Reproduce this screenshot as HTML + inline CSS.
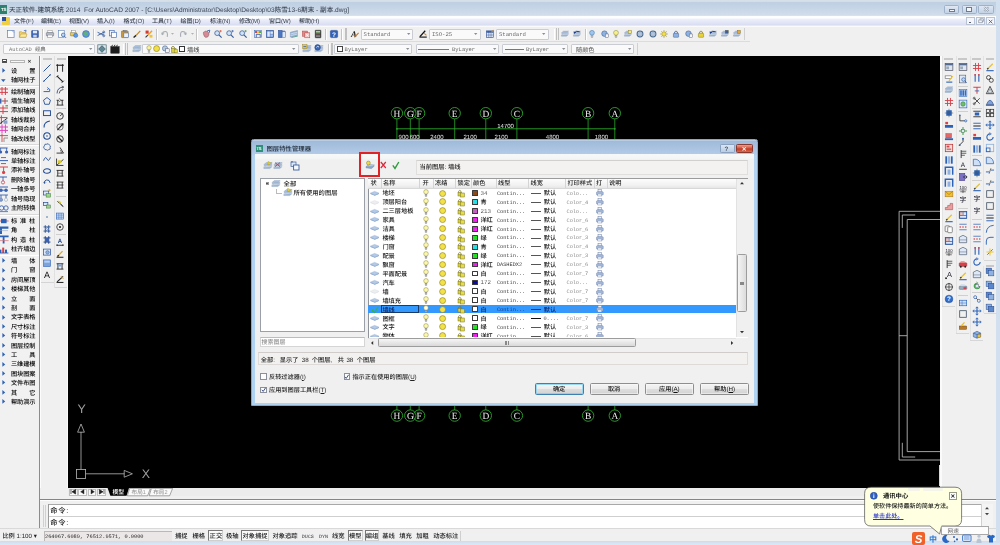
<!DOCTYPE html>
<html lang="zh"><head><meta charset="utf-8"><title>AutoCAD</title>
<style>
html,body{margin:0;padding:0}
body{width:1000px;height:545px;overflow:hidden;position:relative;background:#f0f0f0;font-family:"Liberation Sans","Noto Sans CJK SC",sans-serif;font-size:6.4px;color:#111;text-rendering:geometricPrecision;font-weight:500}
body div{position:absolute;box-sizing:border-box}
.t{white-space:nowrap}
.m{white-space:nowrap;font-family:"Liberation Mono","Noto Sans CJK SC",monospace}
svg{position:absolute;overflow:visible}
svg.i{filter:blur(0.28px)}
</style></head>
<body>
<div id="app" style="left:0;top:0;width:1000px;height:545px;will-change:transform;filter:blur(0.35px)">
<div style="left:0px;top:0px;width:1000px;height:16px;background:linear-gradient(#d8e0e9 0,#d4dde8 1.8px,#bfd0e3 2.4px,#c6d5e6 8px,#d3ddec 15.4px,#eef2f8 16px)"></div>
<div style="left:0px;top:4.6px;width:7px;height:9px;background:#2f7f6f"></div>
<div class="t" style="left:1px;top:7px;font-size:4.5px;line-height:5.85px;color:#fff;font-weight:bold;letter-spacing:-0.3px">TS</div>
<div class="t" style="left:9px;top:7px;font-size:6.6px;line-height:8.58px;color:#3c4654;">天正软件-建筑系统 2014&nbsp; For AutoCAD 2007 - [C:\Users\Administrator\Desktop\Desktop\03陈雪13-6期末 - 副本.dwg]</div>
<div style="left:944.2px;top:5.4px;width:15.0px;height:8.6px;border:0.6px solid #9fb2c9;border-radius:1.6px;background:linear-gradient(#dfe8f3,#c3d3e6)"></div>
<div style="left:961.6px;top:5.4px;width:15.0px;height:8.6px;border:0.6px solid #9fb2c9;border-radius:1.6px;background:linear-gradient(#dfe8f3,#c3d3e6)"></div>
<div style="left:978.4px;top:5.4px;width:15.600000000000023px;height:8.6px;border:0.6px solid #9fb2c9;border-radius:1.6px;background:linear-gradient(#dfe8f3,#c3d3e6)"></div>
<div style="left:949px;top:9.4px;width:6px;height:2.4px;border:0.6px solid #6f7a8a;background:#f4f7fb"></div>
<div style="left:965.8px;top:7.4px;width:6.6px;height:4.8px;border:0.6px solid #6f7a8a;border-top-width:1.2px;background:#f4f7fb"></div>
<svg class="i" style="left:982.8px;top:6.4px" width="7" height="7" viewBox="0 0 7 7"><path d="M1.2 1.2 L5.6 5.4 M5.6 1.2 L1.2 5.4" fill="none" stroke="#8a95a5" stroke-width="1.7" /><path d="M1.2 1.2 L5.6 5.4 M5.6 1.2 L1.2 5.4" fill="none" stroke="#ffffff" stroke-width="0.8" /></svg>
<div style="left:996px;top:0px;width:4px;height:545px;background:#d2dfee"></div>
<div style="left:0px;top:15.6px;width:996px;height:11px;background:linear-gradient(#fdfeff 0,#fdfeff 2px,#eef1fa 3px,#d8dcf2 9.2px,#f4f5fb 9.8px,#fbfbfd 11px)"></div>
<div style="left:2px;top:16.5px;width:8px;height:8.5px;background:#f0d040;border-radius:1px"></div>
<div style="left:2px;top:16.5px;width:4px;height:4px;background:#3050a0"></div>
<div class="t" style="left:14px;top:19px;font-size:6.0px;line-height:7.8px;color:#333b48;">文件(F)</div>
<div class="t" style="left:41px;top:19px;font-size:6.0px;line-height:7.8px;color:#333b48;">编辑(E)</div>
<div class="t" style="left:69px;top:19px;font-size:6.0px;line-height:7.8px;color:#333b48;">视图(V)</div>
<div class="t" style="left:97px;top:19px;font-size:6.0px;line-height:7.8px;color:#333b48;">插入(I)</div>
<div class="t" style="left:123.5px;top:19px;font-size:6.0px;line-height:7.8px;color:#333b48;">格式(O)</div>
<div class="t" style="left:152px;top:19px;font-size:6.0px;line-height:7.8px;color:#333b48;">工具(T)</div>
<div class="t" style="left:180.5px;top:19px;font-size:6.0px;line-height:7.8px;color:#333b48;">绘图(D)</div>
<div class="t" style="left:210px;top:19px;font-size:6.0px;line-height:7.8px;color:#333b48;">标注(N)</div>
<div class="t" style="left:239px;top:19px;font-size:6.0px;line-height:7.8px;color:#333b48;">修改(M)</div>
<div class="t" style="left:269px;top:19px;font-size:6.0px;line-height:7.8px;color:#333b48;">窗口(W)</div>
<div class="t" style="left:299px;top:19px;font-size:6.0px;line-height:7.8px;color:#333b48;">帮助(H)</div>
<div style="left:966px;top:17.3px;width:8.6px;height:7.4px;border:0.5px solid #b9c3d6;background:#f4f6fb"></div>
<div style="left:976.3px;top:17.3px;width:8.6px;height:7.4px;border:0.5px solid #b9c3d6;background:#f4f6fb"></div>
<div style="left:986.2px;top:17.3px;width:8.6px;height:7.4px;border:0.5px solid #b9c3d6;background:#f4f6fb"></div>
<div style="left:968.6px;top:22.2px;width:2.6px;height:0.8px;background:#5a6474"></div>
<svg class="i" style="left:977.6px;top:18.4px" width="6" height="6" viewBox="0 0 6 6"><rect x="2" y="0.8" width="3.4" height="2.8" fill="none" rx="0" stroke="#7a8494" stroke-width="0.6"/><rect x="0.8" y="2" width="3.4" height="2.8" fill="#f4f6fb" rx="0" stroke="#7a8494" stroke-width="0.6"/></svg>
<svg class="i" style="left:987.8px;top:18.6px" width="6" height="6" viewBox="0 0 6 6"><path d="M0.8 0.8 L4.4 4.4 M4.4 0.8 L0.8 4.4" fill="none" stroke="#5a6474" stroke-width="0.9" /></svg>
<div style="left:0px;top:26px;width:996px;height:30px;background:#f0f0f0"></div>
<div style="left:0px;top:26px;width:996px;height:0.6px;background:#fafafa"></div>
<div style="left:0px;top:40.8px;width:750px;height:0.6px;background:#dcdcdc"></div>
<svg class="i" style="left:5.6px;top:29.3px" width="10" height="10" viewBox="0 0 10 10"><g transform="translate(0.7,0.7) scale(0.86)"><rect x="1" y="0.8" width="7.6" height="8.4" fill="#fdfdff" rx="0" stroke="#5d7fb5" stroke-width="0.8"/><path d="M6 0.8 L8.6 3.4" fill="none" stroke="#5d7fb5" stroke-width="0.7" /></g></svg>
<svg class="i" style="left:17.8px;top:29.3px" width="10" height="10" viewBox="0 0 10 10"><g transform="translate(0.7,0.7) scale(0.86)"><path d="M0.8 8.8 L0.8 2.4 L3.4 2.4 L4.4 3.4 L8.4 3.4 L8.4 8.8 Z" fill="#f4d266" stroke="#b08a28" stroke-width="0.6" /><path d="M0.8 8.8 L2.6 5 L9.6 5 L8.4 8.8Z" fill="#fbe89a" stroke="#b08a28" stroke-width="0.5" /><path d="M6 1.2 L8.6 0.6 L8 3" fill="none" stroke="#3a69c0" stroke-width="0.9" /></g></svg>
<svg class="i" style="left:29.8px;top:29.3px" width="10" height="10" viewBox="0 0 10 10"><g transform="translate(0.7,0.7) scale(0.86)"><rect x="1" y="1" width="8" height="8" fill="#3f67b8" rx="0.6" stroke="#27478a" stroke-width="0.6"/><rect x="2.6" y="1.2" width="4.8" height="3" fill="#dfe8f8" rx="0"/><rect x="3" y="6" width="4" height="3" fill="#c9d2e4" rx="0"/></g></svg>
<div style="left:42.4px;top:29.4px;width:0.6px;height:10.4px;background:#c4c4c4"></div>
<div style="left:43.0px;top:29.4px;width:0.6px;height:10.4px;background:#fff"></div>
<svg class="i" style="left:45.4px;top:29.3px" width="10" height="10" viewBox="0 0 10 10"><g transform="translate(0.7,0.7) scale(0.86)"><rect x="2.5" y="0.8" width="5" height="3" fill="#fff" rx="0" stroke="#777" stroke-width="0.5"/><rect x="0.8" y="3.4" width="8.4" height="3.8" fill="#b9bec8" rx="0.6" stroke="#5e6470" stroke-width="0.6"/><rect x="2.4" y="6.2" width="5.2" height="2.8" fill="#fff" rx="0" stroke="#777" stroke-width="0.5"/></g></svg>
<svg class="i" style="left:57px;top:29.3px" width="10" height="10" viewBox="0 0 10 10"><g transform="translate(0.7,0.7) scale(0.86)"><rect x="1" y="0.8" width="6.6" height="8" fill="#fff" rx="0" stroke="#5d7fb5" stroke-width="0.7"/><circle cx="6.4" cy="6" r="2.1" fill="#bcd6f4" stroke="#3b5f9c" stroke-width="0.8"/><path d="M7.9 7.6 L9.6 9.4" fill="none" stroke="#3b5f9c" stroke-width="1.1" /></g></svg>
<svg class="i" style="left:69px;top:29.3px" width="10" height="10" viewBox="0 0 10 10"><g transform="translate(0.7,0.7) scale(0.86)"><rect x="0.8" y="3.2" width="7" height="4" fill="#e9c84e" rx="0.5" stroke="#8d7424" stroke-width="0.6"/><rect x="2" y="0.8" width="4.6" height="2.6" fill="#fff" rx="0" stroke="#777" stroke-width="0.5"/><circle cx="7" cy="6.6" r="2.4" fill="#5d9be0" stroke="#2d5aa0" stroke-width="0.5"/></g></svg>
<svg class="i" style="left:81px;top:29.3px" width="10" height="10" viewBox="0 0 10 10"><g transform="translate(0.7,0.7) scale(0.86)"><circle cx="5" cy="5" r="4" fill="#5b9adf" stroke="#2d5aa0" stroke-width="0.6"/><path d="M2.4 3.4 Q4.5 2 6 3.6 Q7 5.4 5 6.4 Q3 6.8 2.4 3.4Z" fill="#63b84f" stroke="none" stroke-width="0" /></g></svg>
<div style="left:93.2px;top:29.4px;width:0.6px;height:10.4px;background:#c4c4c4"></div>
<div style="left:93.8px;top:29.4px;width:0.6px;height:10.4px;background:#fff"></div>
<svg class="i" style="left:95.8px;top:29.3px" width="10" height="10" viewBox="0 0 10 10"><g transform="translate(0.7,0.7) scale(0.86)"><path d="M1 3 L8.6 6.6 M1 6.8 L8.6 3" fill="none" stroke="#2d5aa0" stroke-width="1.0" /><circle cx="8.2" cy="2.8" r="1.2" fill="none" stroke="#2d5aa0" stroke-width="0.8"/><circle cx="8.2" cy="7" r="1.2" fill="none" stroke="#2d5aa0" stroke-width="0.8"/></g></svg>
<svg class="i" style="left:108px;top:29.3px" width="10" height="10" viewBox="0 0 10 10"><g transform="translate(0.7,0.7) scale(0.86)"><rect x="0.8" y="0.8" width="5.6" height="6.4" fill="#eef3fc" rx="0" stroke="#4a6fb3" stroke-width="0.8"/><rect x="3.4" y="3" width="5.8" height="6.2" fill="#fdfdff" rx="0" stroke="#4a6fb3" stroke-width="0.8"/></g></svg>
<svg class="i" style="left:120px;top:29.3px" width="10" height="10" viewBox="0 0 10 10"><g transform="translate(0.7,0.7) scale(0.86)"><rect x="1" y="1.4" width="7.6" height="7.8" fill="#c99a45" rx="0.6" stroke="#7d5a1e" stroke-width="0.6"/><rect x="3" y="0.6" width="3.6" height="1.8" fill="#9aa3b3" rx="0" stroke="#555" stroke-width="0.4"/><rect x="3.6" y="3.8" width="5.6" height="5.4" fill="#eaf1fc" rx="0" stroke="#4a6fb3" stroke-width="0.7"/></g></svg>
<svg class="i" style="left:132px;top:29.3px" width="10" height="10" viewBox="0 0 10 10"><g transform="translate(0.7,0.7) scale(0.86)"><path d="M1 9 L4 6.6" fill="none" stroke="#222" stroke-width="1.6" /><path d="M4 6.6 L8.8 1.4" fill="none" stroke="#c08a2e" stroke-width="1.5" /></g></svg>
<svg class="i" style="left:144px;top:29.3px" width="10" height="10" viewBox="0 0 10 10"><g transform="translate(0.7,0.7) scale(0.86)"><path d="M1 9 L3.6 6.4" fill="none" stroke="#333" stroke-width="1.3" /><path d="M3.6 6.4 L8.6 1.2" fill="none" stroke="#e3a32c" stroke-width="1.6" /><rect x="1" y="1" width="3.6" height="3.6" fill="#d83a2a" rx="0"/><rect x="5.6" y="6" width="3.4" height="3.2" fill="#f0c33c" rx="0"/></g></svg>
<div style="left:156.4px;top:29.4px;width:0.6px;height:10.4px;background:#c4c4c4"></div>
<div style="left:157.0px;top:29.4px;width:0.6px;height:10.4px;background:#fff"></div>
<svg class="i" style="left:159.6px;top:29.3px" width="10" height="10" viewBox="0 0 10 10"><g transform="translate(0.7,0.7) scale(0.86)"><path d="M2 2 L2 6 L6 6" fill="none" stroke="none" stroke-width="0" /><path d="M1.6 5.6 Q2.4 1.6 6 2.2 Q8.6 3.2 7.6 8.4" fill="none" stroke="#a9adb5" stroke-width="1.3" /><path d="M0.4 3.2 L1.6 6.4 L4.4 4.6Z" fill="#a9adb5" stroke="none" stroke-width="0" /></g></svg>
<svg class="i" style="left:177.6px;top:29.3px" width="10" height="10" viewBox="0 0 10 10"><g transform="translate(0.7,0.7) scale(0.86)"><g transform="translate(10,0) scale(-1,1)"><path d="M2 2 L2 6 L6 6" fill="none" stroke="none" stroke-width="0" /><path d="M1.6 5.6 Q2.4 1.6 6 2.2 Q8.6 3.2 7.6 8.4" fill="none" stroke="#a9adb5" stroke-width="1.3" /><path d="M0.4 3.2 L1.6 6.4 L4.4 4.6Z" fill="#a9adb5" stroke="none" stroke-width="0" /></g></g></svg>
<div style="left:196px;top:29.4px;width:0.6px;height:10.4px;background:#c4c4c4"></div>
<div style="left:196.6px;top:29.4px;width:0.6px;height:10.4px;background:#fff"></div>
<svg class="i" style="left:200.6px;top:29.3px" width="10" height="10" viewBox="0 0 10 10"><g transform="translate(0.7,0.7) scale(0.86)"><path d="M2 5 Q1.4 2 3.4 2.4 Q4 0.8 5.4 1.8 Q7 1 7.4 3 Q9 3.4 8.4 6 Q8 9 5 9 Q3 9 2 5Z" fill="#d58a94" stroke="#7a4b54" stroke-width="0.5" /><path d="M6.4 1.4 L9.4 0.6 L8.8 3.6" fill="none" stroke="#2d5aa0" stroke-width="1" /></g></svg>
<svg class="i" style="left:213px;top:29.3px" width="10" height="10" viewBox="0 0 10 10"><g transform="translate(0.7,0.7) scale(0.86)"><circle cx="4" cy="4" r="2.8" fill="#cfe2f8" stroke="#3b5f9c" stroke-width="0.9"/><path d="M6 6 L9.2 9.2" fill="none" stroke="#3b5f9c" stroke-width="1.4" /><path d="M6.6 1.6 L9.4 1.6 M8 0.4 L8 3" fill="none" stroke="#d94a3a" stroke-width="0.8" /></g></svg>
<svg class="i" style="left:225.4px;top:29.3px" width="10" height="10" viewBox="0 0 10 10"><g transform="translate(0.7,0.7) scale(0.86)"><circle cx="4" cy="4" r="2.8" fill="#cfe2f8" stroke="#3b5f9c" stroke-width="0.9"/><path d="M6 6 L9.2 9.2" fill="none" stroke="#3b5f9c" stroke-width="1.4" /><path d="M6.6 1.6 L9.4 1.6 M8 0.4 L8 3" fill="none" stroke="#3b5f9c" stroke-width="0.8" /></g></svg>
<svg class="i" style="left:237.8px;top:29.3px" width="10" height="10" viewBox="0 0 10 10"><g transform="translate(0.7,0.7) scale(0.86)"><circle cx="4" cy="4" r="2.8" fill="#cfe2f8" stroke="#3b5f9c" stroke-width="0.9"/><path d="M6 6 L9.2 9.2" fill="none" stroke="#3b5f9c" stroke-width="1.4" /><path d="M6.6 1.6 L9.4 1.6 M8 0.4 L8 3" fill="none" stroke="#3f9c4a" stroke-width="0.8" /></g></svg>
<div style="left:249.8px;top:29.4px;width:0.6px;height:10.4px;background:#c4c4c4"></div>
<div style="left:250.4px;top:29.4px;width:0.6px;height:10.4px;background:#fff"></div>
<svg class="i" style="left:252.6px;top:29.3px" width="10" height="10" viewBox="0 0 10 10"><g transform="translate(0.7,0.7) scale(0.86)"><rect x="1" y="1" width="8" height="8" fill="#e9eef8" rx="0" stroke="#4a6fb3" stroke-width="0.7"/><rect x="1.6" y="1.6" width="2.2" height="2.2" fill="#d83a2a" rx="0"/><rect x="4" y="1.6" width="2.2" height="2.2" fill="#e7c531" rx="0"/><rect x="6.4" y="1.6" width="2" height="2.2" fill="#3f9c4a" rx="0"/><path d="M3 5.4 L3 9 M3 5.4 L7.6 5.4 L7.6 8.6" fill="none" stroke="#27478a" stroke-width="0.9" /></g></svg>
<svg class="i" style="left:264.6px;top:29.3px" width="10" height="10" viewBox="0 0 10 10"><g transform="translate(0.7,0.7) scale(0.86)"><rect x="0.8" y="0.8" width="8.4" height="8.4" fill="#4a78c4" rx="0" stroke="#27478a" stroke-width="0.6"/><rect x="1.8" y="2" width="3" height="6.2" fill="#dfe8f8" rx="0"/><rect x="5.4" y="2" width="3" height="2.8" fill="#dfe8f8" rx="0"/><rect x="5.4" y="5.4" width="3" height="2.8" fill="#a7c0e8" rx="0"/></g></svg>
<svg class="i" style="left:276.6px;top:29.3px" width="10" height="10" viewBox="0 0 10 10"><g transform="translate(0.7,0.7) scale(0.86)"><rect x="0.8" y="0.8" width="4.4" height="8.4" fill="#4a78c4" rx="0" stroke="#27478a" stroke-width="0.6"/><rect x="5.2" y="2.4" width="3.8" height="6.8" fill="#dfe8f8" rx="0" stroke="#4a6fb3" stroke-width="0.6"/><path d="M5.4 2.4 Q7.6 0.4 9 2.4" fill="none" stroke="#27478a" stroke-width="0.8" /></g></svg>
<svg class="i" style="left:288.8px;top:29.3px" width="10" height="10" viewBox="0 0 10 10"><g transform="translate(0.7,0.7) scale(0.86)"><path d="M0.8 3 L9 1 L9 6.6 L0.8 8.6Z" fill="#9db7d8" stroke="#5f7fa8" stroke-width="0.5" /><path d="M0.8 5 L9 3 M0.8 7 L9 5" fill="none" stroke="#e8f0fa" stroke-width="0.6" /><path d="M2 9 L9.4 7.4" fill="none" stroke="#4a9a8a" stroke-width="1" /></g></svg>
<svg class="i" style="left:300.8px;top:29.3px" width="10" height="10" viewBox="0 0 10 10"><g transform="translate(0.7,0.7) scale(0.86)"><rect x="0.8" y="1.6" width="6" height="6" fill="#e58a8a" rx="0" stroke="#b34848" stroke-width="0.6"/><rect x="3.6" y="3.6" width="5.8" height="5.8" fill="#f4c1c1" rx="0" stroke="#b34848" stroke-width="0.6"/><path d="M5 5 L8 8 M8 5 L5 8" fill="none" stroke="#fff" stroke-width="0.7" /></g></svg>
<svg class="i" style="left:312.6px;top:29.3px" width="10" height="10" viewBox="0 0 10 10"><g transform="translate(0.7,0.7) scale(0.86)"><rect x="1.8" y="0.6" width="6.6" height="8.8" fill="#3a3a3a" rx="0.5" stroke="#111" stroke-width="0.5"/><rect x="2.6" y="1.4" width="5" height="2" fill="#9fd48a" rx="0"/><rect x="2.6" y="4.2" width="5" height="1" fill="#c85a4a" rx="0"/><rect x="2.6" y="6" width="5" height="0.9" fill="#999" rx="0"/><rect x="2.6" y="7.6" width="5" height="0.9" fill="#999" rx="0"/></g></svg>
<div style="left:325.4px;top:29.4px;width:0.6px;height:10.4px;background:#c4c4c4"></div>
<div style="left:326.0px;top:29.4px;width:0.6px;height:10.4px;background:#fff"></div>
<svg class="i" style="left:328.6px;top:29.3px" width="10" height="10" viewBox="0 0 10 10"><g transform="translate(0.7,0.7) scale(0.86)"><rect x="0.8" y="0.8" width="8.4" height="8.4" fill="#2f62b8" rx="1.2" stroke="#1d3f86" stroke-width="0.6"/><text x="5" y="8" font-size="7.6" font-weight="bold" text-anchor="middle" fill="#fff" font-family="Liberation Sans,sans-serif">?</text></g></svg>
<div style="left:341.4px;top:29.4px;width:0.6px;height:10.4px;background:#c4c4c4"></div>
<div style="left:342.0px;top:29.4px;width:0.6px;height:10.4px;background:#fff"></div>
<div style="left:344.6px;top:28.4px;width:0.7px;height:12px;background:#c0c0c0"></div>
<div style="left:346.20000000000005px;top:28.4px;width:0.7px;height:12px;background:#c0c0c0"></div>
<svg class="i" style="left:349.8px;top:29.3px" width="10" height="10" viewBox="0 0 10 10"><g transform="translate(0.7,0.7) scale(0.86)"><text x="0.4" y="8.6" font-size="10" font-weight="bold" font-style="italic" fill="#222" font-family="Liberation Serif,serif">A</text><path d="M4.4 9 L9.2 3.6" fill="none" stroke="#c47a2a" stroke-width="1.3" /></g></svg>
<svg class="i" style="left:417.6px;top:29.3px" width="10" height="10" viewBox="0 0 10 10"><g transform="translate(0.7,0.7) scale(0.86)"><path d="M0.8 8.6 L9.4 8.6" fill="none" stroke="#111" stroke-width="1.3" /><path d="M1.4 8 L7.6 1.2" fill="none" stroke="#111" stroke-width="1.5" /><path d="M6.4 4.2 L9 6.6" fill="none" stroke="#c08a2e" stroke-width="1.2" /></g></svg>
<svg class="i" style="left:484.8px;top:29.3px" width="10" height="10" viewBox="0 0 10 10"><g transform="translate(0.7,0.7) scale(0.86)"><rect x="0.8" y="1.4" width="8" height="7.6" fill="#dfe8f8" rx="0" stroke="#27478a" stroke-width="0.7"/><rect x="0.8" y="1.4" width="8" height="2.2" fill="#3f67b8" rx="0"/><path d="M3.6 1.4 L3.6 9 M6.2 1.4 L6.2 9 M0.8 6.2 L8.8 6.2" fill="none" stroke="#27478a" stroke-width="0.5" /><path d="M6 3.4 L9.4 0.4" fill="none" stroke="#c08a2e" stroke-width="1.2" /></g></svg>
<div style="left:553.6px;top:29.4px;width:0.6px;height:10.4px;background:#c4c4c4"></div>
<div style="left:554.2px;top:29.4px;width:0.6px;height:10.4px;background:#fff"></div>
<div style="left:556.4px;top:28.4px;width:0.7px;height:12px;background:#c0c0c0"></div>
<div style="left:558.0px;top:28.4px;width:0.7px;height:12px;background:#c0c0c0"></div>
<svg class="i" style="left:559.6px;top:29.3px" width="10" height="10" viewBox="0 0 10 10"><g transform="translate(0.7,0.7) scale(0.86)"><path d="M0.8 6.4 L3.4 4.4 L9.2 4.4 L6.8 6.4Z" fill="#d3deec" stroke="#7f98b8" stroke-width="0.35" /><path d="M0.8 5 L3.4 3 L9.2 3 L6.8 5Z" fill="#bccde2" stroke="#7f98b8" stroke-width="0.35" /><path d="M0.8 3.6 L3.4 1.6 L9.2 1.6 L6.8 3.6Z" fill="#a9bfdb" stroke="#7f98b8" stroke-width="0.35" /><path d="M0.8 6.4 L0.8 7.6 L6.8 7.6 L9.2 5.6" fill="#9db3cf" stroke="#7f98b8" stroke-width="0.35" /></g></svg>
<svg class="i" style="left:572px;top:29.3px" width="10" height="10" viewBox="0 0 10 10"><g transform="translate(0.7,0.7) scale(0.86)"><path d="M0.8 6.4 L3.4 4.4 L9.2 4.4 L6.8 6.4Z" fill="#d3deec" stroke="#7f98b8" stroke-width="0.35" /><path d="M0.8 5 L3.4 3 L9.2 3 L6.8 5Z" fill="#bccde2" stroke="#7f98b8" stroke-width="0.35" /><path d="M0.8 3.6 L3.4 1.6 L9.2 1.6 L6.8 3.6Z" fill="#a9bfdb" stroke="#7f98b8" stroke-width="0.35" /><path d="M0.8 6.4 L0.8 7.6 L6.8 7.6 L9.2 5.6" fill="#9db3cf" stroke="#7f98b8" stroke-width="0.35" /><path d="M2 4 Q4 0.6 8 2.4" fill="none" stroke="#1d3f86" stroke-width="1.1" /><path d="M0.8 2 L2 4.6 L4 2.8Z" fill="#1d3f86" stroke="none" stroke-width="0" /></g></svg>
<div style="left:585px;top:29.4px;width:0.6px;height:10.4px;background:#c4c4c4"></div>
<div style="left:585.6px;top:29.4px;width:0.6px;height:10.4px;background:#fff"></div>
<svg class="i" style="left:587px;top:29.3px" width="10" height="10" viewBox="0 0 10 10"><g transform="translate(0.7,0.7) scale(0.86)"><circle cx="5" cy="3.6" r="2.8" fill="#9cc6f0" stroke="#3b6ea8" stroke-width="0.6"/><rect x="3.9" y="6.4" width="2.2" height="2.6" fill="#c9c9c9" rx="0" stroke="#777" stroke-width="0.4"/></g></svg>
<svg class="i" style="left:600px;top:29.3px" width="10" height="10" viewBox="0 0 10 10"><g transform="translate(0.7,0.7) scale(0.86)"><circle cx="4.4" cy="4.6" r="3.2" fill="#8fb2e0" stroke="#3b5f9c" stroke-width="0.7"/><rect x="5.4" y="5" width="3.6" height="4" fill="#f4f6fb" rx="0" stroke="#556" stroke-width="0.5"/></g></svg>
<svg class="i" style="left:611px;top:29.3px" width="10" height="10" viewBox="0 0 10 10"><g transform="translate(0.7,0.7) scale(0.86)"><circle cx="5" cy="3.6" r="2.8" fill="#f7ef8a" stroke="#8a8438" stroke-width="0.6"/><rect x="3.9" y="6.4" width="2.2" height="2.6" fill="#c9c9c9" rx="0" stroke="#777" stroke-width="0.4"/></g></svg>
<svg class="i" style="left:623px;top:29.3px" width="10" height="10" viewBox="0 0 10 10"><g transform="translate(0.7,0.7) scale(0.86)"><path d="M0.8 6.4 L3.4 4.4 L9.2 4.4 L6.8 6.4Z" fill="#d3deec" stroke="#7f98b8" stroke-width="0.35" /><path d="M0.8 5 L3.4 3 L9.2 3 L6.8 5Z" fill="#bccde2" stroke="#7f98b8" stroke-width="0.35" /><path d="M0.8 3.6 L3.4 1.6 L9.2 1.6 L6.8 3.6Z" fill="#a9bfdb" stroke="#7f98b8" stroke-width="0.35" /><path d="M0.8 6.4 L0.8 7.6 L6.8 7.6 L9.2 5.6" fill="#9db3cf" stroke="#7f98b8" stroke-width="0.35" /><rect x="5.2" y="0.6" width="3.6" height="3.6" fill="#f3e98a" rx="0" stroke="#6d6420" stroke-width="0.4"/></g></svg>
<svg class="i" style="left:635px;top:29.3px" width="10" height="10" viewBox="0 0 10 10"><g transform="translate(0.7,0.7) scale(0.86)"><circle cx="5" cy="5" r="3.4" fill="#b8cbe2" stroke="#4a6a90" stroke-width="1.2"/><circle cx="5" cy="5" r="1.3" fill="#fff" stroke="#4a6a90" stroke-width="0.5"/></g></svg>
<svg class="i" style="left:647.6px;top:29.3px" width="10" height="10" viewBox="0 0 10 10"><g transform="translate(0.7,0.7) scale(0.86)"><circle cx="5" cy="5" r="3.4" fill="#b8cbe2" stroke="#4a6a90" stroke-width="1.2"/><circle cx="5" cy="5" r="1.3" fill="#fff" stroke="#4a6a90" stroke-width="0.5"/></g></svg>
<svg class="i" style="left:659px;top:29.3px" width="10" height="10" viewBox="0 0 10 10"><g transform="translate(0.7,0.7) scale(0.86)"><circle cx="5" cy="5" r="2.6" fill="#f3e04a" stroke="#8a7a20" stroke-width="0.6"/><path d="M5 0.6 L5 1.8 M5 8.2 L5 9.4 M0.6 5 L1.8 5 M8.2 5 L9.4 5 M1.9 1.9 L2.7 2.7 M7.3 7.3 L8.1 8.1 M1.9 8.1 L2.7 7.3 M7.3 2.7 L8.1 1.9" fill="none" stroke="#8a7a20" stroke-width="0.7" /></g></svg>
<svg class="i" style="left:671px;top:29.3px" width="10" height="10" viewBox="0 0 10 10"><g transform="translate(0.7,0.7) scale(0.86)"><rect x="2" y="4.2" width="6" height="4.6" fill="#8fb2e0" rx="0.6" stroke="#3b5f9c" stroke-width="0.6"/><path d="M3.4 4.2 L3.4 2.6 Q5 0.6 6.6 2.6 L6.6 4.2" fill="none" stroke="#3b5f9c" stroke-width="0.9" /></g></svg>
<svg class="i" style="left:684px;top:29.3px" width="10" height="10" viewBox="0 0 10 10"><g transform="translate(0.7,0.7) scale(0.86)"><circle cx="4.4" cy="4.6" r="3.2" fill="#8fb2e0" stroke="#3b5f9c" stroke-width="0.7"/><rect x="5.4" y="5" width="3.6" height="4" fill="#f4f6fb" rx="0" stroke="#556" stroke-width="0.5"/></g></svg>
<svg class="i" style="left:696px;top:29.3px" width="10" height="10" viewBox="0 0 10 10"><g transform="translate(0.7,0.7) scale(0.86)"><rect x="2" y="4.2" width="6" height="4.6" fill="#e6d33c" rx="0.6" stroke="#8a7a20" stroke-width="0.6"/><path d="M3.4 4.2 L3.4 2.6 Q5 0.6 6.6 2.6 L6.6 4.2" fill="none" stroke="#8a7a20" stroke-width="0.9" /></g></svg>
<svg class="i" style="left:708px;top:29.3px" width="10" height="10" viewBox="0 0 10 10"><g transform="translate(0.7,0.7) scale(0.86)"><path d="M0.8 6.4 L3.4 4.4 L9.2 4.4 L6.8 6.4Z" fill="#d3deec" stroke="#7f98b8" stroke-width="0.35" /><path d="M0.8 5 L3.4 3 L9.2 3 L6.8 5Z" fill="#bccde2" stroke="#7f98b8" stroke-width="0.35" /><path d="M0.8 3.6 L3.4 1.6 L9.2 1.6 L6.8 3.6Z" fill="#a9bfdb" stroke="#7f98b8" stroke-width="0.35" /><path d="M0.8 6.4 L0.8 7.6 L6.8 7.6 L9.2 5.6" fill="#9db3cf" stroke="#7f98b8" stroke-width="0.35" /><path d="M2 4 Q4 0.6 8 2.4" fill="none" stroke="#1d3f86" stroke-width="1.1" /><path d="M0.8 2 L2 4.6 L4 2.8Z" fill="#1d3f86" stroke="none" stroke-width="0" /></g></svg>
<svg class="i" style="left:719.6px;top:29.3px" width="10" height="10" viewBox="0 0 10 10"><g transform="translate(0.7,0.7) scale(0.86)"><path d="M0.8 6.4 L3.4 4.4 L9.2 4.4 L6.8 6.4Z" fill="#d3deec" stroke="#7f98b8" stroke-width="0.35" /><path d="M0.8 5 L3.4 3 L9.2 3 L6.8 5Z" fill="#bccde2" stroke="#7f98b8" stroke-width="0.35" /><path d="M0.8 3.6 L3.4 1.6 L9.2 1.6 L6.8 3.6Z" fill="#a9bfdb" stroke="#7f98b8" stroke-width="0.35" /><path d="M0.8 6.4 L0.8 7.6 L6.8 7.6 L9.2 5.6" fill="#9db3cf" stroke="#7f98b8" stroke-width="0.35" /><rect x="5.2" y="0.6" width="3.6" height="3.6" fill="#3b5f9c" rx="0" stroke="#6d6420" stroke-width="0.4"/></g></svg>
<svg class="i" style="left:731.6px;top:29.3px" width="10" height="10" viewBox="0 0 10 10"><g transform="translate(0.7,0.7) scale(0.86)"><path d="M0.8 6.4 L3.4 4.4 L9.2 4.4 L6.8 6.4Z" fill="#d3deec" stroke="#7f98b8" stroke-width="0.35" /><path d="M0.8 5 L3.4 3 L9.2 3 L6.8 5Z" fill="#bccde2" stroke="#7f98b8" stroke-width="0.35" /><path d="M0.8 3.6 L3.4 1.6 L9.2 1.6 L6.8 3.6Z" fill="#a9bfdb" stroke="#7f98b8" stroke-width="0.35" /><path d="M0.8 6.4 L0.8 7.6 L6.8 7.6 L9.2 5.6" fill="#9db3cf" stroke="#7f98b8" stroke-width="0.35" /><rect x="5.2" y="0.6" width="3.6" height="3.6" fill="#e9a83a" rx="0" stroke="#6d6420" stroke-width="0.4"/></g></svg>
<svg class="i" style="left:171.2px;top:33.0px" width="3" height="2" viewBox="0 0 3 2"><path d="M0 0 L3 0 L1.5 1.8Z" fill="#b0b0b0" stroke="none" stroke-width="0" /></svg>
<svg class="i" style="left:190.8px;top:33.0px" width="3" height="2" viewBox="0 0 3 2"><path d="M0 0 L3 0 L1.5 1.8Z" fill="#b0b0b0" stroke="none" stroke-width="0" /></svg>
<div style="left:360.6px;top:28.6px;width:52.4px;height:11px;background:#fafafa;border:0.6px solid #c9cdd3;border-radius:1px"></div>
<div class="m" style="left:363.6px;top:31px;font-size:5.6px;line-height:7.28px;color:#6a6a6a;">Standard</div>
<svg class="i" style="left:406.8px;top:33.2px" width="4" height="2" viewBox="0 0 4 2"><path d="M0 0 L3.4 0 L1.7 2Z" fill="#8a8f98" stroke="none" stroke-width="0" /></svg>
<div style="left:429px;top:28.6px;width:51.6px;height:11px;background:#fafafa;border:0.6px solid #c9cdd3;border-radius:1px"></div>
<div class="m" style="left:432px;top:31px;font-size:5.6px;line-height:7.28px;color:#6a6a6a;">ISO-25</div>
<svg class="i" style="left:474.40000000000003px;top:33.2px" width="4" height="2" viewBox="0 0 4 2"><path d="M0 0 L3.4 0 L1.7 2Z" fill="#8a8f98" stroke="none" stroke-width="0" /></svg>
<div style="left:496px;top:28.6px;width:52.6px;height:11px;background:#fafafa;border:0.6px solid #c9cdd3;border-radius:1px"></div>
<div class="m" style="left:499px;top:31px;font-size:5.6px;line-height:7.28px;color:#6a6a6a;">Standard</div>
<svg class="i" style="left:542.4px;top:33.2px" width="4" height="2" viewBox="0 0 4 2"><path d="M0 0 L3.4 0 L1.7 2Z" fill="#8a8f98" stroke="none" stroke-width="0" /></svg>
<div style="left:744.4px;top:28px;width:0.6px;height:12px;background:#d0d0d0"></div>
<div style="left:3px;top:43.8px;width:92.4px;height:10.6px;background:#fafafa;border:0.6px solid #c9cdd3;border-radius:1px"></div>
<div class="m" style="left:9px;top:47px;font-size:5.4px;line-height:7.02px;color:#777;">AutoCAD 经典</div>
<svg class="i" style="left:89.2px;top:48.199999999999996px" width="4" height="2" viewBox="0 0 4 2"><path d="M0 0 L3.4 0 L1.7 2Z" fill="#8a8f98" stroke="none" stroke-width="0" /></svg>
<svg class="i" style="left:97.4px;top:44.199999999999996px" width="10" height="10" viewBox="0 0 10 10"><rect x="0.8" y="0.8" width="8.4" height="8.4" fill="#dfe8f0" rx="0" stroke="#4a6a70" stroke-width="0.7"/><circle cx="5" cy="5" r="2.4" fill="#8ab0b8" stroke="#2f5560" stroke-width="0.8"/><path d="M5 0.8 L5 9.2 M0.8 5 L9.2 5" fill="none" stroke="#2f5560" stroke-width="0.5" /></svg>
<svg class="i" style="left:109.6px;top:44.199999999999996px" width="10" height="10" viewBox="0 0 10 10"><rect x="0.8" y="2.6" width="8.4" height="6.6" fill="#1c1c1c" rx="0" stroke="#000" stroke-width="0.4"/><path d="M1.6 2.6 L2.6 0.8 M4 2.6 L5 0.8 M6.4 2.6 L7.4 0.8" fill="none" stroke="#222" stroke-width="0.9" /></svg>
<div style="left:122.6px;top:43.8px;width:0.6px;height:10.6px;background:#c4c4c4"></div>
<div style="left:123.19999999999999px;top:43.8px;width:0.6px;height:10.6px;background:#fff"></div>
<div style="left:125.4px;top:43.199999999999996px;width:0.7px;height:11.6px;background:#c0c0c0"></div>
<div style="left:127.0px;top:43.199999999999996px;width:0.7px;height:11.6px;background:#c0c0c0"></div>
<svg class="i" style="left:131.6px;top:44.4px" width="10" height="10" viewBox="0 0 10 10"><path d="M0.8 6.4 L3.4 4.4 L9.2 4.4 L6.8 6.4Z" fill="#d3deec" stroke="#7f98b8" stroke-width="0.35" /><path d="M0.8 5 L3.4 3 L9.2 3 L6.8 5Z" fill="#bccde2" stroke="#7f98b8" stroke-width="0.35" /><path d="M0.8 3.6 L3.4 1.6 L9.2 1.6 L6.8 3.6Z" fill="#a9bfdb" stroke="#7f98b8" stroke-width="0.35" /><path d="M0.8 6.4 L0.8 7.6 L6.8 7.6 L9.2 5.6" fill="#9db3cf" stroke="#7f98b8" stroke-width="0.35" /></svg>
<div style="left:141.6px;top:43.8px;width:157.4px;height:10.6px;background:#fafafa;border:0.6px solid #c9cdd3;border-radius:1px"></div>
<svg class="i" style="left:145.6px;top:45.0px" width="6" height="8" viewBox="0 0 6 8"><circle cx="3" cy="2.8" r="2.2" fill="#f9f3a0" stroke="#8a8438" stroke-width="0.5"/><rect x="2.1" y="5" width="1.8" height="2.2" fill="#c9c9c9" rx="0" stroke="#777" stroke-width="0.4"/></svg>
<svg class="i" style="left:153.2px;top:45.4px" width="8" height="8" viewBox="0 0 8 8"><circle cx="3.6" cy="3.6" r="3" fill="#f1e04a" stroke="#8a7a20" stroke-width="0.6"/></svg>
<svg class="i" style="left:161.8px;top:45.0px" width="8" height="8" viewBox="0 0 8 8"><circle cx="3" cy="3.4" r="2.6" fill="#b8cbe2" stroke="#4a6a90" stroke-width="0.6"/><rect x="3.6" y="3.8" width="3.6" height="3.8" fill="#f4f6fb" rx="0" stroke="#556" stroke-width="0.5"/></svg>
<svg class="i" style="left:170px;top:45.0px" width="9" height="9" viewBox="0 0 9 9"><rect x="1.6" y="3.4" width="4.4" height="4" fill="#d9d03c" rx="0" stroke="#7a7420" stroke-width="0.5"/><path d="M1.6 3.6 L1.6 2.2 Q3 0.6 4.4 2.2 L4.4 3.4" fill="none" stroke="#7a7420" stroke-width="0.8" /><rect x="4.2" y="4.4" width="3.4" height="3.4" fill="#e6dc4a" rx="0" stroke="#7a7420" stroke-width="0.4"/></svg>
<div style="left:178.8px;top:46.4px;width:6.6px;height:5.6px;background:#fff;border:0.8px solid #333"></div>
<div class="t" style="left:187px;top:47px;font-size:6.2px;line-height:8.06px;color:#555;">墙线</div>
<svg class="i" style="left:292.4px;top:48.199999999999996px" width="4" height="2" viewBox="0 0 4 2"><path d="M0 0 L3.4 0 L1.7 2Z" fill="#8a8f98" stroke="none" stroke-width="0" /></svg>
<svg class="i" style="left:301.6px;top:44.199999999999996px" width="10" height="10" viewBox="0 0 10 10"><path d="M0.8 6.4 L3.4 4.4 L9.2 4.4 L6.8 6.4Z" fill="#d3deec" stroke="#7f98b8" stroke-width="0.35" /><path d="M0.8 5 L3.4 3 L9.2 3 L6.8 5Z" fill="#bccde2" stroke="#7f98b8" stroke-width="0.35" /><path d="M0.8 3.6 L3.4 1.6 L9.2 1.6 L6.8 3.6Z" fill="#a9bfdb" stroke="#7f98b8" stroke-width="0.35" /><path d="M0.8 6.4 L0.8 7.6 L6.8 7.6 L9.2 5.6" fill="#9db3cf" stroke="#7f98b8" stroke-width="0.35" /><rect x="0.6" y="0.6" width="4.4" height="4" fill="#f0c83c" rx="0" stroke="#8a7424" stroke-width="0.4"/><path d="M1.4 2.6 L4.2 2.6" fill="none" stroke="#3a69c0" stroke-width="0.9" /></svg>
<svg class="i" style="left:313.6px;top:44.199999999999996px" width="10" height="10" viewBox="0 0 10 10"><path d="M0.8 6.4 L3.4 4.4 L9.2 4.4 L6.8 6.4Z" fill="#d3deec" stroke="#7f98b8" stroke-width="0.35" /><path d="M0.8 5 L3.4 3 L9.2 3 L6.8 5Z" fill="#bccde2" stroke="#7f98b8" stroke-width="0.35" /><path d="M0.8 3.6 L3.4 1.6 L9.2 1.6 L6.8 3.6Z" fill="#a9bfdb" stroke="#7f98b8" stroke-width="0.35" /><path d="M0.8 6.4 L0.8 7.6 L6.8 7.6 L9.2 5.6" fill="#9db3cf" stroke="#7f98b8" stroke-width="0.35" /><circle cx="3.6" cy="3.4" r="2.8" fill="#3d68b4" stroke="#1d3f86" stroke-width="0.5"/><path d="M2.4 3.4 Q3.6 1.6 5 3" fill="none" stroke="#fff" stroke-width="0.8" /></svg>
<div style="left:328px;top:43.8px;width:0.6px;height:10.6px;background:#c4c4c4"></div>
<div style="left:328.6px;top:43.8px;width:0.6px;height:10.6px;background:#fff"></div>
<div style="left:330.6px;top:43.199999999999996px;width:0.7px;height:11.6px;background:#c0c0c0"></div>
<div style="left:332.20000000000005px;top:43.199999999999996px;width:0.7px;height:11.6px;background:#c0c0c0"></div>
<div style="left:333.6px;top:43.8px;width:78.6px;height:10.6px;background:#fafafa;border:0.6px solid #c9cdd3;border-radius:1px"></div>
<svg class="i" style="left:406.00000000000006px;top:48.199999999999996px" width="4" height="2" viewBox="0 0 4 2"><path d="M0 0 L3.4 0 L1.7 2Z" fill="#8a8f98" stroke="none" stroke-width="0" /></svg>
<div style="left:337px;top:46.199999999999996px;width:5.6px;height:5.6px;background:#fff;border:0.8px solid #444"></div>
<div class="m" style="left:344.6px;top:46px;font-size:5.5px;line-height:7.15px;color:#6a6a6a;">ByLayer</div>
<div style="left:416px;top:43.8px;width:83.4px;height:10.6px;background:#fafafa;border:0.6px solid #c9cdd3;border-radius:1px"></div>
<svg class="i" style="left:493.2px;top:48.199999999999996px" width="4" height="2" viewBox="0 0 4 2"><path d="M0 0 L3.4 0 L1.7 2Z" fill="#8a8f98" stroke="none" stroke-width="0" /></svg>
<div style="left:418.4px;top:48.699999999999996px;width:30.6px;height:1px;background:#777"></div>
<div class="m" style="left:452px;top:46px;font-size:5.5px;line-height:7.15px;color:#6a6a6a;">ByLayer</div>
<div style="left:502.4px;top:43.8px;width:65.6px;height:10.6px;background:#fafafa;border:0.6px solid #c9cdd3;border-radius:1px"></div>
<svg class="i" style="left:561.8px;top:48.199999999999996px" width="4" height="2" viewBox="0 0 4 2"><path d="M0 0 L3.4 0 L1.7 2Z" fill="#8a8f98" stroke="none" stroke-width="0" /></svg>
<div style="left:505px;top:48.599999999999994px;width:18.6px;height:1.2px;background:#777"></div>
<div class="m" style="left:526px;top:46px;font-size:5.5px;line-height:7.15px;color:#6a6a6a;">ByLayer</div>
<div style="left:571.4px;top:43.8px;width:62.4px;height:10.6px;background:#fafafa;border:0.6px solid #c9cdd3;border-radius:1px"></div>
<div class="t" style="left:576.0px;top:47px;font-size:6.2px;line-height:8.06px;color:#6a6a6a;">随颜色</div>
<svg class="i" style="left:627.5999999999999px;top:48.199999999999996px" width="4" height="2" viewBox="0 0 4 2"><path d="M0 0 L3.4 0 L1.7 2Z" fill="#8a8f98" stroke="none" stroke-width="0" /></svg>
<div style="left:637px;top:42.8px;width:0.6px;height:12px;background:#d0d0d0"></div>
<div style="left:0px;top:56px;width:68px;height:472px;background:#f0f0f0"></div>
<div style="left:0px;top:56.4px;width:38.6px;height:471.6px;background:#f1f1f1"></div>
<div style="left:38.8px;top:56px;width:0.7px;height:472px;background:#8c8c8c"></div>
<div style="left:39.5px;top:56px;width:0.7px;height:472px;background:#fdfdfd"></div>
<div style="left:2.4px;top:59.4px;width:4.4px;height:4px;border:0.6px solid #555;background:#fff"></div>
<div style="left:3.2px;top:61.2px;width:2.6px;height:0.8px;background:#444"></div>
<div style="left:10px;top:60px;width:15px;height:2.6px;border:0.5px solid #b5b5b5;background:#f8f8f8"></div>
<div class="t" style="left:27.6px;top:59px;font-size:4.6px;line-height:5.98px;color:#333;font-weight:bold">✕</div>
<svg class="i" style="left:1.6px;top:68.39999999999999px" width="4" height="5" viewBox="0 0 4 5"><path d="M0.4 0 L3.2 2.4 L0.4 4.8Z" fill="#2b62b8" stroke="none" stroke-width="0" /></svg>
<div class="t" style="left:11.0px;top:68px;font-size:6.2px;line-height:8.06px;color:#000;letter-spacing:-0.1px;font-weight:500">设　　置</div>
<svg class="i" style="left:1.0px;top:78.6px" width="5" height="4" viewBox="0 0 5 4"><path d="M0 0.2 L4.6 0.2 L2.3 3Z" fill="#2b62b8" stroke="none" stroke-width="0" /></svg>
<div class="t" style="left:11.0px;top:77px;font-size:6.2px;line-height:8.06px;color:#000;letter-spacing:-0.1px;font-weight:500">轴网柱子</div>
<svg class="i" style="left:-1.0px;top:86.4px" width="10" height="10" viewBox="0 0 10 10"><path d="M0 3 L9 3 M0 6.4 L9 6.4" fill="none" stroke="#d8404a" stroke-width="1" /><path d="M3 0.4 L3 9 M6.4 0.4 L6.4 9" fill="none" stroke="#d8404a" stroke-width="1" /></svg>
<div class="t" style="left:11.0px;top:89px;font-size:6.2px;line-height:8.06px;color:#000;letter-spacing:-0.1px;font-weight:500">绘制轴网</div>
<svg class="i" style="left:-1.0px;top:95.8px" width="10" height="10" viewBox="0 0 10 10"><rect x="0" y="2.6" width="2.4" height="5" fill="#3a62b0" rx="0"/><path d="M2.4 5 L9 5" fill="none" stroke="#555" stroke-width="0.9" /><path d="M6 2 L6 8" fill="none" stroke="#d8404a" stroke-width="1" /></svg>
<div class="t" style="left:11.0px;top:98px;font-size:6.2px;line-height:8.06px;color:#000;letter-spacing:-0.1px;font-weight:500">墙生轴网</div>
<svg class="i" style="left:-1.0px;top:105.2px" width="10" height="10" viewBox="0 0 10 10"><path d="M0 3 L9 3 M0 6.6 L9 6.6" fill="none" stroke="#d8404a" stroke-width="1" /><path d="M4 0.4 L4 9" fill="none" stroke="#d8404a" stroke-width="1" /><path d="M6.4 0.8 L9 0.8" fill="none" stroke="#3f9c4a" stroke-width="1.2" /></svg>
<div class="t" style="left:11.0px;top:107px;font-size:6.2px;line-height:8.06px;color:#000;letter-spacing:-0.1px;font-weight:500">添加轴线</div>
<svg class="i" style="left:-1.0px;top:114.60000000000001px" width="10" height="10" viewBox="0 0 10 10"><path d="M0 2.6 L8 2.6 M2.4 0.4 L2.4 9" fill="none" stroke="#d8404a" stroke-width="1" /><path d="M1 8.6 L8.6 3" fill="none" stroke="#333" stroke-width="1" /><rect x="4.6" y="5.4" width="3.8" height="3.4" fill="#8aa0c8" rx="0"/></svg>
<div class="t" style="left:11.0px;top:117px;font-size:6.2px;line-height:8.06px;color:#000;letter-spacing:-0.1px;font-weight:500">轴线裁剪</div>
<svg class="i" style="left:-1.0px;top:124.00000000000001px" width="10" height="10" viewBox="0 0 10 10"><path d="M0 3 L9 3 M0 6.4 L9 6.4 M3 0.4 L3 9 M6.4 0.4 L6.4 9" fill="none" stroke="#e040c0" stroke-width="1" /></svg>
<div class="t" style="left:11.0px;top:126px;font-size:6.2px;line-height:8.06px;color:#000;letter-spacing:-0.1px;font-weight:500">轴网合并</div>
<svg class="i" style="left:-1.0px;top:133.39999999999998px" width="10" height="10" viewBox="0 0 10 10"><path d="M0 2.6 L9 2.6 M3 0.4 L3 9" fill="none" stroke="#d8404a" stroke-width="0.9" /><path d="M5 5 L9 5 M5 5 L5 9" fill="none" stroke="#888" stroke-width="0.9" /></svg>
<div class="t" style="left:11.0px;top:136px;font-size:6.2px;line-height:8.06px;color:#000;letter-spacing:-0.1px;font-weight:500">轴改线型</div>
<svg class="i" style="left:-1.0px;top:146.39999999999998px" width="10" height="10" viewBox="0 0 10 10"><path d="M0.6 2 L8.6 2" fill="none" stroke="#3a62b0" stroke-width="1" /><circle cx="1.6" cy="6" r="1.6" fill="#3a62b0"/><circle cx="7.6" cy="6" r="1.6" fill="#3a62b0"/><path d="M1.6 2 L1.6 5 M7.6 2 L7.6 5" fill="none" stroke="#3a62b0" stroke-width="0.8" /></svg>
<div class="t" style="left:11.0px;top:149px;font-size:6.2px;line-height:8.06px;color:#000;letter-spacing:-0.1px;font-weight:500">轴网标注</div>
<svg class="i" style="left:-1.0px;top:155.79999999999998px" width="10" height="10" viewBox="0 0 10 10"><path d="M0 4.6 L9 4.6" fill="none" stroke="#3a62b0" stroke-width="1" /><path d="M2 1.6 L7 1.6 M2 7.6 L7 7.6" fill="none" stroke="#d8404a" stroke-width="1" /></svg>
<div class="t" style="left:11.0px;top:158px;font-size:6.2px;line-height:8.06px;color:#000;letter-spacing:-0.1px;font-weight:500">单轴标注</div>
<svg class="i" style="left:-1.0px;top:165.2px" width="10" height="10" viewBox="0 0 10 10"><path d="M1 2 L9 2" fill="none" stroke="#d8404a" stroke-width="1" /><path d="M4.6 2 L4.6 6" fill="none" stroke="#3f9c4a" stroke-width="1" /><circle cx="4.6" cy="7.4" r="1.6" fill="#d8404a"/></svg>
<div class="t" style="left:11.0px;top:167px;font-size:6.2px;line-height:8.06px;color:#000;letter-spacing:-0.1px;font-weight:500">添补轴号</div>
<svg class="i" style="left:-1.0px;top:174.6px" width="10" height="10" viewBox="0 0 10 10"><path d="M0 2 L8 2" fill="none" stroke="#3a62b0" stroke-width="1" /><path d="M4 2 L4 6" fill="none" stroke="#3a62b0" stroke-width="0.9" /><circle cx="4" cy="7.4" r="1.6" fill="none" stroke="#d8404a" stroke-width="0.8"/></svg>
<div class="t" style="left:11.0px;top:177px;font-size:6.2px;line-height:8.06px;color:#000;letter-spacing:-0.1px;font-weight:500">删除轴号</div>
<svg class="i" style="left:-1.0px;top:184.0px" width="10" height="10" viewBox="0 0 10 10"><path d="M0 3 L9 3" fill="none" stroke="#3a62b0" stroke-width="1" /><circle cx="2" cy="6.2" r="1.8" fill="#3a62b0"/><circle cx="7" cy="6.2" r="1.8" fill="#3a62b0"/><path d="M3.8 6.2 L5.2 6.2" fill="none" stroke="#3a62b0" stroke-width="0.9" /></svg>
<div class="t" style="left:11.0px;top:186px;font-size:6.2px;line-height:8.06px;color:#000;letter-spacing:-0.1px;font-weight:500">一轴多号</div>
<svg class="i" style="left:-1.0px;top:193.39999999999998px" width="10" height="10" viewBox="0 0 10 10"><path d="M0 2 L9 2 M2 2 L2 5 M7 2 L7 5" fill="none" stroke="#3a62b0" stroke-width="0.9" /><circle cx="2" cy="6.8" r="1.6" fill="#8aa0c8" stroke="#3a62b0" stroke-width="0.5"/><circle cx="7" cy="6.8" r="1.6" fill="none" stroke="#9ab" stroke-width="0.6"/></svg>
<div class="t" style="left:11.0px;top:196px;font-size:6.2px;line-height:8.06px;color:#000;letter-spacing:-0.1px;font-weight:500">轴号隐现</div>
<svg class="i" style="left:-1.0px;top:202.79999999999998px" width="10" height="10" viewBox="0 0 10 10"><circle cx="2.6" cy="5" r="2.2" fill="none" stroke="#3a62b0" stroke-width="0.9"/><circle cx="7" cy="5" r="2.2" fill="none" stroke="#3a62b0" stroke-width="0.9"/><path d="M0.4 8.6 L9 8.6" fill="none" stroke="#3a62b0" stroke-width="0.8" /></svg>
<div class="t" style="left:11.0px;top:205px;font-size:6.2px;line-height:8.06px;color:#000;letter-spacing:-0.1px;font-weight:500">主附转换</div>
<svg class="i" style="left:-1.0px;top:215.6px" width="10" height="10" viewBox="0 0 10 10"><path d="M0 5 L9.6 5" fill="none" stroke="#d8404a" stroke-width="0.8" /><rect x="2" y="2.8" width="5.6" height="4.4" fill="#2b62b8" rx="0"/></svg>
<div class="t" style="left:11.0px;top:218px;font-size:6.2px;line-height:8.06px;color:#000;letter-spacing:-0.1px;font-weight:500">标<span style="margin:0 2.9px">准</span>柱</div>
<svg class="i" style="left:-1.0px;top:225.0px" width="10" height="10" viewBox="0 0 10 10"><path d="M0.4 1.6 L9.4 1.6 L9.4 3.8 L3 3.8 L3 9 L0.4 9Z" fill="#2b62b8" stroke="none" stroke-width="0" /><path d="M0 5.6 L9 5.6" fill="none" stroke="#9ab" stroke-width="0.6" /></svg>
<div class="t" style="left:11.0px;top:227px;font-size:6.2px;line-height:8.06px;color:#000;letter-spacing:-0.1px;font-weight:500">角　　柱</div>
<svg class="i" style="left:-1.0px;top:234.39999999999998px" width="10" height="10" viewBox="0 0 10 10"><path d="M0 2.4 L9.6 2.4 M4.6 2.4 L4.6 9.4" fill="none" stroke="#2b62b8" stroke-width="1.8" /><path d="M0 6.6 L9.6 6.6" fill="none" stroke="#d8707a" stroke-width="0.7" /></svg>
<div class="t" style="left:11.0px;top:237px;font-size:6.2px;line-height:8.06px;color:#000;letter-spacing:-0.1px;font-weight:500">构<span style="margin:0 2.9px">造</span>柱</div>
<svg class="i" style="left:-1.0px;top:243.79999999999998px" width="10" height="10" viewBox="0 0 10 10"><rect x="0.4" y="5.6" width="2" height="3.4" fill="#2b62b8" rx="0"/><rect x="3.2" y="3.6" width="2" height="5.4" fill="#d8404a" rx="0"/><rect x="6" y="5.6" width="2" height="3.4" fill="#2b62b8" rx="0"/><path d="M0 9 L9.4 9" fill="none" stroke="#2b62b8" stroke-width="0.9" /></svg>
<div class="t" style="left:11.0px;top:246px;font-size:6.2px;line-height:8.06px;color:#000;letter-spacing:-0.1px;font-weight:500">柱齐墙边</div>
<svg class="i" style="left:1.6px;top:258.1px" width="4" height="5" viewBox="0 0 4 5"><path d="M0.4 0 L3.2 2.4 L0.4 4.8Z" fill="#2b62b8" stroke="none" stroke-width="0" /></svg>
<div class="t" style="left:11.0px;top:258px;font-size:6.2px;line-height:8.06px;color:#000;letter-spacing:-0.1px;font-weight:500">墙　　体</div>
<svg class="i" style="left:1.6px;top:267.5px" width="4" height="5" viewBox="0 0 4 5"><path d="M0.4 0 L3.2 2.4 L0.4 4.8Z" fill="#2b62b8" stroke="none" stroke-width="0" /></svg>
<div class="t" style="left:11.0px;top:267px;font-size:6.2px;line-height:8.06px;color:#000;letter-spacing:-0.1px;font-weight:500">门　　窗</div>
<svg class="i" style="left:1.6px;top:276.90000000000003px" width="4" height="5" viewBox="0 0 4 5"><path d="M0.4 0 L3.2 2.4 L0.4 4.8Z" fill="#2b62b8" stroke="none" stroke-width="0" /></svg>
<div class="t" style="left:11.0px;top:277px;font-size:6.2px;line-height:8.06px;color:#000;letter-spacing:-0.1px;font-weight:500">房间屋顶</div>
<svg class="i" style="left:1.6px;top:286.3px" width="4" height="5" viewBox="0 0 4 5"><path d="M0.4 0 L3.2 2.4 L0.4 4.8Z" fill="#2b62b8" stroke="none" stroke-width="0" /></svg>
<div class="t" style="left:11.0px;top:286px;font-size:6.2px;line-height:8.06px;color:#000;letter-spacing:-0.1px;font-weight:500">楼梯其他</div>
<svg class="i" style="left:1.6px;top:295.70000000000005px" width="4" height="5" viewBox="0 0 4 5"><path d="M0.4 0 L3.2 2.4 L0.4 4.8Z" fill="#2b62b8" stroke="none" stroke-width="0" /></svg>
<div class="t" style="left:11.0px;top:296px;font-size:6.2px;line-height:8.06px;color:#000;letter-spacing:-0.1px;font-weight:500">立　　面</div>
<svg class="i" style="left:1.6px;top:305.1px" width="4" height="5" viewBox="0 0 4 5"><path d="M0.4 0 L3.2 2.4 L0.4 4.8Z" fill="#2b62b8" stroke="none" stroke-width="0" /></svg>
<div class="t" style="left:11.0px;top:305px;font-size:6.2px;line-height:8.06px;color:#000;letter-spacing:-0.1px;font-weight:500">剖　　面</div>
<svg class="i" style="left:1.6px;top:314.5px" width="4" height="5" viewBox="0 0 4 5"><path d="M0.4 0 L3.2 2.4 L0.4 4.8Z" fill="#2b62b8" stroke="none" stroke-width="0" /></svg>
<div class="t" style="left:11.0px;top:314px;font-size:6.2px;line-height:8.06px;color:#000;letter-spacing:-0.1px;font-weight:500">文字表格</div>
<svg class="i" style="left:1.6px;top:323.90000000000003px" width="4" height="5" viewBox="0 0 4 5"><path d="M0.4 0 L3.2 2.4 L0.4 4.8Z" fill="#2b62b8" stroke="none" stroke-width="0" /></svg>
<div class="t" style="left:11.0px;top:324px;font-size:6.2px;line-height:8.06px;color:#000;letter-spacing:-0.1px;font-weight:500">尺寸标注</div>
<svg class="i" style="left:1.6px;top:333.3px" width="4" height="5" viewBox="0 0 4 5"><path d="M0.4 0 L3.2 2.4 L0.4 4.8Z" fill="#2b62b8" stroke="none" stroke-width="0" /></svg>
<div class="t" style="left:11.0px;top:333px;font-size:6.2px;line-height:8.06px;color:#000;letter-spacing:-0.1px;font-weight:500">符号标注</div>
<svg class="i" style="left:1.6px;top:342.70000000000005px" width="4" height="5" viewBox="0 0 4 5"><path d="M0.4 0 L3.2 2.4 L0.4 4.8Z" fill="#2b62b8" stroke="none" stroke-width="0" /></svg>
<div class="t" style="left:11.0px;top:343px;font-size:6.2px;line-height:8.06px;color:#000;letter-spacing:-0.1px;font-weight:500">图层控制</div>
<svg class="i" style="left:1.6px;top:352.1px" width="4" height="5" viewBox="0 0 4 5"><path d="M0.4 0 L3.2 2.4 L0.4 4.8Z" fill="#2b62b8" stroke="none" stroke-width="0" /></svg>
<div class="t" style="left:11.0px;top:352px;font-size:6.2px;line-height:8.06px;color:#000;letter-spacing:-0.1px;font-weight:500">工　　具</div>
<svg class="i" style="left:1.6px;top:361.5px" width="4" height="5" viewBox="0 0 4 5"><path d="M0.4 0 L3.2 2.4 L0.4 4.8Z" fill="#2b62b8" stroke="none" stroke-width="0" /></svg>
<div class="t" style="left:11.0px;top:361px;font-size:6.2px;line-height:8.06px;color:#000;letter-spacing:-0.1px;font-weight:500">三维建模</div>
<svg class="i" style="left:1.6px;top:370.90000000000003px" width="4" height="5" viewBox="0 0 4 5"><path d="M0.4 0 L3.2 2.4 L0.4 4.8Z" fill="#2b62b8" stroke="none" stroke-width="0" /></svg>
<div class="t" style="left:11.0px;top:371px;font-size:6.2px;line-height:8.06px;color:#000;letter-spacing:-0.1px;font-weight:500">图块图案</div>
<svg class="i" style="left:1.6px;top:380.3px" width="4" height="5" viewBox="0 0 4 5"><path d="M0.4 0 L3.2 2.4 L0.4 4.8Z" fill="#2b62b8" stroke="none" stroke-width="0" /></svg>
<div class="t" style="left:11.0px;top:380px;font-size:6.2px;line-height:8.06px;color:#000;letter-spacing:-0.1px;font-weight:500">文件布图</div>
<svg class="i" style="left:1.6px;top:389.70000000000005px" width="4" height="5" viewBox="0 0 4 5"><path d="M0.4 0 L3.2 2.4 L0.4 4.8Z" fill="#2b62b8" stroke="none" stroke-width="0" /></svg>
<div class="t" style="left:11.0px;top:390px;font-size:6.2px;line-height:8.06px;color:#000;letter-spacing:-0.1px;font-weight:500">其　　它</div>
<svg class="i" style="left:1.6px;top:399.1px" width="4" height="5" viewBox="0 0 4 5"><path d="M0.4 0 L3.2 2.4 L0.4 4.8Z" fill="#2b62b8" stroke="none" stroke-width="0" /></svg>
<div class="t" style="left:11.0px;top:399px;font-size:6.2px;line-height:8.06px;color:#000;letter-spacing:-0.1px;font-weight:500">帮助演示</div>
<div style="left:0px;top:85px;width:38.6px;height:0.6px;background:#d9d9d9"></div>
<div style="left:0px;top:85.6px;width:38.6px;height:0.5px;background:#fff"></div>
<div style="left:0px;top:144.4px;width:38.6px;height:0.6px;background:#d9d9d9"></div>
<div style="left:0px;top:145.0px;width:38.6px;height:0.5px;background:#fff"></div>
<div style="left:0px;top:214.4px;width:38.6px;height:0.6px;background:#d9d9d9"></div>
<div style="left:0px;top:215.0px;width:38.6px;height:0.5px;background:#fff"></div>
<div style="left:0px;top:254.6px;width:38.6px;height:0.6px;background:#d9d9d9"></div>
<div style="left:0px;top:255.2px;width:38.6px;height:0.5px;background:#fff"></div>
<div style="left:42.6px;top:57.6px;width:9px;height:0.6px;background:#c8c8c8"></div>
<div style="left:42.6px;top:59.2px;width:9px;height:0.6px;background:#c8c8c8"></div>
<div style="left:56.6px;top:57.6px;width:9px;height:0.6px;background:#c8c8c8"></div>
<div style="left:56.6px;top:59.2px;width:9px;height:0.6px;background:#c8c8c8"></div>
<div style="left:53.6px;top:56px;width:0.6px;height:232px;background:#e0e0e0"></div>
<div style="left:67px;top:56px;width:1px;height:472px;background:#fafafa"></div>
<svg class="i" style="left:41.6px;top:62.900000000000006px" width="10" height="10" viewBox="0 0 10 10"><g transform="translate(0.7,0.7) scale(0.86)"><path d="M1 9 L9 1" fill="none" stroke="#1f4a94" stroke-width="1.1" /></g></svg>
<svg class="i" style="left:41.6px;top:73.4px" width="10" height="10" viewBox="0 0 10 10"><g transform="translate(0.7,0.7) scale(0.86)"><path d="M1 9 L9 1" fill="none" stroke="#1f4a94" stroke-width="1.1" /><circle cx="1.4" cy="8.6" r="0.8" fill="#1f4a94"/><circle cx="8.6" cy="1.4" r="0.8" fill="#1f4a94"/></g></svg>
<svg class="i" style="left:41.6px;top:84.4px" width="10" height="10" viewBox="0 0 10 10"><g transform="translate(0.7,0.7) scale(0.86)"><path d="M1 8 L8 8 Q9.4 5 6.4 4.4" fill="none" stroke="#2b62b8" stroke-width="1.1" /><path d="M5 3 L7 4.6 L5 6" fill="none" stroke="#2b62b8" stroke-width="0.8" /></g></svg>
<svg class="i" style="left:41.6px;top:95.6px" width="10" height="10" viewBox="0 0 10 10"><g transform="translate(0.7,0.7) scale(0.86)"><path d="M5 1 L9 4 L7.6 8.8 L2.4 8.8 L1 4Z" fill="none" stroke="#1f4a94" stroke-width="1" /></g></svg>
<svg class="i" style="left:41.6px;top:107.8px" width="10" height="10" viewBox="0 0 10 10"><g transform="translate(0.7,0.7) scale(0.86)"><rect x="1" y="2.4" width="8" height="5.6" fill="none" rx="0" stroke="#1f4a94" stroke-width="1.1"/></g></svg>
<svg class="i" style="left:41.6px;top:119.4px" width="10" height="10" viewBox="0 0 10 10"><g transform="translate(0.7,0.7) scale(0.86)"><path d="M1.6 9 Q1.4 2.6 8.4 1.6" fill="none" stroke="#1f4a94" stroke-width="1.2" /></g></svg>
<svg class="i" style="left:41.6px;top:130.9px" width="10" height="10" viewBox="0 0 10 10"><g transform="translate(0.7,0.7) scale(0.86)"><circle cx="5" cy="5" r="3.8" fill="none" stroke="#1f4a94" stroke-width="1.2"/><circle cx="5" cy="5" r="0.9" fill="#1f4a94"/></g></svg>
<svg class="i" style="left:41.6px;top:142.4px" width="10" height="10" viewBox="0 0 10 10"><g transform="translate(0.7,0.7) scale(0.86)"><path d="M2 7 Q0 5 2 3.6 Q2 1 4.6 1.8 Q6.6 0.2 7.6 2.6 Q9.8 3.4 8.6 5.6 Q9.6 8 7 8 Q5.4 9.6 4 8 Q2.4 8.6 2 7Z" fill="none" stroke="#1f4a94" stroke-width="0.9" /></g></svg>
<svg class="i" style="left:41.6px;top:154.3px" width="10" height="10" viewBox="0 0 10 10"><g transform="translate(0.7,0.7) scale(0.86)"><path d="M1 7 Q3 1 5 5 Q7 9 9 3" fill="none" stroke="#1f4a94" stroke-width="1" /></g></svg>
<svg class="i" style="left:41.6px;top:165.6px" width="10" height="10" viewBox="0 0 10 10"><g transform="translate(0.7,0.7) scale(0.86)"><ellipse cx="5" cy="5" rx="4" ry="2.6" fill="none" stroke="#1f4a94" stroke-width="1.2"/></g></svg>
<svg class="i" style="left:41.6px;top:177.4px" width="10" height="10" viewBox="0 0 10 10"><g transform="translate(0.7,0.7) scale(0.86)"><path d="M8.6 6 Q8 2 4.6 2.6 Q1.4 3.4 2 6.4" fill="none" stroke="#1f4a94" stroke-width="1.1" /><path d="M1 5 L2.2 7 L3.8 5.4" fill="none" stroke="#1f4a94" stroke-width="0.7" /></g></svg>
<svg class="i" style="left:41.6px;top:189.4px" width="10" height="10" viewBox="0 0 10 10"><g transform="translate(0.7,0.7) scale(0.86)"><rect x="1" y="1.6" width="6" height="4.6" fill="#dfe8f8" rx="0" stroke="#1f4a94" stroke-width="0.8"/><rect x="4" y="4.6" width="5" height="4" fill="#9fd48a" rx="0" stroke="#3a7a3a" stroke-width="0.6"/><path d="M6 0.6 L9.4 0.6 M7.7 -0.8 L7.7 2.2" fill="none" stroke="#c8a020" stroke-width="0.8" /></g></svg>
<svg class="i" style="left:41.6px;top:200.2px" width="10" height="10" viewBox="0 0 10 10"><g transform="translate(0.7,0.7) scale(0.86)"><rect x="1" y="2" width="5" height="3.6" fill="#dfe8f8" rx="0" stroke="#1f4a94" stroke-width="0.8"/><rect x="4.4" y="5" width="4.4" height="3.6" fill="#9fd48a" rx="0" stroke="#3a7a3a" stroke-width="0.6"/></g></svg>
<svg class="i" style="left:41.6px;top:212px" width="10" height="10" viewBox="0 0 10 10"><g transform="translate(0.7,0.7) scale(0.86)"><circle cx="5" cy="5" r="0.8" fill="#1f4a94"/></g></svg>
<svg class="i" style="left:41.6px;top:223.8px" width="10" height="10" viewBox="0 0 10 10"><g transform="translate(0.7,0.7) scale(0.86)"><path d="M1 2.6 L9 2.6 M1 7.4 L9 7.4 M3 0.6 L3 9.4 M7 0.6 L7 9.4" fill="none" stroke="#1f4a94" stroke-width="1" /><path d="M3 2.6 L7 7.4 M5 2.6 L7 5 M3 5 L5 7.4" fill="none" stroke="#1f4a94" stroke-width="0.5" /></g></svg>
<svg class="i" style="left:41.6px;top:235px" width="10" height="10" viewBox="0 0 10 10"><g transform="translate(0.7,0.7) scale(0.86)"><path d="M1 2.6 L9 2.6 M1 7.4 L9 7.4 M3 0.6 L3 9.4 M7 0.6 L7 9.4" fill="none" stroke="#1d3f86" stroke-width="1.1" /><rect x="3" y="2.6" width="4" height="4.8" fill="#3a62b0" rx="0"/></g></svg>
<svg class="i" style="left:41.6px;top:246.6px" width="10" height="10" viewBox="0 0 10 10"><g transform="translate(0.7,0.7) scale(0.86)"><rect x="1" y="1.6" width="8" height="7" fill="#dfe8f8" rx="0" stroke="#1f4a94" stroke-width="0.8"/><circle cx="5.6" cy="5.4" r="2" fill="#8fb2e0" stroke="#3b5f9c" stroke-width="0.6"/></g></svg>
<svg class="i" style="left:41.6px;top:258px" width="10" height="10" viewBox="0 0 10 10"><g transform="translate(0.7,0.7) scale(0.86)"><rect x="1" y="1.4" width="8" height="7.6" fill="#7ea3dc" rx="0" stroke="#2b62b8" stroke-width="0.7"/><rect x="1.8" y="2.2" width="6.4" height="2.4" fill="#b9d0f0" rx="0"/></g></svg>
<svg class="i" style="left:41.6px;top:270.2px" width="10" height="10" viewBox="0 0 10 10"><g transform="translate(0.7,0.7) scale(0.86)"><text x="5" y="9" font-size="10.4" text-anchor="middle" fill="#111" font-family="Liberation Sans,sans-serif">A</text></g></svg>
<svg class="i" style="left:54.8px;top:63px" width="10" height="10" viewBox="0 0 10 10"><g transform="translate(0.7,0.7) scale(0.86)"><path d="M0.6 1.8 L9.4 1.8" fill="none" stroke="#222" stroke-width="1.3" /><path d="M2 0.6 L2 9.4 M8 0.6 L8 9.4" fill="none" stroke="#222" stroke-width="1.1" /></g></svg>
<svg class="i" style="left:54.8px;top:74px" width="10" height="10" viewBox="0 0 10 10"><g transform="translate(0.7,0.7) scale(0.86)"><path d="M1.6 1.6 L8.4 8.4" fill="none" stroke="#222" stroke-width="1.3" /><path d="M0.6 3 L3 0.6 M7 9.4 L9.4 7" fill="none" stroke="#222" stroke-width="1" /></g></svg>
<svg class="i" style="left:54.8px;top:85px" width="10" height="10" viewBox="0 0 10 10"><g transform="translate(0.7,0.7) scale(0.86)"><path d="M1.6 9 Q1.6 2 9 1.6" fill="none" stroke="#1f4a94" stroke-width="1" /><path d="M4 9 Q4.4 4.6 9 4.4" fill="none" stroke="#444" stroke-width="1" /><path d="M7 0.4 L9.4 1.6 L7.4 3" fill="none" stroke="#222" stroke-width="0.7" /></g></svg>
<svg class="i" style="left:54.8px;top:96.6px" width="10" height="10" viewBox="0 0 10 10"><g transform="translate(0.7,0.7) scale(0.86)"><path d="M1 3 L4 3 M6 3 L9 3 M1 8.6 L9 8.6 M2.4 3 L2.4 8.6 M7.6 3 L7.6 8.6" fill="none" stroke="#222" stroke-width="1" /><path d="M4 0.6 L6 3 L4 5" fill="none" stroke="#222" stroke-width="0.7" /></g></svg>
<svg class="i" style="left:54.8px;top:110.6px" width="10" height="10" viewBox="0 0 10 10"><g transform="translate(0.7,0.7) scale(0.86)"><circle cx="5" cy="5" r="3.8" fill="none" stroke="#222" stroke-width="1"/><path d="M5 5 L8 2.4" fill="none" stroke="#222" stroke-width="0.9" /></g></svg>
<svg class="i" style="left:54.8px;top:122px" width="10" height="10" viewBox="0 0 10 10"><g transform="translate(0.7,0.7) scale(0.86)"><circle cx="5" cy="5" r="3.6" fill="none" stroke="#555" stroke-width="0.9"/><path d="M2 8.6 L8.4 1.4" fill="none" stroke="#222" stroke-width="1.2" /><path d="M6.4 1 L8.8 1 L8.8 3.4" fill="none" stroke="#222" stroke-width="0.7" /></g></svg>
<svg class="i" style="left:54.8px;top:133.6px" width="10" height="10" viewBox="0 0 10 10"><g transform="translate(0.7,0.7) scale(0.86)"><circle cx="5" cy="5" r="3.8" fill="none" stroke="#222" stroke-width="1"/><path d="M2.4 2.4 L7.6 7.6" fill="none" stroke="#222" stroke-width="1.4" /></g></svg>
<svg class="i" style="left:54.8px;top:145px" width="10" height="10" viewBox="0 0 10 10"><g transform="translate(0.7,0.7) scale(0.86)"><path d="M1 8.6 L9 8.6 L5 2" fill="none" stroke="#222" stroke-width="1" /><path d="M6.6 8.6 Q6.6 6.4 5.4 5.2" fill="none" stroke="#222" stroke-width="0.7" /></g></svg>
<svg class="i" style="left:54.8px;top:156.8px" width="10" height="10" viewBox="0 0 10 10"><g transform="translate(0.7,0.7) scale(0.86)"><path d="M1 1 L1 9 L9 9" fill="none" stroke="#222" stroke-width="1" /><path d="M1 9 L9 2" fill="none" stroke="#222" stroke-width="1" /><rect x="2.6" y="3" width="4" height="3.4" fill="#d6c62e" rx="0"/></g></svg>
<svg class="i" style="left:54.8px;top:168.4px" width="10" height="10" viewBox="0 0 10 10"><g transform="translate(0.7,0.7) scale(0.86)"><path d="M1 2 L9 2 M1 8.6 L9 8.6 M2.4 2 L2.4 8.6 M7.6 2 L7.6 8.6" fill="none" stroke="#222" stroke-width="1" /><path d="M2.4 5.2 L7.6 5.2" fill="none" stroke="#222" stroke-width="0.6" /></g></svg>
<svg class="i" style="left:54.8px;top:180px" width="10" height="10" viewBox="0 0 10 10"><g transform="translate(0.7,0.7) scale(0.86)"><path d="M1 1.6 L9 1.6 M1 5 L9 5 M1 8.6 L9 8.6 M2.4 1.6 L2.4 8.6 M7.6 1.6 L7.6 8.6" fill="none" stroke="#222" stroke-width="0.9" /></g></svg>
<svg class="i" style="left:54.8px;top:198.6px" width="10" height="10" viewBox="0 0 10 10"><g transform="translate(0.7,0.7) scale(0.86)"><path d="M2 2 L8 7" fill="none" stroke="#222" stroke-width="1.1" /><path d="M3 0.8 L6.6 3 L4 5Z" fill="#d6c62e" stroke="none" stroke-width="0" /><path d="M6.6 6 L9 8.6" fill="none" stroke="#222" stroke-width="0.9" /></g></svg>
<svg class="i" style="left:54.8px;top:210.8px" width="10" height="10" viewBox="0 0 10 10"><g transform="translate(0.7,0.7) scale(0.86)"><rect x="0.8" y="1.6" width="8.4" height="7" fill="#cfe0f6" rx="0" stroke="#2b62b8" stroke-width="0.7"/><path d="M0.8 4 L9.2 4 M0.8 6.4 L9.2 6.4 M3.6 1.6 L3.6 8.6 M6.4 1.6 L6.4 8.6" fill="none" stroke="#2b62b8" stroke-width="0.5" /></g></svg>
<svg class="i" style="left:54.8px;top:222.4px" width="10" height="10" viewBox="0 0 10 10"><g transform="translate(0.7,0.7) scale(0.86)"><circle cx="5" cy="5" r="3.8" fill="none" stroke="#222" stroke-width="0.9"/><circle cx="5" cy="5" r="1.3" fill="#222"/></g></svg>
<svg class="i" style="left:54.8px;top:236.6px" width="10" height="10" viewBox="0 0 10 10"><g transform="translate(0.7,0.7) scale(0.86)"><path d="M1 8.8 L9 8.8 M1.6 7.6 L1.6 9.6 M8.4 7.6 L8.4 9.6" fill="none" stroke="#222" stroke-width="1" /><text x="5" y="6.4" font-size="7" font-weight="bold" text-anchor="middle" fill="#1f4a94" font-family="Liberation Sans,sans-serif">A</text></g></svg>
<svg class="i" style="left:54.8px;top:249px" width="10" height="10" viewBox="0 0 10 10"><g transform="translate(0.7,0.7) scale(0.86)"><path d="M1 8.8 L9 8.8" fill="none" stroke="#222" stroke-width="1.2" /><path d="M2 8 L8 1.6" fill="none" stroke="#d6a62e" stroke-width="1.5" /><path d="M2 8 L3.6 6.4" fill="none" stroke="#222" stroke-width="1.5" /></g></svg>
<svg class="i" style="left:54.8px;top:260.6px" width="10" height="10" viewBox="0 0 10 10"><g transform="translate(0.7,0.7) scale(0.86)"><path d="M1 2.4 L9 2.4 M1 8.6 L9 8.6 M2.6 2.4 L2.6 8.6 M7.4 2.4 L7.4 8.6" fill="none" stroke="#222" stroke-width="1" /><rect x="2.6" y="3.2" width="4.8" height="2.4" fill="#7ea3dc" rx="0"/></g></svg>
<svg class="i" style="left:54.8px;top:274px" width="10" height="10" viewBox="0 0 10 10"><g transform="translate(0.7,0.7) scale(0.86)"><path d="M1 9 L9 9" fill="none" stroke="#222" stroke-width="1.2" /><path d="M1.6 8.4 L8.6 2" fill="none" stroke="#222" stroke-width="1.3" /><path d="M6 1.6 L9 4.6" fill="none" stroke="#d6a62e" stroke-width="1.2" /></g></svg>
<div style="left:56px;top:108.4px;width:10px;height:0.6px;background:#cfcfcf"></div>
<div style="left:56px;top:196.4px;width:10px;height:0.6px;background:#cfcfcf"></div>
<div style="left:56px;top:234.4px;width:10px;height:0.6px;background:#cfcfcf"></div>
<div style="left:41px;top:282px;width:12.6px;height:0.6px;background:#d4d4d4"></div>
<div style="left:55px;top:287px;width:12px;height:0.6px;background:#d4d4d4"></div>
<div style="left:68px;top:56px;width:872.4px;height:432px;background:#000"></div>
<svg style="left:0;top:0" width="1000" height="545" viewBox="0 0 1000 545"><circle cx="396.9" cy="113.2" r="5.7" fill="none" stroke="#2aa82a" stroke-width="0.9"/><line x1="396.9" y1="119" x2="396.9" y2="140" stroke="#2aa82a" stroke-width="0.8"/><text x="396.9" y="116.6" font-size="9.4" text-anchor="middle" fill="#f2f2f2" font-family="Liberation Serif,serif">H</text><circle cx="396.9" cy="415.6" r="5.7" fill="none" stroke="#2aa82a" stroke-width="0.9"/><line x1="396.9" y1="405" x2="396.9" y2="410" stroke="#2aa82a" stroke-width="0.8"/><text x="396.9" y="419" font-size="9.4" text-anchor="middle" fill="#f2f2f2" font-family="Liberation Serif,serif">H</text><circle cx="410.3" cy="113.2" r="5.7" fill="none" stroke="#2aa82a" stroke-width="0.9"/><line x1="410.3" y1="119" x2="410.3" y2="140" stroke="#2aa82a" stroke-width="0.8"/><text x="410.3" y="116.6" font-size="9.4" text-anchor="middle" fill="#f2f2f2" font-family="Liberation Serif,serif">G</text><circle cx="410.3" cy="415.6" r="5.7" fill="none" stroke="#2aa82a" stroke-width="0.9"/><line x1="410.3" y1="405" x2="410.3" y2="410" stroke="#2aa82a" stroke-width="0.8"/><text x="410.3" y="419" font-size="9.4" text-anchor="middle" fill="#f2f2f2" font-family="Liberation Serif,serif">G</text><circle cx="419.1" cy="113.2" r="5.7" fill="none" stroke="#2aa82a" stroke-width="0.9"/><line x1="419.1" y1="119" x2="419.1" y2="140" stroke="#2aa82a" stroke-width="0.8"/><text x="419.1" y="116.6" font-size="9.4" text-anchor="middle" fill="#f2f2f2" font-family="Liberation Serif,serif">F</text><circle cx="419.1" cy="415.6" r="5.7" fill="none" stroke="#2aa82a" stroke-width="0.9"/><line x1="419.1" y1="405" x2="419.1" y2="410" stroke="#2aa82a" stroke-width="0.8"/><text x="419.1" y="419" font-size="9.4" text-anchor="middle" fill="#f2f2f2" font-family="Liberation Serif,serif">F</text><circle cx="454.7" cy="113.2" r="5.7" fill="none" stroke="#2aa82a" stroke-width="0.9"/><line x1="454.7" y1="119" x2="454.7" y2="140" stroke="#2aa82a" stroke-width="0.8"/><text x="454.7" y="116.6" font-size="9.4" text-anchor="middle" fill="#f2f2f2" font-family="Liberation Serif,serif">E</text><circle cx="454.7" cy="415.6" r="5.7" fill="none" stroke="#2aa82a" stroke-width="0.9"/><line x1="454.7" y1="405" x2="454.7" y2="410" stroke="#2aa82a" stroke-width="0.8"/><text x="454.7" y="419" font-size="9.4" text-anchor="middle" fill="#f2f2f2" font-family="Liberation Serif,serif">E</text><circle cx="485.8" cy="113.2" r="5.7" fill="none" stroke="#2aa82a" stroke-width="0.9"/><line x1="485.8" y1="119" x2="485.8" y2="140" stroke="#2aa82a" stroke-width="0.8"/><text x="485.8" y="116.6" font-size="9.4" text-anchor="middle" fill="#f2f2f2" font-family="Liberation Serif,serif">D</text><circle cx="485.8" cy="415.6" r="5.7" fill="none" stroke="#2aa82a" stroke-width="0.9"/><line x1="485.8" y1="405" x2="485.8" y2="410" stroke="#2aa82a" stroke-width="0.8"/><text x="485.8" y="419" font-size="9.4" text-anchor="middle" fill="#f2f2f2" font-family="Liberation Serif,serif">D</text><circle cx="516.9" cy="113.2" r="5.7" fill="none" stroke="#2aa82a" stroke-width="0.9"/><line x1="516.9" y1="119" x2="516.9" y2="140" stroke="#2aa82a" stroke-width="0.8"/><text x="516.9" y="116.6" font-size="9.4" text-anchor="middle" fill="#f2f2f2" font-family="Liberation Serif,serif">C</text><circle cx="516.9" cy="415.6" r="5.7" fill="none" stroke="#2aa82a" stroke-width="0.9"/><line x1="516.9" y1="405" x2="516.9" y2="410" stroke="#2aa82a" stroke-width="0.8"/><text x="516.9" y="419" font-size="9.4" text-anchor="middle" fill="#f2f2f2" font-family="Liberation Serif,serif">C</text><circle cx="588.1" cy="113.2" r="5.7" fill="none" stroke="#2aa82a" stroke-width="0.9"/><line x1="588.1" y1="119" x2="588.1" y2="140" stroke="#2aa82a" stroke-width="0.8"/><text x="588.1" y="116.6" font-size="9.4" text-anchor="middle" fill="#f2f2f2" font-family="Liberation Serif,serif">B</text><circle cx="588.1" cy="415.6" r="5.7" fill="none" stroke="#2aa82a" stroke-width="0.9"/><line x1="588.1" y1="405" x2="588.1" y2="410" stroke="#2aa82a" stroke-width="0.8"/><text x="588.1" y="419" font-size="9.4" text-anchor="middle" fill="#f2f2f2" font-family="Liberation Serif,serif">B</text><circle cx="614.8" cy="113.2" r="5.7" fill="none" stroke="#2aa82a" stroke-width="0.9"/><line x1="614.8" y1="119" x2="614.8" y2="140" stroke="#2aa82a" stroke-width="0.8"/><text x="614.8" y="116.6" font-size="9.4" text-anchor="middle" fill="#f2f2f2" font-family="Liberation Serif,serif">A</text><circle cx="614.8" cy="415.6" r="5.7" fill="none" stroke="#2aa82a" stroke-width="0.9"/><line x1="614.8" y1="405" x2="614.8" y2="410" stroke="#2aa82a" stroke-width="0.8"/><text x="614.8" y="419" font-size="9.4" text-anchor="middle" fill="#f2f2f2" font-family="Liberation Serif,serif">A</text><line x1="396.9" y1="128.8" x2="614.8" y2="128.8" stroke="#2aa82a" stroke-width="0.9"/><circle cx="396.9" cy="128.8" r="0.9" fill="#2aa82a"/><circle cx="614.8" cy="128.8" r="0.9" fill="#2aa82a"/><text x="505.6" y="127.5" font-size="6" text-anchor="middle" fill="#ececec" font-family="Liberation Sans,sans-serif">14700</text><text x="403.6" y="138.9" font-size="6" text-anchor="middle" fill="#e4e4e4" font-family="Liberation Sans,sans-serif">900</text><text x="414.7" y="138.9" font-size="6" text-anchor="middle" fill="#e4e4e4" font-family="Liberation Sans,sans-serif">600</text><text x="436.9" y="138.9" font-size="6" text-anchor="middle" fill="#e4e4e4" font-family="Liberation Sans,sans-serif">2400</text><text x="470.2" y="138.9" font-size="6" text-anchor="middle" fill="#e4e4e4" font-family="Liberation Sans,sans-serif">2100</text><text x="501.3" y="138.9" font-size="6" text-anchor="middle" fill="#e4e4e4" font-family="Liberation Sans,sans-serif">2100</text><text x="552.5" y="138.9" font-size="6" text-anchor="middle" fill="#e4e4e4" font-family="Liberation Sans,sans-serif">4800</text><text x="601.4" y="138.9" font-size="6" text-anchor="middle" fill="#e4e4e4" font-family="Liberation Sans,sans-serif">1800</text><line x1="899.1" y1="211.3" x2="940.4" y2="211.3" stroke="#b4b4b4" stroke-width="0.9"/><line x1="899.1" y1="211.3" x2="899.1" y2="460" stroke="#b4b4b4" stroke-width="0.9"/><line x1="899.1" y1="460" x2="940.4" y2="460" stroke="#b4b4b4" stroke-width="0.9"/><line x1="902.3" y1="215" x2="915.2" y2="215" stroke="#b4b4b4" stroke-width="0.9"/><line x1="902.3" y1="215" x2="902.3" y2="227.9" stroke="#b4b4b4" stroke-width="0.9"/><line x1="907.2" y1="219.5" x2="940.4" y2="219.5" stroke="#b4b4b4" stroke-width="0.9"/><line x1="907.2" y1="219.5" x2="907.2" y2="451.6" stroke="#b4b4b4" stroke-width="0.9"/><line x1="907.2" y1="451.6" x2="940.4" y2="451.6" stroke="#b4b4b4" stroke-width="0.9"/><line x1="899.1" y1="335.7" x2="907.2" y2="335.7" stroke="#b4b4b4" stroke-width="0.9"/><line x1="902.3" y1="442.8" x2="902.3" y2="457" stroke="#b4b4b4" stroke-width="0.9"/><line x1="902.3" y1="457" x2="915.2" y2="457" stroke="#b4b4b4" stroke-width="0.9"/><line x1="939.6" y1="465" x2="939.6" y2="486" stroke="#d8d8d8" stroke-width="1.2"/><line x1="81" y1="432" x2="81" y2="469.4" stroke="#b8b8b8" stroke-width="0.8"/><line x1="85.8" y1="473.8" x2="124.4" y2="473.8" stroke="#b8b8b8" stroke-width="0.8"/><rect x="76.4" y="469.4" width="9.2" height="9" fill="none" stroke="#b8b8b8" stroke-width="0.8"/><path d="M81 424 L77.6 432.2 L84.4 432.2Z" fill="none" stroke="#b8b8b8" stroke-width="0.8"/><path d="M132.4 473.8 L124.2 470.4 L124.2 477.2Z" fill="none" stroke="#b8b8b8" stroke-width="0.8"/><text x="81.6" y="413.4" font-size="12.4" text-anchor="middle" fill="#9e9e9e" font-family="Liberation Sans,sans-serif">Y</text><text x="146" y="478.4" font-size="12.4" text-anchor="middle" fill="#9e9e9e" font-family="Liberation Sans,sans-serif">X</text></svg>
<div style="left:940.4px;top:56px;width:55.6px;height:472px;background:#f0f0f0"></div>
<div style="left:940.4px;top:56px;width:1.4px;height:432px;background:#fbfbfb"></div>
<div style="left:944.2px;top:57.6px;width:8.6px;height:0.6px;background:#c8c8c8"></div>
<div style="left:944.2px;top:59.2px;width:8.6px;height:0.6px;background:#c8c8c8"></div>
<div style="left:941.8000000000001px;top:56px;width:0.6px;height:250.39999999999998px;background:#e2e2e2"></div>
<div style="left:942.2px;top:306.4px;width:13px;height:0.6px;background:#d6d6d6"></div>
<div style="left:958.4px;top:57.6px;width:8.6px;height:0.6px;background:#c8c8c8"></div>
<div style="left:958.4px;top:59.2px;width:8.6px;height:0.6px;background:#c8c8c8"></div>
<div style="left:956.0px;top:56px;width:0.6px;height:277px;background:#e2e2e2"></div>
<div style="left:956.4px;top:333px;width:13px;height:0.6px;background:#d6d6d6"></div>
<div style="left:972.2px;top:57.6px;width:8.6px;height:0.6px;background:#c8c8c8"></div>
<div style="left:972.2px;top:59.2px;width:8.6px;height:0.6px;background:#c8c8c8"></div>
<div style="left:969.8000000000001px;top:56px;width:0.6px;height:283.6px;background:#e2e2e2"></div>
<div style="left:970.2px;top:339.6px;width:13px;height:0.6px;background:#d6d6d6"></div>
<div style="left:985.6px;top:57.6px;width:8.6px;height:0.6px;background:#c8c8c8"></div>
<div style="left:985.6px;top:59.2px;width:8.6px;height:0.6px;background:#c8c8c8"></div>
<div style="left:983.2px;top:56px;width:0.6px;height:257px;background:#e2e2e2"></div>
<div style="left:983.6px;top:313px;width:13px;height:0.6px;background:#d6d6d6"></div>
<svg class="i" style="left:943.8000000000001px;top:62.2px" width="10" height="10" viewBox="0 0 10 10"><g transform="translate(0.4,0.4) scale(0.92)"><rect x="0.8" y="1.2" width="8.4" height="7.6" fill="#dfe6f2" rx="0" stroke="#445" stroke-width="0.7"/><rect x="0.8" y="1.2" width="8.4" height="2" fill="#556a90" rx="0"/><rect x="2" y="4.4" width="3" height="3" fill="#9ab" rx="0"/></g></svg>
<svg class="i" style="left:943.8000000000001px;top:73.77px" width="10" height="10" viewBox="0 0 10 10"><g transform="translate(0.4,0.4) scale(0.92)"><rect x="0.8" y="1.6" width="7" height="3" fill="#fff" rx="0" stroke="#556" stroke-width="0.6"/><path d="M2 8.4 L8.6 8.4" fill="none" stroke="#2b62b8" stroke-width="1.2" /><path d="M5 7 L9 2" fill="none" stroke="#e3c23a" stroke-width="1.3" /></g></svg>
<svg class="i" style="left:943.8000000000001px;top:85.34px" width="10" height="10" viewBox="0 0 10 10"><g transform="translate(0.4,0.4) scale(0.92)"><path d="M0.8 6.4 L3.4 4.4 L9.2 4.4 L6.8 6.4Z" fill="#d3deec" stroke="#7f98b8" stroke-width="0.35" /><path d="M0.8 5 L3.4 3 L9.2 3 L6.8 5Z" fill="#bccde2" stroke="#7f98b8" stroke-width="0.35" /><path d="M0.8 3.6 L3.4 1.6 L9.2 1.6 L6.8 3.6Z" fill="#a9bfdb" stroke="#7f98b8" stroke-width="0.35" /><path d="M0.8 6.4 L0.8 7.6 L6.8 7.6 L9.2 5.6" fill="#9db3cf" stroke="#7f98b8" stroke-width="0.35" /></g></svg>
<svg class="i" style="left:943.8000000000001px;top:96.91px" width="10" height="10" viewBox="0 0 10 10"><g transform="translate(0.4,0.4) scale(0.92)"><path d="M0.6 3.4 L9.4 3.4 M0.6 6.6 L9.4 6.6 M3.4 0.6 L3.4 9.4 M6.6 0.6 L6.6 9.4" fill="none" stroke="#d8404a" stroke-width="1" /></g></svg>
<svg class="i" style="left:943.8000000000001px;top:108.48px" width="10" height="10" viewBox="0 0 10 10"><g transform="translate(0.4,0.4) scale(0.92)"><rect x="2" y="2" width="6" height="6" fill="#2b62b8" rx="0"/><path d="M0.4 5 L9.6 5 M5 0.4 L5 9.6" fill="none" stroke="#456" stroke-width="0.6" /></g></svg>
<svg class="i" style="left:943.8000000000001px;top:120.05px" width="10" height="10" viewBox="0 0 10 10"><g transform="translate(0.4,0.4) scale(0.92)"><rect x="0.6" y="5" width="8.8" height="3" fill="#2b62b8" rx="0"/><rect x="1" y="1.6" width="3" height="2.6" fill="#d8404a" rx="0"/></g></svg>
<svg class="i" style="left:943.8000000000001px;top:131.62px" width="10" height="10" viewBox="0 0 10 10"><g transform="translate(0.4,0.4) scale(0.92)"><rect x="0.6" y="6.4" width="8.8" height="2" fill="#2b62b8" rx="0"/><rect x="1.6" y="1.4" width="6" height="4.6" fill="#e06a6a" rx="0" stroke="#a33" stroke-width="0.5"/></g></svg>
<svg class="i" style="left:943.8000000000001px;top:143.19px" width="10" height="10" viewBox="0 0 10 10"><g transform="translate(0.4,0.4) scale(0.92)"><rect x="1" y="1" width="8" height="8" fill="#f3dede" rx="0" stroke="#b33" stroke-width="0.8"/><rect x="2.4" y="2.4" width="3" height="2" fill="#d8404a" rx="0"/><rect x="2.4" y="5.6" width="5" height="1.4" fill="#b66" rx="0"/></g></svg>
<svg class="i" style="left:943.8000000000001px;top:154.76px" width="10" height="10" viewBox="0 0 10 10"><g transform="translate(0.4,0.4) scale(0.92)"><rect x="1" y="1" width="2" height="8" fill="#2b62b8" rx="0"/><rect x="4" y="1" width="2" height="8" fill="#8fb2e0" rx="0"/><rect x="7" y="1" width="2" height="8" fill="#2b62b8" rx="0"/></g></svg>
<svg class="i" style="left:943.8000000000001px;top:166.33px" width="10" height="10" viewBox="0 0 10 10"><g transform="translate(0.4,0.4) scale(0.92)"><path d="M1 9 L1 1 L9 1 L9 9" fill="none" stroke="#2b62b8" stroke-width="1.6" /><rect x="3.4" y="3.4" width="3.2" height="5.6" fill="#8fb2e0" rx="0"/></g></svg>
<svg class="i" style="left:943.8000000000001px;top:177.9px" width="10" height="10" viewBox="0 0 10 10"><g transform="translate(0.4,0.4) scale(0.92)"><path d="M1 9 L1 1 L9 1 L9 9" fill="none" stroke="#2b62b8" stroke-width="1.6" /><rect x="3.4" y="3.4" width="3.2" height="5.6" fill="#8fb2e0" rx="0"/></g></svg>
<svg class="i" style="left:943.8000000000001px;top:189.47px" width="10" height="10" viewBox="0 0 10 10"><g transform="translate(0.4,0.4) scale(0.92)"><rect x="0.8" y="2" width="8.4" height="6" fill="#f0c030" rx="0" stroke="#a8741c" stroke-width="0.6"/><path d="M0.8 2 L5 5.6 L9.2 2" fill="none" stroke="#a8741c" stroke-width="0.7" /></g></svg>
<svg class="i" style="left:943.8000000000001px;top:201.04px" width="10" height="10" viewBox="0 0 10 10"><g transform="translate(0.4,0.4) scale(0.92)"><path d="M1 9 L1 6.6 L3.6 6.6 L3.6 4.4 L6.2 4.4 L6.2 2.2 L9 2.2 L9 9Z" fill="#e8a0a0" stroke="#933" stroke-width="0.5" /></g></svg>
<svg class="i" style="left:943.8000000000001px;top:212.61px" width="10" height="10" viewBox="0 0 10 10"><g transform="translate(0.4,0.4) scale(0.92)"><path d="M1 9 L9 9" fill="none" stroke="#2b62b8" stroke-width="1.2" /><path d="M2 7.4 L8 1.4" fill="none" stroke="#e3c23a" stroke-width="1.4" /><path d="M2 7.4 L3.2 6.2" fill="none" stroke="#333" stroke-width="1.4" /></g></svg>
<svg class="i" style="left:943.8000000000001px;top:224.18px" width="10" height="10" viewBox="0 0 10 10"><g transform="translate(0.4,0.4) scale(0.92)"><rect x="0.8" y="1.6" width="5" height="6.4" fill="#f6f6f6" rx="1" stroke="#555" stroke-width="0.7"/><rect x="3.6" y="2.6" width="5" height="6.4" fill="#fff" rx="1" stroke="#555" stroke-width="0.7"/></g></svg>
<svg class="i" style="left:943.8000000000001px;top:235.75px" width="10" height="10" viewBox="0 0 10 10"><g transform="translate(0.4,0.4) scale(0.92)"><rect x="0.8" y="1" width="8.4" height="8" fill="#2b62b8" rx="0" stroke="#1d3f86" stroke-width="0.5"/><rect x="1.8" y="2" width="3" height="3" fill="#f0c0b0" rx="0"/><rect x="5.4" y="2" width="3" height="3" fill="#dfe8f8" rx="0"/><rect x="1.8" y="5.8" width="6.6" height="2.2" fill="#dfe8f8" rx="0"/></g></svg>
<svg class="i" style="left:943.8000000000001px;top:247.32px" width="10" height="10" viewBox="0 0 10 10"><g transform="translate(0.4,0.4) scale(0.92)"><text x="5" y="4.6" font-size="4.6" text-anchor="middle" fill="#223" font-family="Liberation Sans,sans-serif">100</text><path d="M1 6 L9 6 M2 8 L8 8 M5 6 L5 9.4" fill="none" stroke="#333" stroke-width="0.7" /></g></svg>
<svg class="i" style="left:943.8000000000001px;top:258.89px" width="10" height="10" viewBox="0 0 10 10"><g transform="translate(0.4,0.4) scale(0.92)"><path d="M3 0.8 L3 9.4" fill="none" stroke="#333" stroke-width="1" /><path d="M3 2 L8.6 2 M3 4.2 L8.6 4.2 M3 6.4 L7 6.4" fill="none" stroke="#333" stroke-width="0.8" /></g></svg>
<svg class="i" style="left:943.8000000000001px;top:270.46px" width="10" height="10" viewBox="0 0 10 10"><g transform="translate(0.4,0.4) scale(0.92)"><text x="5.6" y="7.4" font-size="8" text-anchor="middle" fill="#223" font-family="Liberation Sans,sans-serif">A</text><rect x="0.8" y="7.6" width="2" height="1.8" fill="#333" rx="0"/></g></svg>
<svg class="i" style="left:943.8000000000001px;top:282.03px" width="10" height="10" viewBox="0 0 10 10"><g transform="translate(0.4,0.4) scale(0.92)"><circle cx="5" cy="5" r="3.8" fill="none" stroke="#333" stroke-width="0.9"/><path d="M5 0.6 L5 9.4 M0.6 5 L9.4 5" fill="none" stroke="#333" stroke-width="0.8" /></g></svg>
<svg class="i" style="left:943.8000000000001px;top:293.6px" width="10" height="10" viewBox="0 0 10 10"><g transform="translate(0.4,0.4) scale(0.92)"><circle cx="5" cy="5" r="4.2" fill="#2f6fd0" stroke="#1d3f86" stroke-width="0.5"/><text x="5" y="7.6" font-size="7" font-weight="bold" text-anchor="middle" fill="#fff" font-family="Liberation Sans,sans-serif">?</text></g></svg>
<svg class="i" style="left:958.0px;top:62.2px" width="10" height="10" viewBox="0 0 10 10"><g transform="translate(0.4,0.4) scale(0.92)"><rect x="0.8" y="1.2" width="8.4" height="7.6" fill="#dfe6f2" rx="0" stroke="#445" stroke-width="0.7"/><rect x="0.8" y="1.2" width="8.4" height="2" fill="#556a90" rx="0"/><rect x="2" y="4.4" width="3" height="3" fill="#9ab" rx="0"/></g></svg>
<svg class="i" style="left:958.0px;top:73.8px" width="10" height="10" viewBox="0 0 10 10"><g transform="translate(0.4,0.4) scale(0.92)"><rect x="1" y="0.8" width="7" height="8.4" fill="#dfe8f8" rx="0" stroke="#456" stroke-width="0.6"/><circle cx="5.6" cy="5.6" r="2" fill="#bcd6f4" stroke="#3b5f9c" stroke-width="0.7"/><path d="M7 7 L9 9" fill="none" stroke="#3b5f9c" stroke-width="1" /></g></svg>
<svg class="i" style="left:958.0px;top:87.8px" width="10" height="10" viewBox="0 0 10 10"><g transform="translate(0.4,0.4) scale(0.92)"><rect x="0.8" y="1" width="8.4" height="8" fill="#cfe0f6" rx="0" stroke="#2b62b8" stroke-width="0.6"/><rect x="2" y="2" width="1.6" height="6" fill="#2b62b8" rx="0"/><rect x="4.4" y="2" width="1.6" height="6" fill="#2b62b8" rx="0"/><rect x="6.8" y="2" width="1.4" height="6" fill="#2b62b8" rx="0"/></g></svg>
<svg class="i" style="left:958.0px;top:99.4px" width="10" height="10" viewBox="0 0 10 10"><g transform="translate(0.4,0.4) scale(0.92)"><rect x="0.8" y="0.8" width="8.4" height="8.4" fill="#dfe8f8" rx="0" stroke="#2b62b8" stroke-width="0.7"/><circle cx="5" cy="5" r="2.4" fill="#6fc06a" stroke="#2f7a3a" stroke-width="0.6"/></g></svg>
<svg class="i" style="left:958.0px;top:113.7px" width="10" height="10" viewBox="0 0 10 10"><g transform="translate(0.4,0.4) scale(0.92)"><path d="M1.6 1 L1.6 7 L7 7" fill="none" stroke="#333" stroke-width="0.9" /><circle cx="8" cy="7" r="1.2" fill="none" stroke="#2b62b8" stroke-width="0.8"/><circle cx="1.6" cy="1" r="0.9" fill="#2b62b8"/></g></svg>
<svg class="i" style="left:958.0px;top:125.80000000000001px" width="10" height="10" viewBox="0 0 10 10"><g transform="translate(0.4,0.4) scale(0.92)"><path d="M5 0.6 L5 9.4 M0.6 5 L9.4 5" fill="none" stroke="#3f9c4a" stroke-width="1.1" /><rect x="3.4" y="3.4" width="3.2" height="3.2" fill="#dfe8f8" rx="0" stroke="#3a7a3a" stroke-width="0.6"/></g></svg>
<svg class="i" style="left:958.0px;top:137.4px" width="10" height="10" viewBox="0 0 10 10"><g transform="translate(0.4,0.4) scale(0.92)"><path d="M1 8.6 L5 4.6 L5 1" fill="none" stroke="#333" stroke-width="1" /><circle cx="5" cy="1.4" r="1" fill="#2b62b8"/><circle cx="1.4" cy="8.4" r="1" fill="#2b62b8"/></g></svg>
<svg class="i" style="left:958.0px;top:149px" width="10" height="10" viewBox="0 0 10 10"><g transform="translate(0.4,0.4) scale(0.92)"><path d="M3 0.8 L3 9.4" fill="none" stroke="#333" stroke-width="1" /><path d="M3 2 L8.6 2 M3 4.2 L8.6 4.2 M3 6.4 L7 6.4" fill="none" stroke="#333" stroke-width="0.8" /></g></svg>
<svg class="i" style="left:958.0px;top:160.5px" width="10" height="10" viewBox="0 0 10 10"><g transform="translate(0.4,0.4) scale(0.92)"><text x="5" y="6.4" font-size="7" text-anchor="middle" fill="#223" font-family="Liberation Sans,sans-serif">A</text><path d="M0.8 8.6 L9.2 8.6" fill="none" stroke="#333" stroke-width="1" /></g></svg>
<svg class="i" style="left:958.0px;top:172px" width="10" height="10" viewBox="0 0 10 10"><g transform="translate(0.4,0.4) scale(0.92)"><rect x="1" y="1" width="6" height="8" fill="#7a6fc0" rx="0" stroke="#3a2f80" stroke-width="0.5"/><path d="M5 5 L9.4 5 M7.6 3 L9.4 5 L7.6 7" fill="none" stroke="#223" stroke-width="0.9" /></g></svg>
<svg class="i" style="left:958.0px;top:183.5px" width="10" height="10" viewBox="0 0 10 10"><g transform="translate(0.4,0.4) scale(0.92)"><text x="5" y="4.6" font-size="4.6" text-anchor="middle" fill="#223" font-family="Liberation Sans,sans-serif">100</text><path d="M1 6 L9 6 M2 8 L8 8 M5 6 L5 9.4" fill="none" stroke="#333" stroke-width="0.7" /></g></svg>
<svg class="i" style="left:958.0px;top:195px" width="10" height="10" viewBox="0 0 10 10"><g transform="translate(0.4,0.4) scale(0.92)"><text x="5" y="7.6" font-size="7.4" text-anchor="middle" fill="#223">字</text></g></svg>
<svg class="i" style="left:958.0px;top:210.4px" width="10" height="10" viewBox="0 0 10 10"><g transform="translate(0.4,0.4) scale(0.92)"><rect x="0.8" y="1" width="8.4" height="8" fill="#2b62b8" rx="0" stroke="#1d3f86" stroke-width="0.5"/><rect x="1.8" y="2" width="3" height="3" fill="#f0c0b0" rx="0"/><rect x="5.4" y="2" width="3" height="3" fill="#dfe8f8" rx="0"/><rect x="1.8" y="5.8" width="6.6" height="2.2" fill="#dfe8f8" rx="0"/></g></svg>
<svg class="i" style="left:958.0px;top:222.2px" width="10" height="10" viewBox="0 0 10 10"><g transform="translate(0.4,0.4) scale(0.92)"><path d="M1 2 L9 2 M1 8 L9 8" fill="none" stroke="#2b62b8" stroke-width="0.8" /><circle cx="2" cy="5" r="0.9" fill="#d8404a"/><circle cx="5" cy="5" r="0.9" fill="#d8404a"/><circle cx="8" cy="5" r="0.9" fill="#d8404a"/></g></svg>
<svg class="i" style="left:958.0px;top:234.3px" width="10" height="10" viewBox="0 0 10 10"><g transform="translate(0.4,0.4) scale(0.92)"><path d="M1 9 L1 3 L5 1 L9 3 L9 9Z" fill="#dfe8f8" stroke="#456" stroke-width="0.7" /><path d="M1 6 L9 6" fill="none" stroke="#456" stroke-width="0.5" /></g></svg>
<svg class="i" style="left:958.0px;top:246px" width="10" height="10" viewBox="0 0 10 10"><g transform="translate(0.4,0.4) scale(0.92)"><path d="M1 9 L1 3 L5 1 L9 3 L9 9Z" fill="#dfe8f8" stroke="#456" stroke-width="0.7" /><path d="M1 6 L9 6" fill="none" stroke="#456" stroke-width="0.5" /></g></svg>
<svg class="i" style="left:958.0px;top:259.2px" width="10" height="10" viewBox="0 0 10 10"><g transform="translate(0.4,0.4) scale(0.92)"><rect x="0.8" y="3.6" width="8.4" height="4" fill="#d8404a" rx="1" stroke="#822" stroke-width="0.4"/><rect x="2.4" y="2" width="4.4" height="2" fill="#e88" rx="0"/><circle cx="2.6" cy="8" r="1" fill="#222"/><circle cx="7.4" cy="8" r="1" fill="#222"/></g></svg>
<svg class="i" style="left:958.0px;top:271.1px" width="10" height="10" viewBox="0 0 10 10"><g transform="translate(0.4,0.4) scale(0.92)"><path d="M1 9 L9 9" fill="none" stroke="#2b62b8" stroke-width="1.2" /><path d="M2 7.4 L8 1.4" fill="none" stroke="#e3c23a" stroke-width="1.4" /><path d="M2 7.4 L3.2 6.2" fill="none" stroke="#333" stroke-width="1.4" /></g></svg>
<svg class="i" style="left:958.0px;top:282.1px" width="10" height="10" viewBox="0 0 10 10"><g transform="translate(0.4,0.4) scale(0.92)"><rect x="0.8" y="4" width="8.4" height="3.6" fill="#9ab" rx="1" stroke="#456" stroke-width="0.4"/><rect x="2.4" y="2" width="4.4" height="2.2" fill="#cde" rx="0"/><rect x="5.6" y="5.2" width="3" height="2" fill="#d8404a" rx="0"/></g></svg>
<svg class="i" style="left:958.0px;top:297.5px" width="10" height="10" viewBox="0 0 10 10"><g transform="translate(0.4,0.4) scale(0.92)"><rect x="1" y="2" width="8" height="6" fill="#cfe0f6" rx="0" stroke="#2b62b8" stroke-width="0.7"/><path d="M1 5 L9 5 M4 2 L4 8" fill="none" stroke="#2b62b8" stroke-width="0.5" /></g></svg>
<svg class="i" style="left:958.0px;top:309.2px" width="10" height="10" viewBox="0 0 10 10"><g transform="translate(0.4,0.4) scale(0.92)"><rect x="1.4" y="1.4" width="7.2" height="7.2" fill="none" rx="0" stroke="#456" stroke-width="0.9"/></g></svg>
<svg class="i" style="left:958.0px;top:320.9px" width="10" height="10" viewBox="0 0 10 10"><g transform="translate(0.4,0.4) scale(0.92)"><rect x="1" y="5" width="8" height="3.6" fill="#b87a2a" rx="0" stroke="#6a4414" stroke-width="0.5"/><path d="M3 5 L6.6 1" fill="none" stroke="#e3c23a" stroke-width="1.4" /></g></svg>
<svg class="i" style="left:971.8000000000001px;top:62px" width="10" height="10" viewBox="0 0 10 10"><g transform="translate(0.4,0.4) scale(0.92)"><path d="M0.6 3.4 L9.4 3.4 M0.6 6.6 L9.4 6.6 M3.4 0.6 L3.4 9.4 M6.6 0.6 L6.6 9.4" fill="none" stroke="#d8404a" stroke-width="1" /></g></svg>
<svg class="i" style="left:971.8000000000001px;top:73.4px" width="10" height="10" viewBox="0 0 10 10"><g transform="translate(0.4,0.4) scale(0.92)"><path d="M3 1 L3 9 M7 1 L7 9" fill="none" stroke="#2b62b8" stroke-width="1.2" /><circle cx="3" cy="1.6" r="1" fill="#d8404a"/><circle cx="7" cy="1.6" r="1" fill="#d8404a"/></g></svg>
<svg class="i" style="left:971.8000000000001px;top:84.9px" width="10" height="10" viewBox="0 0 10 10"><g transform="translate(0.4,0.4) scale(0.92)"><path d="M1 2 L9 2 M5 2 L5 9" fill="none" stroke="#d8404a" stroke-width="1.1" /><path d="M2.6 6 L7.4 6" fill="none" stroke="#2b62b8" stroke-width="0.9" /></g></svg>
<svg class="i" style="left:971.8000000000001px;top:96.4px" width="10" height="10" viewBox="0 0 10 10"><g transform="translate(0.4,0.4) scale(0.92)"><path d="M2 2 L8 8 M2 8 L8 2" fill="none" stroke="#333" stroke-width="0.9" /><circle cx="2" cy="2" r="1.1" fill="none" stroke="#333" stroke-width="0.7"/><circle cx="2" cy="8" r="1.1" fill="none" stroke="#333" stroke-width="0.7"/></g></svg>
<svg class="i" style="left:971.8000000000001px;top:109.2px" width="10" height="10" viewBox="0 0 10 10"><g transform="translate(0.4,0.4) scale(0.92)"><path d="M1 2 L9 2 M1 8 L9 8" fill="none" stroke="#333" stroke-width="1" /><rect x="2.6" y="3.4" width="4.8" height="3.2" fill="#2b62b8" rx="0"/></g></svg>
<svg class="i" style="left:971.8000000000001px;top:120.7px" width="10" height="10" viewBox="0 0 10 10"><g transform="translate(0.4,0.4) scale(0.92)"><path d="M1 5 L9 5" fill="none" stroke="#333" stroke-width="1.2" /><path d="M1 2 L9 2 M1 8 L9 8" fill="none" stroke="#2b62b8" stroke-width="1" /></g></svg>
<svg class="i" style="left:971.8000000000001px;top:132.2px" width="10" height="10" viewBox="0 0 10 10"><g transform="translate(0.4,0.4) scale(0.92)"><rect x="0.6" y="5" width="8.8" height="3" fill="#2b62b8" rx="0"/><rect x="1" y="1.6" width="3" height="2.6" fill="#d8404a" rx="0"/></g></svg>
<svg class="i" style="left:971.8000000000001px;top:143.6px" width="10" height="10" viewBox="0 0 10 10"><g transform="translate(0.4,0.4) scale(0.92)"><rect x="1" y="1" width="2" height="8" fill="#2b62b8" rx="0"/><rect x="4" y="1" width="2" height="8" fill="#8fb2e0" rx="0"/><rect x="7" y="1" width="2" height="8" fill="#2b62b8" rx="0"/></g></svg>
<svg class="i" style="left:971.8000000000001px;top:156.5px" width="10" height="10" viewBox="0 0 10 10"><g transform="translate(0.4,0.4) scale(0.92)"><path d="M1 9 L1 2 L4 2 Q8.6 3 9 9Z" fill="#cfe0f6" stroke="#2b62b8" stroke-width="0.8" /></g></svg>
<svg class="i" style="left:971.8000000000001px;top:168px" width="10" height="10" viewBox="0 0 10 10"><g transform="translate(0.4,0.4) scale(0.92)"><rect x="2" y="2" width="6" height="6" fill="#2b62b8" rx="0"/><path d="M0.4 5 L9.6 5 M5 0.4 L5 9.6" fill="none" stroke="#456" stroke-width="0.6" /></g></svg>
<svg class="i" style="left:971.8000000000001px;top:181.7px" width="10" height="10" viewBox="0 0 10 10"><g transform="translate(0.4,0.4) scale(0.92)"><path d="M1 9 L9 9" fill="none" stroke="#2b62b8" stroke-width="1.2" /><path d="M2 7.4 L8 1.4" fill="none" stroke="#e3c23a" stroke-width="1.4" /><path d="M2 7.4 L3.2 6.2" fill="none" stroke="#333" stroke-width="1.4" /></g></svg>
<svg class="i" style="left:971.8000000000001px;top:194px" width="10" height="10" viewBox="0 0 10 10"><g transform="translate(0.4,0.4) scale(0.92)"><text x="5" y="7.6" font-size="7.4" text-anchor="middle" fill="#223">字</text></g></svg>
<svg class="i" style="left:971.8000000000001px;top:205.5px" width="10" height="10" viewBox="0 0 10 10"><g transform="translate(0.4,0.4) scale(0.92)"><text x="5" y="7.6" font-size="7.4" text-anchor="middle" fill="#223">字</text></g></svg>
<svg class="i" style="left:971.8000000000001px;top:222px" width="10" height="10" viewBox="0 0 10 10"><g transform="translate(0.4,0.4) scale(0.92)"><path d="M1 2 L9 2 M1 8 L9 8" fill="none" stroke="#2b62b8" stroke-width="0.8" /><circle cx="2" cy="5" r="0.9" fill="#d8404a"/><circle cx="5" cy="5" r="0.9" fill="#d8404a"/><circle cx="8" cy="5" r="0.9" fill="#d8404a"/></g></svg>
<svg class="i" style="left:971.8000000000001px;top:234px" width="10" height="10" viewBox="0 0 10 10"><g transform="translate(0.4,0.4) scale(0.92)"><path d="M1 2 L9 2 M1 8 L9 8" fill="none" stroke="#2b62b8" stroke-width="0.8" /><circle cx="2" cy="5" r="0.9" fill="#d8404a"/><circle cx="5" cy="5" r="0.9" fill="#d8404a"/><circle cx="8" cy="5" r="0.9" fill="#d8404a"/></g></svg>
<svg class="i" style="left:971.8000000000001px;top:245.5px" width="10" height="10" viewBox="0 0 10 10"><g transform="translate(0.4,0.4) scale(0.92)"><path d="M3 1 L3 9 M7 1 L7 9" fill="none" stroke="#2b62b8" stroke-width="1.2" /><circle cx="3" cy="1.6" r="1" fill="#d8404a"/><circle cx="7" cy="1.6" r="1" fill="#d8404a"/></g></svg>
<svg class="i" style="left:971.8000000000001px;top:256.5px" width="10" height="10" viewBox="0 0 10 10"><g transform="translate(0.4,0.4) scale(0.92)"><path d="M8.4 5 A3.4 3.4 0 1 1 5 1.6" fill="none" stroke="#2b62b8" stroke-width="1.2" /><path d="M4.4 0.2 L6.4 1.6 L4.4 3" fill="none" stroke="#2b62b8" stroke-width="0.8" /></g></svg>
<svg class="i" style="left:971.8000000000001px;top:269px" width="10" height="10" viewBox="0 0 10 10"><g transform="translate(0.4,0.4) scale(0.92)"><path d="M1 9 L1 3 L5 1 L9 3 L9 9Z" fill="#dfe8f8" stroke="#456" stroke-width="0.7" /><path d="M1 6 L9 6" fill="none" stroke="#456" stroke-width="0.5" /></g></svg>
<svg class="i" style="left:971.8000000000001px;top:280.5px" width="10" height="10" viewBox="0 0 10 10"><g transform="translate(0.4,0.4) scale(0.92)"><path d="M8 5 A3 3 0 1 1 5 2" fill="none" stroke="#3f9c4a" stroke-width="1.2" /><path d="M4.4 0.6 L6.2 2 L4.4 3.4" fill="none" stroke="#3f9c4a" stroke-width="0.8" /><rect x="3.6" y="3.6" width="3" height="3" fill="#dfe8f8" rx="0" stroke="#456" stroke-width="0.5"/></g></svg>
<svg class="i" style="left:971.8000000000001px;top:293.8px" width="10" height="10" viewBox="0 0 10 10"><g transform="translate(0.4,0.4) scale(0.92)"><circle cx="3" cy="3" r="1.6" fill="none" stroke="#2b62b8" stroke-width="0.8"/><circle cx="7" cy="7" r="1.6" fill="none" stroke="#2b62b8" stroke-width="0.8"/><path d="M4 4 L6 6" fill="none" stroke="#333" stroke-width="0.8" /></g></svg>
<svg class="i" style="left:971.8000000000001px;top:305.5px" width="10" height="10" viewBox="0 0 10 10"><g transform="translate(0.4,0.4) scale(0.92)"><path d="M5 0.6 L5 9.4 M0.6 5 L9.4 5" fill="none" stroke="#2b62b8" stroke-width="1.2" /><path d="M3.6 2 L5 0.4 L6.4 2 M3.6 8 L5 9.6 L6.4 8 M2 3.6 L0.4 5 L2 6.4 M8 3.6 L9.6 5 L8 6.4" fill="none" stroke="#2b62b8" stroke-width="0.8" /></g></svg>
<svg class="i" style="left:971.8000000000001px;top:317.4px" width="10" height="10" viewBox="0 0 10 10"><g transform="translate(0.4,0.4) scale(0.92)"><path d="M5 0.6 L5 9.4 M0.6 5 L9.4 5" fill="none" stroke="#2b62b8" stroke-width="1.2" /><path d="M3.6 2 L5 0.4 L6.4 2 M3.6 8 L5 9.6 L6.4 8 M2 3.6 L0.4 5 L2 6.4 M8 3.6 L9.6 5 L8 6.4" fill="none" stroke="#2b62b8" stroke-width="0.8" /></g></svg>
<svg class="i" style="left:971.8000000000001px;top:329px" width="10" height="10" viewBox="0 0 10 10"><g transform="translate(0.4,0.4) scale(0.92)"><path d="M1 4 L5 2 L9 4 L9 8 L5 9.6 L1 8Z" fill="#8fb2e0" stroke="#1d3f86" stroke-width="0.5" /><path d="M1 4 L5 5.6 L9 4 M5 5.6 L5 9.6" fill="none" stroke="#1d3f86" stroke-width="0.5" /><rect x="5.6" y="5.6" width="3.4" height="3.4" fill="#e3c23a" rx="0" stroke="#862" stroke-width="0.4"/></g></svg>
<svg class="i" style="left:985.2px;top:62.2px" width="10" height="10" viewBox="0 0 10 10"><g transform="translate(0.4,0.4) scale(0.92)"><path d="M1 9 L9 9" fill="none" stroke="#2b62b8" stroke-width="1.2" /><path d="M2 7.4 L8 1.4" fill="none" stroke="#e3c23a" stroke-width="1.4" /><path d="M2 7.4 L3.2 6.2" fill="none" stroke="#333" stroke-width="1.4" /></g></svg>
<svg class="i" style="left:985.2px;top:73.77px" width="10" height="10" viewBox="0 0 10 10"><g transform="translate(0.4,0.4) scale(0.92)"><circle cx="3.4" cy="3.4" r="2.2" fill="none" stroke="#333" stroke-width="0.9"/><circle cx="6.4" cy="6.4" r="2.2" fill="none" stroke="#333" stroke-width="0.9"/></g></svg>
<svg class="i" style="left:985.2px;top:85.34px" width="10" height="10" viewBox="0 0 10 10"><g transform="translate(0.4,0.4) scale(0.92)"><path d="M5 1 L9 9 L1 9Z" fill="none" stroke="#333" stroke-width="0.9" /><path d="M5 3.6 L7 8 L3 8Z" fill="none" stroke="#456" stroke-width="0.5" /></g></svg>
<svg class="i" style="left:985.2px;top:96.91px" width="10" height="10" viewBox="0 0 10 10"><g transform="translate(0.4,0.4) scale(0.92)"><path d="M1 8 Q5 -2 9 8Z" fill="#7ea3dc" stroke="#1d3f86" stroke-width="0.6" /><path d="M0.6 8.6 L9.4 8.6" fill="none" stroke="#333" stroke-width="0.8" /></g></svg>
<svg class="i" style="left:985.2px;top:108.48px" width="10" height="10" viewBox="0 0 10 10"><g transform="translate(0.4,0.4) scale(0.92)"><rect x="1" y="1" width="3.4" height="3.4" fill="none" rx="0" stroke="#333" stroke-width="0.8"/><rect x="5.6" y="1" width="3.4" height="3.4" fill="none" rx="0" stroke="#333" stroke-width="0.8"/><rect x="1" y="5.6" width="3.4" height="3.4" fill="none" rx="0" stroke="#333" stroke-width="0.8"/><rect x="5.6" y="5.6" width="3.4" height="3.4" fill="none" rx="0" stroke="#333" stroke-width="0.8"/></g></svg>
<svg class="i" style="left:985.2px;top:120.05px" width="10" height="10" viewBox="0 0 10 10"><g transform="translate(0.4,0.4) scale(0.92)"><path d="M5 0.6 L5 9.4 M0.6 5 L9.4 5" fill="none" stroke="#2b62b8" stroke-width="1.2" /><path d="M3.6 2 L5 0.4 L6.4 2 M3.6 8 L5 9.6 L6.4 8 M2 3.6 L0.4 5 L2 6.4 M8 3.6 L9.6 5 L8 6.4" fill="none" stroke="#2b62b8" stroke-width="0.8" /></g></svg>
<svg class="i" style="left:985.2px;top:131.62px" width="10" height="10" viewBox="0 0 10 10"><g transform="translate(0.4,0.4) scale(0.92)"><path d="M8.4 5 A3.4 3.4 0 1 1 5 1.6" fill="none" stroke="#2b62b8" stroke-width="1.2" /><path d="M4.4 0.2 L6.4 1.6 L4.4 3" fill="none" stroke="#2b62b8" stroke-width="0.8" /></g></svg>
<svg class="i" style="left:985.2px;top:143.19px" width="10" height="10" viewBox="0 0 10 10"><g transform="translate(0.4,0.4) scale(0.92)"><rect x="1" y="1" width="8" height="8" fill="none" rx="0" stroke="#8fb2e0" stroke-width="0.9"/><rect x="1" y="5" width="4" height="4" fill="none" rx="0" stroke="#2b62b8" stroke-width="0.9"/></g></svg>
<svg class="i" style="left:985.2px;top:154.76px" width="10" height="10" viewBox="0 0 10 10"><g transform="translate(0.4,0.4) scale(0.92)"><path d="M1 9 L1 2 L4 2 Q8.6 3 9 9Z" fill="#cfe0f6" stroke="#2b62b8" stroke-width="0.8" /></g></svg>
<svg class="i" style="left:985.2px;top:166.33px" width="10" height="10" viewBox="0 0 10 10"><g transform="translate(0.4,0.4) scale(0.92)"><path d="M0.6 6 L4 6 M6 4 L9.4 4" fill="none" stroke="#2b62b8" stroke-width="1" /><path d="M4 8 L6 2" fill="none" stroke="#333" stroke-width="0.7" /></g></svg>
<svg class="i" style="left:985.2px;top:177.9px" width="10" height="10" viewBox="0 0 10 10"><g transform="translate(0.4,0.4) scale(0.92)"><path d="M0.6 6 L4 6 M6 4 L9.4 4" fill="none" stroke="#2b62b8" stroke-width="1" /><path d="M4 8 L6 2" fill="none" stroke="#333" stroke-width="0.7" /></g></svg>
<svg class="i" style="left:985.2px;top:189.47px" width="10" height="10" viewBox="0 0 10 10"><g transform="translate(0.4,0.4) scale(0.92)"><rect x="1.4" y="1.4" width="7.2" height="7.2" fill="none" rx="0" stroke="#456" stroke-width="0.9"/></g></svg>
<svg class="i" style="left:985.2px;top:201.04px" width="10" height="10" viewBox="0 0 10 10"><g transform="translate(0.4,0.4) scale(0.92)"><rect x="1.4" y="1.4" width="7.2" height="7.2" fill="none" rx="0" stroke="#456" stroke-width="0.9"/></g></svg>
<svg class="i" style="left:985.2px;top:212.61px" width="10" height="10" viewBox="0 0 10 10"><g transform="translate(0.4,0.4) scale(0.92)"><path d="M1 5 L9 5" fill="none" stroke="#333" stroke-width="1.2" /><path d="M1 2 L9 2 M1 8 L9 8" fill="none" stroke="#2b62b8" stroke-width="1" /></g></svg>
<svg class="i" style="left:985.2px;top:224.18px" width="10" height="10" viewBox="0 0 10 10"><g transform="translate(0.4,0.4) scale(0.92)"><path d="M1 9 Q1.4 1.6 9 1" fill="none" stroke="#2b62b8" stroke-width="1" /></g></svg>
<svg class="i" style="left:985.2px;top:235.75px" width="10" height="10" viewBox="0 0 10 10"><g transform="translate(0.4,0.4) scale(0.92)"><path d="M1 9 L1 5 Q1 1 5 1 L9 1" fill="none" stroke="#2b62b8" stroke-width="1" /></g></svg>
<svg class="i" style="left:985.2px;top:247.32px" width="10" height="10" viewBox="0 0 10 10"><g transform="translate(0.4,0.4) scale(0.92)"><path d="M2 8 L8 2" fill="none" stroke="#d8404a" stroke-width="1" /><path d="M5 1 L5.6 4.4 L9 5 L5.6 5.6 L5 9 L4.4 5.6 L1 5 L4.4 4.4Z" fill="#f0d040" stroke="#e3c23a" stroke-width="0.4" /></g></svg>
<svg class="i" style="left:985.2px;top:267.4px" width="10" height="10" viewBox="0 0 10 10"><g transform="translate(0.4,0.4) scale(0.92)"><rect x="0.8" y="0.8" width="6" height="6" fill="#5a86cc" rx="0" stroke="#1d3f86" stroke-width="0.5"/><rect x="3.2" y="3.2" width="6" height="6" fill="#8fb2e0" rx="0" stroke="#1d3f86" stroke-width="0.5"/></g></svg>
<svg class="i" style="left:985.2px;top:279.5px" width="10" height="10" viewBox="0 0 10 10"><g transform="translate(0.4,0.4) scale(0.92)"><rect x="0.8" y="0.8" width="6" height="6" fill="#8fb2e0" rx="0" stroke="#1d3f86" stroke-width="0.5"/><rect x="3.2" y="3.2" width="6" height="6" fill="#5a86cc" rx="0" stroke="#1d3f86" stroke-width="0.5"/></g></svg>
<svg class="i" style="left:985.2px;top:290.9px" width="10" height="10" viewBox="0 0 10 10"><g transform="translate(0.4,0.4) scale(0.92)"><rect x="0.8" y="0.8" width="6" height="6" fill="#5a86cc" rx="0" stroke="#1d3f86" stroke-width="0.5"/><rect x="3.2" y="3.2" width="6" height="6" fill="#8fb2e0" rx="0" stroke="#1d3f86" stroke-width="0.5"/></g></svg>
<svg class="i" style="left:985.2px;top:302.6px" width="10" height="10" viewBox="0 0 10 10"><g transform="translate(0.4,0.4) scale(0.92)"><rect x="0.8" y="0.8" width="6" height="6" fill="#8fb2e0" rx="0" stroke="#1d3f86" stroke-width="0.5"/><rect x="3.2" y="3.2" width="6" height="6" fill="#5a86cc" rx="0" stroke="#1d3f86" stroke-width="0.5"/></g></svg>
<div style="left:958.0px;top:85.6px;width:10px;height:0.6px;background:#cfcfcf"></div>
<div style="left:958.0px;top:111.4px;width:10px;height:0.6px;background:#cfcfcf"></div>
<div style="left:958.0px;top:207.6px;width:10px;height:0.6px;background:#cfcfcf"></div>
<div style="left:958.0px;top:294.6px;width:10px;height:0.6px;background:#cfcfcf"></div>
<div style="left:971.8000000000001px;top:107.6px;width:10px;height:0.6px;background:#cfcfcf"></div>
<div style="left:971.8000000000001px;top:155px;width:10px;height:0.6px;background:#cfcfcf"></div>
<div style="left:971.8000000000001px;top:180px;width:10px;height:0.6px;background:#cfcfcf"></div>
<div style="left:971.8000000000001px;top:218.6px;width:10px;height:0.6px;background:#cfcfcf"></div>
<div style="left:971.8000000000001px;top:292px;width:10px;height:0.6px;background:#cfcfcf"></div>
<div style="left:983.2px;top:259.6px;width:13px;height:6.4px;background:#f0f0f0"></div>
<div style="left:983.6px;top:259.6px;width:12px;height:0.6px;background:#d6d6d6"></div>
<div style="left:985.6px;top:264.6px;width:8.6px;height:0.6px;background:#c8c8c8"></div>
<div style="left:985.6px;top:266.2px;width:8.6px;height:0.6px;background:#c8c8c8"></div>
<div style="left:40.2px;top:488px;width:900.2px;height:8.6px;background:#f0f0f0"></div>
<div style="left:68px;top:488px;width:872.4px;height:8.4px;background:#ececec"></div>
<div style="left:69.0px;top:488.6px;width:8.8px;height:7.4px;background:#fbfbfb;border:0.5px solid #bdbdbd"></div>
<div style="left:78.3px;top:488.6px;width:8.8px;height:7.4px;background:#fbfbfb;border:0.5px solid #bdbdbd"></div>
<div style="left:87.6px;top:488.6px;width:8.8px;height:7.4px;background:#fbfbfb;border:0.5px solid #bdbdbd"></div>
<div style="left:96.9px;top:488.6px;width:8.8px;height:7.4px;background:#fbfbfb;border:0.5px solid #bdbdbd"></div>
<svg class="i" style="left:69.0px;top:488.4px" width="9" height="8" viewBox="0 0 9 8"><path d="M2 1.6 L2 6 M6.6 1.6 L3 3.8 L6.6 6Z" fill="#222" stroke="#222" stroke-width="0.7" /></svg>
<svg class="i" style="left:78.3px;top:488.4px" width="9" height="8" viewBox="0 0 9 8"><path d="M6 1.6 L2.6 3.8 L6 6Z" fill="#222" stroke="#222" stroke-width="0.4" /></svg>
<svg class="i" style="left:87.6px;top:488.4px" width="9" height="8" viewBox="0 0 9 8"><path d="M3 1.6 L6.4 3.8 L3 6Z" fill="#222" stroke="#222" stroke-width="0.4" /></svg>
<svg class="i" style="left:96.9px;top:488.4px" width="9" height="8" viewBox="0 0 9 8"><path d="M7 1.6 L7 6 M2.4 1.6 L6 3.8 L2.4 6Z" fill="#222" stroke="#222" stroke-width="0.7" /></svg>
<svg style="left:0;top:0" width="1000" height="545" viewBox="0 0 1000 545"><path d="M107.6 488 L129 488 L126.6 495.8 L110.4 495.8Z" fill="#000"/><path d="M129.6 488.4 L150.4 488.4 L147.6 495.8 L127.4 495.8Z" fill="#fafafa" stroke="#555" stroke-width="0.5"/><path d="M151.4 488.4 L172.6 488.4 L169.6 495.8 L149.2 495.8Z" fill="#fafafa" stroke="#555" stroke-width="0.5"/></svg>
<div class="t" style="left:112.4px;top:490px;font-size:5.8px;line-height:7.54px;color:#fff;">模型</div>
<div class="t" style="left:131.6px;top:490px;font-size:5.6px;line-height:7.28px;color:#9a9a9a;">布局1</div>
<div class="t" style="left:153.2px;top:490px;font-size:5.6px;line-height:7.28px;color:#9a9a9a;">布局2</div>
<div style="left:40.2px;top:496.6px;width:956px;height:7.8px;background:#f0f0f0"></div>
<div style="left:40.2px;top:499.1px;width:956px;height:1px;background:#858585"></div>
<div style="left:40.2px;top:499.9px;width:956px;height:0.6px;background:#fdfdfd"></div>
<div style="left:40.2px;top:504px;width:956px;height:24px;background:#f0f0f0"></div>
<div style="left:48px;top:504.4px;width:0.7px;height:23.6px;background:#9a9a9a"></div>
<div style="left:43.4px;top:505px;width:0.6px;height:22px;background:#d0d0d0"></div>
<div style="left:45px;top:505px;width:0.6px;height:22px;background:#d0d0d0"></div>
<div style="left:48.8px;top:504.4px;width:932px;height:23.4px;background:#fff"></div>
<div style="left:48.8px;top:504.4px;width:932px;height:0.6px;background:#a8a8a8"></div>
<div style="left:48.8px;top:516.4px;width:932px;height:0.5px;background:#cfcfcf"></div>
<div class="t" style="left:50.2px;top:506px;font-size:7.3px;line-height:9.49px;color:#222;letter-spacing:0.7px">命令:</div>
<div class="t" style="left:50.2px;top:518px;font-size:7.3px;line-height:9.49px;color:#222;letter-spacing:0.7px">命令:</div>
<div style="left:981px;top:504.4px;width:12px;height:23.4px;background:#f4f4f4;border-left:0.5px solid #d0d0d0"></div>
<svg class="i" style="left:984.6px;top:507.4px" width="4" height="3" viewBox="0 0 4 3"><path d="M0 2.2 L2 0 L4 2.2Z" fill="#444" stroke="none" stroke-width="0" /></svg>
<svg class="i" style="left:984.6px;top:513px" width="4" height="3" viewBox="0 0 4 3"><path d="M0 0 L2 2.2 L4 0Z" fill="#444" stroke="none" stroke-width="0" /></svg>
<div style="left:0px;top:528px;width:996px;height:13.2px;background:#f0f0f0"></div>
<div style="left:0px;top:528px;width:996px;height:0.6px;background:#d9d9d9"></div>
<div class="t" style="left:2.4px;top:533px;font-size:6.2px;line-height:8.06px;color:#222;">比例 1:100 ▾</div>
<div style="left:43.6px;top:531.4px;width:128.6px;height:9.2px;background:#ece7e7;border-top:0.6px solid #bdb8b8;border-left:0.6px solid #bdb8b8"></div>
<div class="m" style="left:45px;top:534px;font-size:5.3px;line-height:6.89px;color:#222;">264067.6089, 76512.9571, 0.0000</div>
<div class="t" style="left:175px;top:533px;font-size:6.3px;line-height:8.19px;color:#1a1a1a;width:12.5px;text-align:center">捕捉</div>
<div class="t" style="left:192.5px;top:533px;font-size:6.3px;line-height:8.19px;color:#1a1a1a;width:12.5px;text-align:center">栅格</div>
<div style="left:208.4px;top:530.4px;width:15.0px;height:10.6px;background:#fafafa;border:0.7px solid #777;border-right-color:#cfcfcf;border-bottom-color:#cfcfcf"></div>
<div class="t" style="left:208.4px;top:533px;font-size:6.3px;line-height:8.19px;color:#1a1a1a;width:15.0px;text-align:center">正交</div>
<div class="t" style="left:226px;top:533px;font-size:6.3px;line-height:8.19px;color:#1a1a1a;width:12.5px;text-align:center">极轴</div>
<div style="left:241px;top:530.4px;width:28px;height:10.6px;background:#fafafa;border:0.7px solid #777;border-right-color:#cfcfcf;border-bottom-color:#cfcfcf"></div>
<div class="t" style="left:241px;top:533px;font-size:6.3px;line-height:8.19px;color:#1a1a1a;width:28px;text-align:center">对象捕捉</div>
<div class="t" style="left:271.5px;top:533px;font-size:6.3px;line-height:8.19px;color:#1a1a1a;width:27.0px;text-align:center">对象追踪</div>
<div class="m" style="left:301.5px;top:534px;font-size:5.0px;line-height:6.5px;color:#333;width:12.5px;text-align:center">DUCS</div>
<div class="m" style="left:318.5px;top:534px;font-size:5.0px;line-height:6.5px;color:#333;width:10.0px;text-align:center">DYN</div>
<div class="t" style="left:331.5px;top:533px;font-size:6.3px;line-height:8.19px;color:#1a1a1a;width:13.5px;text-align:center">线宽</div>
<div style="left:347.8px;top:530.4px;width:15.0px;height:10.6px;background:#fafafa;border:0.7px solid #777;border-right-color:#cfcfcf;border-bottom-color:#cfcfcf"></div>
<div class="t" style="left:347.8px;top:533px;font-size:6.3px;line-height:8.19px;color:#1a1a1a;width:15.0px;text-align:center">模型</div>
<div style="left:364.6px;top:530.4px;width:14.699999999999989px;height:10.6px;background:#fafafa;border:0.7px solid #777;border-right-color:#cfcfcf;border-bottom-color:#cfcfcf"></div>
<div class="t" style="left:364.6px;top:533px;font-size:6.3px;line-height:8.19px;color:#1a1a1a;width:14.699999999999989px;text-align:center">编组</div>
<div class="t" style="left:382px;top:533px;font-size:6.3px;line-height:8.19px;color:#1a1a1a;width:13px;text-align:center">基线</div>
<div class="t" style="left:399px;top:533px;font-size:6.3px;line-height:8.19px;color:#1a1a1a;width:13px;text-align:center">填充</div>
<div class="t" style="left:416px;top:533px;font-size:6.3px;line-height:8.19px;color:#1a1a1a;width:13px;text-align:center">加粗</div>
<div class="t" style="left:432.5px;top:533px;font-size:6.3px;line-height:8.19px;color:#1a1a1a;width:26.5px;text-align:center">动态标注</div>
<div style="left:460px;top:530.6px;width:0.6px;height:10px;background:#cfcfcf"></div>
<div style="left:0px;top:541.2px;width:1000px;height:3.8px;background:linear-gradient(#cfdcec,#dde8f5)"></div>
<div style="left:251.2px;top:139px;width:506.8px;height:267.3px;background:linear-gradient(#c6d5e6 0,#a0bbd9 1.4px,#a7c1df 7px,#b4cce9 14.6px,#b3d3f1 16px,#b1d3f2);border-radius:2.4px 2.4px 0 0;border:0.4px solid #8aa6c6"></div>
<div style="left:255.2px;top:153.8px;width:499.2px;height:248.8px;background:linear-gradient(#f7f9f9 0,#f5f6f6 4px,#f0f0f0 6px,#f0f0f0)"></div>
<div style="left:256px;top:144.6px;width:7.2px;height:7.4px;background:#2f8f7a"></div>
<div class="t" style="left:256.6px;top:146px;font-size:4.2px;line-height:5.46px;color:#fff;font-weight:bold;letter-spacing:-0.3px">TS</div>
<div class="t" style="left:266.4px;top:146px;font-size:6.4px;line-height:8.32px;color:#1a2430;">图层特性管理器</div>
<div style="left:719.6px;top:144px;width:15px;height:9.2px;border:0.6px solid #8aa1bf;border-radius:1.4px;background:linear-gradient(#dbe6f3,#b9cde4)"></div>
<div class="t" style="left:724.4px;top:146px;font-size:6.4px;line-height:8.32px;color:#4a5668;font-weight:bold">?</div>
<div style="left:736.4px;top:144px;width:16.2px;height:9.2px;border:0.6px solid #8a3a30;border-radius:1.4px;background:linear-gradient(#e9a090,#d4573f 45%,#c23a24 55%,#d86a4a)"></div>
<div class="t" style="left:741.8px;top:147px;font-size:5.8px;line-height:7.54px;color:#fff;font-weight:bold">✕</div>
<svg class="i" style="left:262.6px;top:161px" width="10" height="10" viewBox="0 0 10 10"><path d="M0.8 6.4 L3.4 4.4 L9.2 4.4 L6.8 6.4Z" fill="#d3deec" stroke="#7f98b8" stroke-width="0.35" /><path d="M0.8 5 L3.4 3 L9.2 3 L6.8 5Z" fill="#bccde2" stroke="#7f98b8" stroke-width="0.35" /><path d="M0.8 3.6 L3.4 1.6 L9.2 1.6 L6.8 3.6Z" fill="#a9bfdb" stroke="#7f98b8" stroke-width="0.35" /><path d="M0.8 6.4 L0.8 7.6 L6.8 7.6 L9.2 5.6" fill="#9db3cf" stroke="#7f98b8" stroke-width="0.35" /><path d="M5 0.4 L8.6 2.2 L5 4Z" fill="#e6d33c" stroke="#8a7a20" stroke-width="0.3" /></svg>
<svg class="i" style="left:273px;top:161px" width="10" height="10" viewBox="0 0 10 10"><path d="M0.8 6.4 L3.4 4.4 L9.2 4.4 L6.8 6.4Z" fill="#d3deec" stroke="#7f98b8" stroke-width="0.35" /><path d="M0.8 5 L3.4 3 L9.2 3 L6.8 5Z" fill="#bccde2" stroke="#7f98b8" stroke-width="0.35" /><path d="M0.8 3.6 L3.4 1.6 L9.2 1.6 L6.8 3.6Z" fill="#a9bfdb" stroke="#7f98b8" stroke-width="0.35" /><path d="M0.8 6.4 L0.8 7.6 L6.8 7.6 L9.2 5.6" fill="#9db3cf" stroke="#7f98b8" stroke-width="0.35" /><path d="M2 1.6 L7 5.6 M7 1.6 L2 5.6" fill="none" stroke="#d8404a" stroke-width="1" /></svg>
<svg class="i" style="left:289.6px;top:161px" width="10" height="10" viewBox="0 0 10 10"><rect x="1" y="1" width="5" height="4.6" fill="#dfe8f8" rx="0" stroke="#3b5f9c" stroke-width="0.7"/><rect x="3.6" y="4" width="5.4" height="5" fill="#f4f8ff" rx="0" stroke="#3b5f9c" stroke-width="0.9"/><path d="M1 0.8 L3 0.8" fill="none" stroke="#3b5f9c" stroke-width="0.8" /></svg>
<div style="left:359.2px;top:151.5px;width:20.8px;height:25.6px;border:2.4px solid #de2226"></div>
<svg class="i" style="left:365px;top:159.6px" width="10" height="10" viewBox="0 0 10 10"><path d="M1 6.6 L4 4.4 L9.4 5 L6.4 7.4Z" fill="#b8cbe2" stroke="#5878a0" stroke-width="0.4" /><path d="M1 6.6 L1 7.8 L6.4 8.6 L9.4 6" fill="#8aa6c8" stroke="#5878a0" stroke-width="0.4" /><circle cx="3.4" cy="3" r="1.9" fill="#f0dc3c" stroke="#8a7a20" stroke-width="0.5"/></svg>
<svg class="i" style="left:380.2px;top:161px" width="8" height="8" viewBox="0 0 8 8"><path d="M0.8 1 L5.8 7 M5.8 1 L0.8 7" fill="none" stroke="#d8283a" stroke-width="1.2" /></svg>
<svg class="i" style="left:391.6px;top:160.6px" width="8" height="8" viewBox="0 0 8 8"><path d="M0.8 4.4 L3 7.4 L6.8 1" fill="none" stroke="#2f9c3a" stroke-width="1.4" /></svg>
<div style="left:416.4px;top:159.6px;width:331.8px;height:15.6px;background:#f4f2f1;border:0.6px solid #e1dfdd;border-top-color:#d2d0ce"></div>
<div class="t" style="left:419.4px;top:164px;font-size:6.3px;line-height:8.19px;color:#222;">当前图层: 墙线</div>
<div style="left:259.6px;top:177.6px;width:105.6px;height:154.6px;background:#fff;border:0.7px solid #9a9fa8"></div>
<div style="left:265.6px;top:181.6px;width:3.4px;height:3.4px;border:0.5px solid #999;background:#fff"></div>
<div style="left:266.4px;top:183px;width:1.8px;height:0.5px;background:#555"></div>
<svg class="i" style="left:270.6px;top:178.8px" width="10" height="10" viewBox="0 0 10 10"><path d="M0.8 6.4 L3.4 4.4 L9.2 4.4 L6.8 6.4Z" fill="#d3deec" stroke="#7f98b8" stroke-width="0.35" /><path d="M0.8 5 L3.4 3 L9.2 3 L6.8 5Z" fill="#bccde2" stroke="#7f98b8" stroke-width="0.35" /><path d="M0.8 3.6 L3.4 1.6 L9.2 1.6 L6.8 3.6Z" fill="#a9bfdb" stroke="#7f98b8" stroke-width="0.35" /><path d="M0.8 6.4 L0.8 7.6 L6.8 7.6 L9.2 5.6" fill="#9db3cf" stroke="#7f98b8" stroke-width="0.35" /></svg>
<div class="t" style="left:283.6px;top:181px;font-size:6.3px;line-height:8.19px;color:#222;">全部</div>
<div style="left:276px;top:189px;width:0.5px;height:4.6px;background:#bbb"></div>
<div style="left:276px;top:193.4px;width:6px;height:0.5px;background:#bbb"></div>
<svg class="i" style="left:283px;top:187.6px" width="10" height="10" viewBox="0 0 10 10"><path d="M0.8 6.4 L3.4 4.4 L9.2 4.4 L6.8 6.4Z" fill="#d3deec" stroke="#7f98b8" stroke-width="0.35" /><path d="M0.8 5 L3.4 3 L9.2 3 L6.8 5Z" fill="#bccde2" stroke="#7f98b8" stroke-width="0.35" /><path d="M0.8 3.6 L3.4 1.6 L9.2 1.6 L6.8 3.6Z" fill="#a9bfdb" stroke="#7f98b8" stroke-width="0.35" /><path d="M0.8 6.4 L0.8 7.6 L6.8 7.6 L9.2 5.6" fill="#9db3cf" stroke="#7f98b8" stroke-width="0.35" /><path d="M4.6 0.2 L8.4 2 L4.6 3.8Z" fill="#e6d33c" stroke="#8a7a20" stroke-width="0.3" /></svg>
<div class="t" style="left:293.4px;top:190px;font-size:6.3px;line-height:8.19px;color:#222;">所有使用的图层</div>
<div style="left:259.6px;top:336.6px;width:105.6px;height:10.4px;background:#fff;border:0.6px solid #d5d5d5;border-top-color:#bcbcbc"></div>
<div class="t" style="left:261.6px;top:340px;font-size:6px;line-height:7.8px;color:#8d8d8d;">搜索图层</div>
<div style="left:367.6px;top:177.8px;width:380.6px;height:169.4px;background:#fff;border-left:0.7px solid #8e939c;border-top:1px solid #9b9b9b"></div>
<div style="left:368.3px;top:178.8px;width:368.4px;height:9.4px;background:linear-gradient(#fdfdfd,#f1f1f1 70%,#e6e6e6)"></div>
<div style="left:368.3px;top:188px;width:368.4px;height:0.5px;background:#d8d8d8"></div>
<div class="t" style="left:370.4px;top:180px;font-size:6.2px;line-height:8.06px;color:#222;">状</div>
<div class="t" style="left:383px;top:180px;font-size:6.2px;line-height:8.06px;color:#222;">名称</div>
<div class="t" style="left:422.4px;top:180px;font-size:6.2px;line-height:8.06px;color:#222;">开</div>
<div class="t" style="left:435px;top:180px;font-size:6.2px;line-height:8.06px;color:#222;">冻结</div>
<div class="t" style="left:457.6px;top:180px;font-size:6.2px;line-height:8.06px;color:#222;">锁定</div>
<div class="t" style="left:473px;top:180px;font-size:6.2px;line-height:8.06px;color:#222;">颜色</div>
<div class="t" style="left:498px;top:180px;font-size:6.2px;line-height:8.06px;color:#222;">线型</div>
<div class="t" style="left:530.6px;top:180px;font-size:6.2px;line-height:8.06px;color:#222;">线宽</div>
<div class="t" style="left:567.4px;top:180px;font-size:6.2px;line-height:8.06px;color:#222;">打印样式</div>
<div class="t" style="left:596px;top:180px;font-size:6.2px;line-height:8.06px;color:#222;">打</div>
<div class="t" style="left:609px;top:180px;font-size:6.2px;line-height:8.06px;color:#222;">说明</div>
<div style="left:380.6px;top:179.2px;width:0.5px;height:8.8px;background:#d4d4d4"></div>
<div style="left:419.4px;top:179.2px;width:0.5px;height:8.8px;background:#d4d4d4"></div>
<div style="left:432.6px;top:179.2px;width:0.5px;height:8.8px;background:#d4d4d4"></div>
<div style="left:455px;top:179.2px;width:0.5px;height:8.8px;background:#d4d4d4"></div>
<div style="left:470.8px;top:179.2px;width:0.5px;height:8.8px;background:#d4d4d4"></div>
<div style="left:495.6px;top:179.2px;width:0.5px;height:8.8px;background:#d4d4d4"></div>
<div style="left:528.4px;top:179.2px;width:0.5px;height:8.8px;background:#d4d4d4"></div>
<div style="left:565px;top:179.2px;width:0.5px;height:8.8px;background:#d4d4d4"></div>
<div style="left:594px;top:179.2px;width:0.5px;height:8.8px;background:#d4d4d4"></div>
<div style="left:606.6px;top:179.2px;width:0.5px;height:8.8px;background:#d4d4d4"></div>
<div style="left:368.3px;top:188px;width:368px;height:149.4px;overflow:hidden">
<svg style="left:1.7px;top:1.7px" width="10" height="7" viewBox="0 0 10 7"><path d="M0.4 3.2 L4.6 1.4 L9 3.2 L4.8 5Z" fill="#b4cae6" stroke="#7f9cc4" stroke-width="0.4" /><path d="M0.4 3.2 L0.4 4 L4.8 5.8 L9 4 L9 3.2 L4.8 5Z" fill="#86a4cc" stroke="none" stroke-width="0" /></svg>
<div class="t" style="left:14.1px;top:2px;font-size:6.2px;line-height:8.06px;color:#111;">地坯</div>
<svg style="left:54.5px;top:0.9px" width="6" height="8" viewBox="0 0 6 8"><circle cx="3" cy="2.9" r="2.3" fill="#fbf7b0" stroke="#8c8636" stroke-width="0.5"/><rect x="2.1" y="5.2" width="1.8" height="2" fill="#bdbdbd" rx="0" stroke="#777" stroke-width="0.4"/></svg>
<svg style="left:71.1px;top:1.5px" width="8" height="8" viewBox="0 0 8 8"><circle cx="3.6" cy="3.6" r="3" fill="#f2e248" stroke="#8a7a20" stroke-width="0.6"/></svg>
<svg style="left:89.1px;top:0.9px" width="9" height="9" viewBox="0 0 9 9"><rect x="1" y="3.4" width="3.6" height="3.6" fill="#d9d03c" rx="0" stroke="#7a7420" stroke-width="0.5"/><path d="M1.6 3.4 L1.6 2.2 Q2.8 0.6 4 2.2 L4 3.4" fill="none" stroke="#7a7420" stroke-width="0.7" /><rect x="3.4" y="4" width="4" height="4" fill="#e6dc4a" rx="0" stroke="#7a7420" stroke-width="0.5"/></svg>
<div style="left:103.7px;top:2.2px;width:5.8px;height:5.8px;background:#8b4a1a;border:0.7px solid #3a3a3a;border-radius:0.6px"></div>
<div class="m" style="left:112.3px;top:2px;font-size:5.8px;line-height:7.54px;color:#555;">34</div>
<div class="m" style="left:128.7px;top:3px;font-size:5.3px;line-height:6.89px;color:#3a3a3a;letter-spacing:-0.05px">Contin...</div>
<div style="left:162.3px;top:4.9px;width:10.6px;height:0.7px;background:#555"></div>
<div class="t" style="left:175.5px;top:2px;font-size:6.2px;line-height:8.06px;color:#111;">默认</div>
<div class="m" style="left:198.3px;top:3px;font-size:5.3px;line-height:6.89px;color:#8a8a8a;letter-spacing:-0.1px">Colo...</div>
<svg style="left:227.7px;top:1.3px" width="8" height="8" viewBox="0 0 8 8"><rect x="2" y="0.4" width="3.6" height="2.6" fill="#eef2fa" rx="0" stroke="#6a7fa8" stroke-width="0.5"/><rect x="0.6" y="2.8" width="6.6" height="3.2" fill="#aebfdc" rx="0.6" stroke="#5f78a8" stroke-width="0.5"/><rect x="1.8" y="5" width="4" height="2" fill="#f7f9fd" rx="0" stroke="#6a7fa8" stroke-width="0.4"/></svg>
<svg style="left:1.7px;top:10.63px" width="10" height="7" viewBox="0 0 10 7"><path d="M0.4 3.2 L4.6 1.4 L9 3.2 L4.8 5Z" fill="#eceef1" stroke="#dadde2" stroke-width="0.4" /><path d="M0.4 3.2 L0.4 4 L4.8 5.8 L9 4 L9 3.2 L4.8 5Z" fill="#dfe2e6" stroke="none" stroke-width="0" /></svg>
<div class="t" style="left:14.1px;top:11px;font-size:6.2px;line-height:8.06px;color:#111;">顶层阳台</div>
<svg style="left:54.5px;top:9.83px" width="6" height="8" viewBox="0 0 6 8"><circle cx="3" cy="2.9" r="2.3" fill="#fbf7b0" stroke="#8c8636" stroke-width="0.5"/><rect x="2.1" y="5.2" width="1.8" height="2" fill="#bdbdbd" rx="0" stroke="#777" stroke-width="0.4"/></svg>
<svg style="left:71.1px;top:10.43px" width="8" height="8" viewBox="0 0 8 8"><circle cx="3.6" cy="3.6" r="3" fill="#f2e248" stroke="#8a7a20" stroke-width="0.6"/></svg>
<svg style="left:89.1px;top:9.83px" width="9" height="9" viewBox="0 0 9 9"><rect x="1" y="3.4" width="3.6" height="3.6" fill="#d9d03c" rx="0" stroke="#7a7420" stroke-width="0.5"/><path d="M1.6 3.4 L1.6 2.2 Q2.8 0.6 4 2.2 L4 3.4" fill="none" stroke="#7a7420" stroke-width="0.7" /><rect x="3.4" y="4" width="4" height="4" fill="#e6dc4a" rx="0" stroke="#7a7420" stroke-width="0.5"/></svg>
<div style="left:103.7px;top:11.13px;width:5.8px;height:5.8px;background:#22e0e6;border:0.7px solid #3a3a3a;border-radius:0.6px"></div>
<div class="t" style="left:112.1px;top:11px;font-size:6.2px;line-height:8.06px;color:#111;">青</div>
<div class="m" style="left:128.7px;top:12px;font-size:5.3px;line-height:6.89px;color:#3a3a3a;letter-spacing:-0.05px">Contin...</div>
<div style="left:162.3px;top:13.83px;width:10.6px;height:0.7px;background:#555"></div>
<div class="t" style="left:175.5px;top:11px;font-size:6.2px;line-height:8.06px;color:#111;">默认</div>
<div class="m" style="left:198.3px;top:12px;font-size:5.3px;line-height:6.89px;color:#8a8a8a;letter-spacing:-0.1px">Color_4</div>
<svg style="left:227.7px;top:10.23px" width="8" height="8" viewBox="0 0 8 8"><rect x="2" y="0.4" width="3.6" height="2.6" fill="#eef2fa" rx="0" stroke="#6a7fa8" stroke-width="0.5"/><rect x="0.6" y="2.8" width="6.6" height="3.2" fill="#aebfdc" rx="0.6" stroke="#5f78a8" stroke-width="0.5"/><rect x="1.8" y="5" width="4" height="2" fill="#f7f9fd" rx="0" stroke="#6a7fa8" stroke-width="0.4"/></svg>
<svg style="left:1.7px;top:19.56px" width="10" height="7" viewBox="0 0 10 7"><path d="M0.4 3.2 L4.6 1.4 L9 3.2 L4.8 5Z" fill="#b4cae6" stroke="#7f9cc4" stroke-width="0.4" /><path d="M0.4 3.2 L0.4 4 L4.8 5.8 L9 4 L9 3.2 L4.8 5Z" fill="#86a4cc" stroke="none" stroke-width="0" /></svg>
<div class="t" style="left:14.1px;top:20px;font-size:6.2px;line-height:8.06px;color:#111;">二三层地板</div>
<svg style="left:54.5px;top:18.76px" width="6" height="8" viewBox="0 0 6 8"><circle cx="3" cy="2.9" r="2.3" fill="#fbf7b0" stroke="#8c8636" stroke-width="0.5"/><rect x="2.1" y="5.2" width="1.8" height="2" fill="#bdbdbd" rx="0" stroke="#777" stroke-width="0.4"/></svg>
<svg style="left:71.1px;top:19.36px" width="8" height="8" viewBox="0 0 8 8"><circle cx="3.6" cy="3.6" r="3" fill="#f2e248" stroke="#8a7a20" stroke-width="0.6"/></svg>
<svg style="left:89.1px;top:18.76px" width="9" height="9" viewBox="0 0 9 9"><rect x="1" y="3.4" width="3.6" height="3.6" fill="#d9d03c" rx="0" stroke="#7a7420" stroke-width="0.5"/><path d="M1.6 3.4 L1.6 2.2 Q2.8 0.6 4 2.2 L4 3.4" fill="none" stroke="#7a7420" stroke-width="0.7" /><rect x="3.4" y="4" width="4" height="4" fill="#e6dc4a" rx="0" stroke="#7a7420" stroke-width="0.5"/></svg>
<div style="left:103.7px;top:20.06px;width:5.8px;height:5.8px;background:#c060c0;border:0.7px solid #3a3a3a;border-radius:0.6px"></div>
<div class="m" style="left:112.3px;top:20px;font-size:5.8px;line-height:7.54px;color:#555;">213</div>
<div class="m" style="left:128.7px;top:21px;font-size:5.3px;line-height:6.89px;color:#3a3a3a;letter-spacing:-0.05px">Contin...</div>
<div style="left:162.3px;top:22.76px;width:10.6px;height:0.7px;background:#555"></div>
<div class="t" style="left:175.5px;top:20px;font-size:6.2px;line-height:8.06px;color:#111;">默认</div>
<div class="m" style="left:198.3px;top:21px;font-size:5.3px;line-height:6.89px;color:#8a8a8a;letter-spacing:-0.1px">Colo...</div>
<svg style="left:227.7px;top:19.16px" width="8" height="8" viewBox="0 0 8 8"><rect x="2" y="0.4" width="3.6" height="2.6" fill="#eef2fa" rx="0" stroke="#6a7fa8" stroke-width="0.5"/><rect x="0.6" y="2.8" width="6.6" height="3.2" fill="#aebfdc" rx="0.6" stroke="#5f78a8" stroke-width="0.5"/><rect x="1.8" y="5" width="4" height="2" fill="#f7f9fd" rx="0" stroke="#6a7fa8" stroke-width="0.4"/></svg>
<svg style="left:1.7px;top:28.49px" width="10" height="7" viewBox="0 0 10 7"><path d="M0.4 3.2 L4.6 1.4 L9 3.2 L4.8 5Z" fill="#b4cae6" stroke="#7f9cc4" stroke-width="0.4" /><path d="M0.4 3.2 L0.4 4 L4.8 5.8 L9 4 L9 3.2 L4.8 5Z" fill="#86a4cc" stroke="none" stroke-width="0" /></svg>
<div class="t" style="left:14.1px;top:29px;font-size:6.2px;line-height:8.06px;color:#111;">家具</div>
<svg style="left:54.5px;top:27.69px" width="6" height="8" viewBox="0 0 6 8"><circle cx="3" cy="2.9" r="2.3" fill="#fbf7b0" stroke="#8c8636" stroke-width="0.5"/><rect x="2.1" y="5.2" width="1.8" height="2" fill="#bdbdbd" rx="0" stroke="#777" stroke-width="0.4"/></svg>
<svg style="left:71.1px;top:28.29px" width="8" height="8" viewBox="0 0 8 8"><circle cx="3.6" cy="3.6" r="3" fill="#f2e248" stroke="#8a7a20" stroke-width="0.6"/></svg>
<svg style="left:89.1px;top:27.69px" width="9" height="9" viewBox="0 0 9 9"><rect x="1" y="3.4" width="3.6" height="3.6" fill="#d9d03c" rx="0" stroke="#7a7420" stroke-width="0.5"/><path d="M1.6 3.4 L1.6 2.2 Q2.8 0.6 4 2.2 L4 3.4" fill="none" stroke="#7a7420" stroke-width="0.7" /><rect x="3.4" y="4" width="4" height="4" fill="#e6dc4a" rx="0" stroke="#7a7420" stroke-width="0.5"/></svg>
<div style="left:103.7px;top:28.99px;width:5.8px;height:5.8px;background:#ee22ee;border:0.7px solid #3a3a3a;border-radius:0.6px"></div>
<div class="t" style="left:112.1px;top:29px;font-size:6.2px;line-height:8.06px;color:#111;">洋红</div>
<div class="m" style="left:128.7px;top:30px;font-size:5.3px;line-height:6.89px;color:#3a3a3a;letter-spacing:-0.05px">Contin...</div>
<div style="left:162.3px;top:31.69px;width:10.6px;height:0.7px;background:#555"></div>
<div class="t" style="left:175.5px;top:29px;font-size:6.2px;line-height:8.06px;color:#111;">默认</div>
<div class="m" style="left:198.3px;top:30px;font-size:5.3px;line-height:6.89px;color:#8a8a8a;letter-spacing:-0.1px">Color_6</div>
<svg style="left:227.7px;top:28.09px" width="8" height="8" viewBox="0 0 8 8"><rect x="2" y="0.4" width="3.6" height="2.6" fill="#eef2fa" rx="0" stroke="#6a7fa8" stroke-width="0.5"/><rect x="0.6" y="2.8" width="6.6" height="3.2" fill="#aebfdc" rx="0.6" stroke="#5f78a8" stroke-width="0.5"/><rect x="1.8" y="5" width="4" height="2" fill="#f7f9fd" rx="0" stroke="#6a7fa8" stroke-width="0.4"/></svg>
<svg style="left:1.7px;top:37.42px" width="10" height="7" viewBox="0 0 10 7"><path d="M0.4 3.2 L4.6 1.4 L9 3.2 L4.8 5Z" fill="#b4cae6" stroke="#7f9cc4" stroke-width="0.4" /><path d="M0.4 3.2 L0.4 4 L4.8 5.8 L9 4 L9 3.2 L4.8 5Z" fill="#86a4cc" stroke="none" stroke-width="0" /></svg>
<div class="t" style="left:14.1px;top:38px;font-size:6.2px;line-height:8.06px;color:#111;">洁具</div>
<svg style="left:54.5px;top:36.62px" width="6" height="8" viewBox="0 0 6 8"><circle cx="3" cy="2.9" r="2.3" fill="#fbf7b0" stroke="#8c8636" stroke-width="0.5"/><rect x="2.1" y="5.2" width="1.8" height="2" fill="#bdbdbd" rx="0" stroke="#777" stroke-width="0.4"/></svg>
<svg style="left:71.1px;top:37.22px" width="8" height="8" viewBox="0 0 8 8"><circle cx="3.6" cy="3.6" r="3" fill="#f2e248" stroke="#8a7a20" stroke-width="0.6"/></svg>
<svg style="left:89.1px;top:36.62px" width="9" height="9" viewBox="0 0 9 9"><rect x="1" y="3.4" width="3.6" height="3.6" fill="#d9d03c" rx="0" stroke="#7a7420" stroke-width="0.5"/><path d="M1.6 3.4 L1.6 2.2 Q2.8 0.6 4 2.2 L4 3.4" fill="none" stroke="#7a7420" stroke-width="0.7" /><rect x="3.4" y="4" width="4" height="4" fill="#e6dc4a" rx="0" stroke="#7a7420" stroke-width="0.5"/></svg>
<div style="left:103.7px;top:37.92px;width:5.8px;height:5.8px;background:#ee22ee;border:0.7px solid #3a3a3a;border-radius:0.6px"></div>
<div class="t" style="left:112.1px;top:38px;font-size:6.2px;line-height:8.06px;color:#111;">洋红</div>
<div class="m" style="left:128.7px;top:39px;font-size:5.3px;line-height:6.89px;color:#3a3a3a;letter-spacing:-0.05px">Contin...</div>
<div style="left:162.3px;top:40.62px;width:10.6px;height:0.7px;background:#555"></div>
<div class="t" style="left:175.5px;top:38px;font-size:6.2px;line-height:8.06px;color:#111;">默认</div>
<div class="m" style="left:198.3px;top:39px;font-size:5.3px;line-height:6.89px;color:#8a8a8a;letter-spacing:-0.1px">Color_6</div>
<svg style="left:227.7px;top:37.02px" width="8" height="8" viewBox="0 0 8 8"><rect x="2" y="0.4" width="3.6" height="2.6" fill="#eef2fa" rx="0" stroke="#6a7fa8" stroke-width="0.5"/><rect x="0.6" y="2.8" width="6.6" height="3.2" fill="#aebfdc" rx="0.6" stroke="#5f78a8" stroke-width="0.5"/><rect x="1.8" y="5" width="4" height="2" fill="#f7f9fd" rx="0" stroke="#6a7fa8" stroke-width="0.4"/></svg>
<svg style="left:1.7px;top:46.35px" width="10" height="7" viewBox="0 0 10 7"><path d="M0.4 3.2 L4.6 1.4 L9 3.2 L4.8 5Z" fill="#b4cae6" stroke="#7f9cc4" stroke-width="0.4" /><path d="M0.4 3.2 L0.4 4 L4.8 5.8 L9 4 L9 3.2 L4.8 5Z" fill="#86a4cc" stroke="none" stroke-width="0" /></svg>
<div class="t" style="left:14.1px;top:47px;font-size:6.2px;line-height:8.06px;color:#111;">楼梯</div>
<svg style="left:54.5px;top:45.55px" width="6" height="8" viewBox="0 0 6 8"><circle cx="3" cy="2.9" r="2.3" fill="#fbf7b0" stroke="#8c8636" stroke-width="0.5"/><rect x="2.1" y="5.2" width="1.8" height="2" fill="#bdbdbd" rx="0" stroke="#777" stroke-width="0.4"/></svg>
<svg style="left:71.1px;top:46.15px" width="8" height="8" viewBox="0 0 8 8"><circle cx="3.6" cy="3.6" r="3" fill="#f2e248" stroke="#8a7a20" stroke-width="0.6"/></svg>
<svg style="left:89.1px;top:45.55px" width="9" height="9" viewBox="0 0 9 9"><rect x="1" y="3.4" width="3.6" height="3.6" fill="#d9d03c" rx="0" stroke="#7a7420" stroke-width="0.5"/><path d="M1.6 3.4 L1.6 2.2 Q2.8 0.6 4 2.2 L4 3.4" fill="none" stroke="#7a7420" stroke-width="0.7" /><rect x="3.4" y="4" width="4" height="4" fill="#e6dc4a" rx="0" stroke="#7a7420" stroke-width="0.5"/></svg>
<div style="left:103.7px;top:46.85px;width:5.8px;height:5.8px;background:#22e022;border:0.7px solid #3a3a3a;border-radius:0.6px"></div>
<div class="t" style="left:112.1px;top:47px;font-size:6.2px;line-height:8.06px;color:#111;">绿</div>
<div class="m" style="left:128.7px;top:47px;font-size:5.3px;line-height:6.89px;color:#3a3a3a;letter-spacing:-0.05px">Contin...</div>
<div style="left:162.3px;top:49.55px;width:10.6px;height:0.7px;background:#555"></div>
<div class="t" style="left:175.5px;top:47px;font-size:6.2px;line-height:8.06px;color:#111;">默认</div>
<div class="m" style="left:198.3px;top:47px;font-size:5.3px;line-height:6.89px;color:#8a8a8a;letter-spacing:-0.1px">Color_3</div>
<svg style="left:227.7px;top:45.95px" width="8" height="8" viewBox="0 0 8 8"><rect x="2" y="0.4" width="3.6" height="2.6" fill="#eef2fa" rx="0" stroke="#6a7fa8" stroke-width="0.5"/><rect x="0.6" y="2.8" width="6.6" height="3.2" fill="#aebfdc" rx="0.6" stroke="#5f78a8" stroke-width="0.5"/><rect x="1.8" y="5" width="4" height="2" fill="#f7f9fd" rx="0" stroke="#6a7fa8" stroke-width="0.4"/></svg>
<svg style="left:1.7px;top:55.28px" width="10" height="7" viewBox="0 0 10 7"><path d="M0.4 3.2 L4.6 1.4 L9 3.2 L4.8 5Z" fill="#b4cae6" stroke="#7f9cc4" stroke-width="0.4" /><path d="M0.4 3.2 L0.4 4 L4.8 5.8 L9 4 L9 3.2 L4.8 5Z" fill="#86a4cc" stroke="none" stroke-width="0" /></svg>
<div class="t" style="left:14.1px;top:56px;font-size:6.2px;line-height:8.06px;color:#111;">门窗</div>
<svg style="left:54.5px;top:54.48px" width="6" height="8" viewBox="0 0 6 8"><circle cx="3" cy="2.9" r="2.3" fill="#fbf7b0" stroke="#8c8636" stroke-width="0.5"/><rect x="2.1" y="5.2" width="1.8" height="2" fill="#bdbdbd" rx="0" stroke="#777" stroke-width="0.4"/></svg>
<svg style="left:71.1px;top:55.08px" width="8" height="8" viewBox="0 0 8 8"><circle cx="3.6" cy="3.6" r="3" fill="#f2e248" stroke="#8a7a20" stroke-width="0.6"/></svg>
<svg style="left:89.1px;top:54.48px" width="9" height="9" viewBox="0 0 9 9"><rect x="1" y="3.4" width="3.6" height="3.6" fill="#d9d03c" rx="0" stroke="#7a7420" stroke-width="0.5"/><path d="M1.6 3.4 L1.6 2.2 Q2.8 0.6 4 2.2 L4 3.4" fill="none" stroke="#7a7420" stroke-width="0.7" /><rect x="3.4" y="4" width="4" height="4" fill="#e6dc4a" rx="0" stroke="#7a7420" stroke-width="0.5"/></svg>
<div style="left:103.7px;top:55.78px;width:5.8px;height:5.8px;background:#22e0e6;border:0.7px solid #3a3a3a;border-radius:0.6px"></div>
<div class="t" style="left:112.1px;top:56px;font-size:6.2px;line-height:8.06px;color:#111;">青</div>
<div class="m" style="left:128.7px;top:56px;font-size:5.3px;line-height:6.89px;color:#3a3a3a;letter-spacing:-0.05px">Contin...</div>
<div style="left:162.3px;top:58.48px;width:10.6px;height:0.7px;background:#555"></div>
<div class="t" style="left:175.5px;top:56px;font-size:6.2px;line-height:8.06px;color:#111;">默认</div>
<div class="m" style="left:198.3px;top:56px;font-size:5.3px;line-height:6.89px;color:#8a8a8a;letter-spacing:-0.1px">Color_4</div>
<svg style="left:227.7px;top:54.88px" width="8" height="8" viewBox="0 0 8 8"><rect x="2" y="0.4" width="3.6" height="2.6" fill="#eef2fa" rx="0" stroke="#6a7fa8" stroke-width="0.5"/><rect x="0.6" y="2.8" width="6.6" height="3.2" fill="#aebfdc" rx="0.6" stroke="#5f78a8" stroke-width="0.5"/><rect x="1.8" y="5" width="4" height="2" fill="#f7f9fd" rx="0" stroke="#6a7fa8" stroke-width="0.4"/></svg>
<svg style="left:1.7px;top:64.21px" width="10" height="7" viewBox="0 0 10 7"><path d="M0.4 3.2 L4.6 1.4 L9 3.2 L4.8 5Z" fill="#b4cae6" stroke="#7f9cc4" stroke-width="0.4" /><path d="M0.4 3.2 L0.4 4 L4.8 5.8 L9 4 L9 3.2 L4.8 5Z" fill="#86a4cc" stroke="none" stroke-width="0" /></svg>
<div class="t" style="left:14.1px;top:65px;font-size:6.2px;line-height:8.06px;color:#111;">配景</div>
<svg style="left:54.5px;top:63.41px" width="6" height="8" viewBox="0 0 6 8"><circle cx="3" cy="2.9" r="2.3" fill="#fbf7b0" stroke="#8c8636" stroke-width="0.5"/><rect x="2.1" y="5.2" width="1.8" height="2" fill="#bdbdbd" rx="0" stroke="#777" stroke-width="0.4"/></svg>
<svg style="left:71.1px;top:64.01px" width="8" height="8" viewBox="0 0 8 8"><circle cx="3.6" cy="3.6" r="3" fill="#f2e248" stroke="#8a7a20" stroke-width="0.6"/></svg>
<svg style="left:89.1px;top:63.41px" width="9" height="9" viewBox="0 0 9 9"><rect x="1" y="3.4" width="3.6" height="3.6" fill="#d9d03c" rx="0" stroke="#7a7420" stroke-width="0.5"/><path d="M1.6 3.4 L1.6 2.2 Q2.8 0.6 4 2.2 L4 3.4" fill="none" stroke="#7a7420" stroke-width="0.7" /><rect x="3.4" y="4" width="4" height="4" fill="#e6dc4a" rx="0" stroke="#7a7420" stroke-width="0.5"/></svg>
<div style="left:103.7px;top:64.71px;width:5.8px;height:5.8px;background:#22e022;border:0.7px solid #3a3a3a;border-radius:0.6px"></div>
<div class="t" style="left:112.1px;top:65px;font-size:6.2px;line-height:8.06px;color:#111;">绿</div>
<div class="m" style="left:128.7px;top:65px;font-size:5.3px;line-height:6.89px;color:#3a3a3a;letter-spacing:-0.05px">Contin...</div>
<div style="left:162.3px;top:67.41px;width:10.6px;height:0.7px;background:#555"></div>
<div class="t" style="left:175.5px;top:65px;font-size:6.2px;line-height:8.06px;color:#111;">默认</div>
<div class="m" style="left:198.3px;top:65px;font-size:5.3px;line-height:6.89px;color:#8a8a8a;letter-spacing:-0.1px">Color_3</div>
<svg style="left:227.7px;top:63.81px" width="8" height="8" viewBox="0 0 8 8"><rect x="2" y="0.4" width="3.6" height="2.6" fill="#eef2fa" rx="0" stroke="#6a7fa8" stroke-width="0.5"/><rect x="0.6" y="2.8" width="6.6" height="3.2" fill="#aebfdc" rx="0.6" stroke="#5f78a8" stroke-width="0.5"/><rect x="1.8" y="5" width="4" height="2" fill="#f7f9fd" rx="0" stroke="#6a7fa8" stroke-width="0.4"/></svg>
<svg style="left:1.7px;top:73.14px" width="10" height="7" viewBox="0 0 10 7"><path d="M0.4 3.2 L4.6 1.4 L9 3.2 L4.8 5Z" fill="#b4cae6" stroke="#7f9cc4" stroke-width="0.4" /><path d="M0.4 3.2 L0.4 4 L4.8 5.8 L9 4 L9 3.2 L4.8 5Z" fill="#86a4cc" stroke="none" stroke-width="0" /></svg>
<div class="t" style="left:14.1px;top:74px;font-size:6.2px;line-height:8.06px;color:#111;">飘窗</div>
<svg style="left:54.5px;top:72.34px" width="6" height="8" viewBox="0 0 6 8"><circle cx="3" cy="2.9" r="2.3" fill="#fbf7b0" stroke="#8c8636" stroke-width="0.5"/><rect x="2.1" y="5.2" width="1.8" height="2" fill="#bdbdbd" rx="0" stroke="#777" stroke-width="0.4"/></svg>
<svg style="left:71.1px;top:72.94px" width="8" height="8" viewBox="0 0 8 8"><circle cx="3.6" cy="3.6" r="3" fill="#f2e248" stroke="#8a7a20" stroke-width="0.6"/></svg>
<svg style="left:89.1px;top:72.34px" width="9" height="9" viewBox="0 0 9 9"><rect x="1" y="3.4" width="3.6" height="3.6" fill="#d9d03c" rx="0" stroke="#7a7420" stroke-width="0.5"/><path d="M1.6 3.4 L1.6 2.2 Q2.8 0.6 4 2.2 L4 3.4" fill="none" stroke="#7a7420" stroke-width="0.7" /><rect x="3.4" y="4" width="4" height="4" fill="#e6dc4a" rx="0" stroke="#7a7420" stroke-width="0.5"/></svg>
<div style="left:103.7px;top:73.64px;width:5.8px;height:5.8px;background:#ee22ee;border:0.7px solid #3a3a3a;border-radius:0.6px"></div>
<div class="t" style="left:112.1px;top:74px;font-size:6.2px;line-height:8.06px;color:#111;">洋红</div>
<div class="m" style="left:128.7px;top:74px;font-size:5.3px;line-height:6.89px;color:#3a3a3a;letter-spacing:-0.05px">DASHEDX2</div>
<div style="left:162.3px;top:76.34px;width:10.6px;height:0.7px;background:#555"></div>
<div class="t" style="left:175.5px;top:74px;font-size:6.2px;line-height:8.06px;color:#111;">默认</div>
<div class="m" style="left:198.3px;top:74px;font-size:5.3px;line-height:6.89px;color:#8a8a8a;letter-spacing:-0.1px">Color_6</div>
<svg style="left:227.7px;top:72.74px" width="8" height="8" viewBox="0 0 8 8"><rect x="2" y="0.4" width="3.6" height="2.6" fill="#eef2fa" rx="0" stroke="#6a7fa8" stroke-width="0.5"/><rect x="0.6" y="2.8" width="6.6" height="3.2" fill="#aebfdc" rx="0.6" stroke="#5f78a8" stroke-width="0.5"/><rect x="1.8" y="5" width="4" height="2" fill="#f7f9fd" rx="0" stroke="#6a7fa8" stroke-width="0.4"/></svg>
<svg style="left:1.7px;top:82.07px" width="10" height="7" viewBox="0 0 10 7"><path d="M0.4 3.2 L4.6 1.4 L9 3.2 L4.8 5Z" fill="#b4cae6" stroke="#7f9cc4" stroke-width="0.4" /><path d="M0.4 3.2 L0.4 4 L4.8 5.8 L9 4 L9 3.2 L4.8 5Z" fill="#86a4cc" stroke="none" stroke-width="0" /></svg>
<div class="t" style="left:14.1px;top:83px;font-size:6.2px;line-height:8.06px;color:#111;">平面配景</div>
<svg style="left:54.5px;top:81.27px" width="6" height="8" viewBox="0 0 6 8"><circle cx="3" cy="2.9" r="2.3" fill="#fbf7b0" stroke="#8c8636" stroke-width="0.5"/><rect x="2.1" y="5.2" width="1.8" height="2" fill="#bdbdbd" rx="0" stroke="#777" stroke-width="0.4"/></svg>
<svg style="left:71.1px;top:81.87px" width="8" height="8" viewBox="0 0 8 8"><circle cx="3.6" cy="3.6" r="3" fill="#f2e248" stroke="#8a7a20" stroke-width="0.6"/></svg>
<svg style="left:89.1px;top:81.27px" width="9" height="9" viewBox="0 0 9 9"><rect x="1" y="3.4" width="3.6" height="3.6" fill="#d9d03c" rx="0" stroke="#7a7420" stroke-width="0.5"/><path d="M1.6 3.4 L1.6 2.2 Q2.8 0.6 4 2.2 L4 3.4" fill="none" stroke="#7a7420" stroke-width="0.7" /><rect x="3.4" y="4" width="4" height="4" fill="#e6dc4a" rx="0" stroke="#7a7420" stroke-width="0.5"/></svg>
<div style="left:103.7px;top:82.57px;width:5.8px;height:5.8px;background:#ffffff;border:0.7px solid #3a3a3a;border-radius:0.6px"></div>
<div class="t" style="left:112.1px;top:83px;font-size:6.2px;line-height:8.06px;color:#111;">白</div>
<div class="m" style="left:128.7px;top:83px;font-size:5.3px;line-height:6.89px;color:#3a3a3a;letter-spacing:-0.05px">Contin...</div>
<div style="left:162.3px;top:85.27px;width:10.6px;height:0.7px;background:#555"></div>
<div class="t" style="left:175.5px;top:83px;font-size:6.2px;line-height:8.06px;color:#111;">默认</div>
<div class="m" style="left:198.3px;top:83px;font-size:5.3px;line-height:6.89px;color:#8a8a8a;letter-spacing:-0.1px">Color_7</div>
<svg style="left:227.7px;top:81.67px" width="8" height="8" viewBox="0 0 8 8"><rect x="2" y="0.4" width="3.6" height="2.6" fill="#eef2fa" rx="0" stroke="#6a7fa8" stroke-width="0.5"/><rect x="0.6" y="2.8" width="6.6" height="3.2" fill="#aebfdc" rx="0.6" stroke="#5f78a8" stroke-width="0.5"/><rect x="1.8" y="5" width="4" height="2" fill="#f7f9fd" rx="0" stroke="#6a7fa8" stroke-width="0.4"/></svg>
<svg style="left:1.7px;top:91.0px" width="10" height="7" viewBox="0 0 10 7"><path d="M0.4 3.2 L4.6 1.4 L9 3.2 L4.8 5Z" fill="#b4cae6" stroke="#7f9cc4" stroke-width="0.4" /><path d="M0.4 3.2 L0.4 4 L4.8 5.8 L9 4 L9 3.2 L4.8 5Z" fill="#86a4cc" stroke="none" stroke-width="0" /></svg>
<div class="t" style="left:14.1px;top:92px;font-size:6.2px;line-height:8.06px;color:#111;">汽车</div>
<svg style="left:54.5px;top:90.2px" width="6" height="8" viewBox="0 0 6 8"><circle cx="3" cy="2.9" r="2.3" fill="#fbf7b0" stroke="#8c8636" stroke-width="0.5"/><rect x="2.1" y="5.2" width="1.8" height="2" fill="#bdbdbd" rx="0" stroke="#777" stroke-width="0.4"/></svg>
<svg style="left:71.1px;top:90.8px" width="8" height="8" viewBox="0 0 8 8"><circle cx="3.6" cy="3.6" r="3" fill="#f2e248" stroke="#8a7a20" stroke-width="0.6"/></svg>
<svg style="left:89.1px;top:90.2px" width="9" height="9" viewBox="0 0 9 9"><rect x="1" y="3.4" width="3.6" height="3.6" fill="#d9d03c" rx="0" stroke="#7a7420" stroke-width="0.5"/><path d="M1.6 3.4 L1.6 2.2 Q2.8 0.6 4 2.2 L4 3.4" fill="none" stroke="#7a7420" stroke-width="0.7" /><rect x="3.4" y="4" width="4" height="4" fill="#e6dc4a" rx="0" stroke="#7a7420" stroke-width="0.5"/></svg>
<div style="left:103.7px;top:91.5px;width:5.8px;height:5.8px;background:#0a0aa8;border:0.7px solid #3a3a3a;border-radius:0.6px"></div>
<div class="m" style="left:112.3px;top:91px;font-size:5.8px;line-height:7.54px;color:#555;">172</div>
<div class="m" style="left:128.7px;top:92px;font-size:5.3px;line-height:6.89px;color:#3a3a3a;letter-spacing:-0.05px">Contin...</div>
<div style="left:162.3px;top:94.2px;width:10.6px;height:0.7px;background:#555"></div>
<div class="t" style="left:175.5px;top:92px;font-size:6.2px;line-height:8.06px;color:#111;">默认</div>
<div class="m" style="left:198.3px;top:92px;font-size:5.3px;line-height:6.89px;color:#8a8a8a;letter-spacing:-0.1px">Colo...</div>
<svg style="left:227.7px;top:90.6px" width="8" height="8" viewBox="0 0 8 8"><rect x="2" y="0.4" width="3.6" height="2.6" fill="#eef2fa" rx="0" stroke="#6a7fa8" stroke-width="0.5"/><rect x="0.6" y="2.8" width="6.6" height="3.2" fill="#aebfdc" rx="0.6" stroke="#5f78a8" stroke-width="0.5"/><rect x="1.8" y="5" width="4" height="2" fill="#f7f9fd" rx="0" stroke="#6a7fa8" stroke-width="0.4"/></svg>
<svg style="left:1.7px;top:99.93px" width="10" height="7" viewBox="0 0 10 7"><path d="M0.4 3.2 L4.6 1.4 L9 3.2 L4.8 5Z" fill="#eceef1" stroke="#dadde2" stroke-width="0.4" /><path d="M0.4 3.2 L0.4 4 L4.8 5.8 L9 4 L9 3.2 L4.8 5Z" fill="#dfe2e6" stroke="none" stroke-width="0" /></svg>
<div class="t" style="left:14.1px;top:101px;font-size:6.2px;line-height:8.06px;color:#111;">墙</div>
<svg style="left:54.5px;top:99.13px" width="6" height="8" viewBox="0 0 6 8"><circle cx="3" cy="2.9" r="2.3" fill="#fbf7b0" stroke="#8c8636" stroke-width="0.5"/><rect x="2.1" y="5.2" width="1.8" height="2" fill="#bdbdbd" rx="0" stroke="#777" stroke-width="0.4"/></svg>
<svg style="left:71.1px;top:99.73px" width="8" height="8" viewBox="0 0 8 8"><circle cx="3.6" cy="3.6" r="3" fill="#f2e248" stroke="#8a7a20" stroke-width="0.6"/></svg>
<svg style="left:89.1px;top:99.13px" width="9" height="9" viewBox="0 0 9 9"><rect x="1" y="3.4" width="3.6" height="3.6" fill="#d9d03c" rx="0" stroke="#7a7420" stroke-width="0.5"/><path d="M1.6 3.4 L1.6 2.2 Q2.8 0.6 4 2.2 L4 3.4" fill="none" stroke="#7a7420" stroke-width="0.7" /><rect x="3.4" y="4" width="4" height="4" fill="#e6dc4a" rx="0" stroke="#7a7420" stroke-width="0.5"/></svg>
<div style="left:103.7px;top:100.43px;width:5.8px;height:5.8px;background:#ffffff;border:0.7px solid #3a3a3a;border-radius:0.6px"></div>
<div class="t" style="left:112.1px;top:101px;font-size:6.2px;line-height:8.06px;color:#111;">白</div>
<div class="m" style="left:128.7px;top:101px;font-size:5.3px;line-height:6.89px;color:#3a3a3a;letter-spacing:-0.05px">Contin...</div>
<div style="left:162.3px;top:103.13px;width:10.6px;height:0.7px;background:#555"></div>
<div class="t" style="left:175.5px;top:101px;font-size:6.2px;line-height:8.06px;color:#111;">默认</div>
<div class="m" style="left:198.3px;top:101px;font-size:5.3px;line-height:6.89px;color:#8a8a8a;letter-spacing:-0.1px">Color_7</div>
<svg style="left:227.7px;top:99.53px" width="8" height="8" viewBox="0 0 8 8"><rect x="2" y="0.4" width="3.6" height="2.6" fill="#eef2fa" rx="0" stroke="#6a7fa8" stroke-width="0.5"/><rect x="0.6" y="2.8" width="6.6" height="3.2" fill="#aebfdc" rx="0.6" stroke="#5f78a8" stroke-width="0.5"/><rect x="1.8" y="5" width="4" height="2" fill="#f7f9fd" rx="0" stroke="#6a7fa8" stroke-width="0.4"/></svg>
<svg style="left:1.7px;top:108.86px" width="10" height="7" viewBox="0 0 10 7"><path d="M0.4 3.2 L4.6 1.4 L9 3.2 L4.8 5Z" fill="#b4cae6" stroke="#7f9cc4" stroke-width="0.4" /><path d="M0.4 3.2 L0.4 4 L4.8 5.8 L9 4 L9 3.2 L4.8 5Z" fill="#86a4cc" stroke="none" stroke-width="0" /></svg>
<div class="t" style="left:14.1px;top:110px;font-size:6.2px;line-height:8.06px;color:#111;">墙填充</div>
<svg style="left:54.5px;top:108.06px" width="6" height="8" viewBox="0 0 6 8"><circle cx="3" cy="2.9" r="2.3" fill="#fbf7b0" stroke="#8c8636" stroke-width="0.5"/><rect x="2.1" y="5.2" width="1.8" height="2" fill="#bdbdbd" rx="0" stroke="#777" stroke-width="0.4"/></svg>
<svg style="left:71.1px;top:108.66px" width="8" height="8" viewBox="0 0 8 8"><circle cx="3.6" cy="3.6" r="3" fill="#f2e248" stroke="#8a7a20" stroke-width="0.6"/></svg>
<svg style="left:89.1px;top:108.06px" width="9" height="9" viewBox="0 0 9 9"><rect x="1" y="3.4" width="3.6" height="3.6" fill="#d9d03c" rx="0" stroke="#7a7420" stroke-width="0.5"/><path d="M1.6 3.4 L1.6 2.2 Q2.8 0.6 4 2.2 L4 3.4" fill="none" stroke="#7a7420" stroke-width="0.7" /><rect x="3.4" y="4" width="4" height="4" fill="#e6dc4a" rx="0" stroke="#7a7420" stroke-width="0.5"/></svg>
<div style="left:103.7px;top:109.36px;width:5.8px;height:5.8px;background:#ffffff;border:0.7px solid #3a3a3a;border-radius:0.6px"></div>
<div class="t" style="left:112.1px;top:110px;font-size:6.2px;line-height:8.06px;color:#111;">白</div>
<div class="m" style="left:128.7px;top:110px;font-size:5.3px;line-height:6.89px;color:#3a3a3a;letter-spacing:-0.05px">Contin...</div>
<div style="left:162.3px;top:112.06px;width:10.6px;height:0.7px;background:#555"></div>
<div class="t" style="left:175.5px;top:110px;font-size:6.2px;line-height:8.06px;color:#111;">默认</div>
<div class="m" style="left:198.3px;top:110px;font-size:5.3px;line-height:6.89px;color:#8a8a8a;letter-spacing:-0.1px">Color_7</div>
<svg style="left:227.7px;top:108.46px" width="8" height="8" viewBox="0 0 8 8"><rect x="2" y="0.4" width="3.6" height="2.6" fill="#eef2fa" rx="0" stroke="#6a7fa8" stroke-width="0.5"/><rect x="0.6" y="2.8" width="6.6" height="3.2" fill="#aebfdc" rx="0.6" stroke="#5f78a8" stroke-width="0.5"/><rect x="1.8" y="5" width="4" height="2" fill="#f7f9fd" rx="0" stroke="#6a7fa8" stroke-width="0.4"/></svg>
<div style="left:0.0px;top:116.89px;width:368px;height:8.5px;background:#3399ff"></div>
<div style="left:12.5px;top:116.89px;width:38.6px;height:8.5px;border:0.6px solid #1a3a6a"></div>
<svg style="left:2.3px;top:117.59px" width="9" height="8" viewBox="0 0 9 8"><path d="M1 4 L3.2 6.6 L7.4 0.8" fill="none" stroke="#35b53a" stroke-width="1.2" /></svg>
<div class="t" style="left:14.1px;top:119px;font-size:6.2px;line-height:8.06px;color:#0c2466;">墙线</div>
<svg style="left:54.5px;top:116.99px" width="6" height="8" viewBox="0 0 6 8"><circle cx="3" cy="2.9" r="2.3" fill="#fffce0" stroke="#8c8636" stroke-width="0.5"/><rect x="2.1" y="5.2" width="1.8" height="2" fill="#bdbdbd" rx="0" stroke="#777" stroke-width="0.4"/></svg>
<svg style="left:71.1px;top:117.59px" width="8" height="8" viewBox="0 0 8 8"><circle cx="3.6" cy="3.6" r="3" fill="#f2e248" stroke="#8a7a20" stroke-width="0.6"/></svg>
<svg style="left:89.1px;top:116.99px" width="9" height="9" viewBox="0 0 9 9"><rect x="1" y="3.4" width="3.6" height="3.6" fill="#d9d03c" rx="0" stroke="#7a7420" stroke-width="0.5"/><path d="M1.6 3.4 L1.6 2.2 Q2.8 0.6 4 2.2 L4 3.4" fill="none" stroke="#7a7420" stroke-width="0.7" /><rect x="3.4" y="4" width="4" height="4" fill="#e6dc4a" rx="0" stroke="#7a7420" stroke-width="0.5"/></svg>
<div style="left:103.7px;top:118.29px;width:5.8px;height:5.8px;background:#ffffff;border:0.7px solid #3a3a3a;border-radius:0.6px"></div>
<div class="t" style="left:112.1px;top:119px;font-size:6.2px;line-height:8.06px;color:#0c2466;">白</div>
<div class="m" style="left:128.7px;top:119px;font-size:5.3px;line-height:6.89px;color:#123a86;letter-spacing:-0.05px">Contin...</div>
<div style="left:162.3px;top:120.99px;width:10.6px;height:0.7px;background:#123a86"></div>
<div class="t" style="left:175.5px;top:119px;font-size:6.2px;line-height:8.06px;color:#0c2466;">默认</div>
<div class="m" style="left:198.3px;top:119px;font-size:5.3px;line-height:6.89px;color:#5f8fd0;letter-spacing:-0.1px">Color_7</div>
<svg style="left:227.7px;top:117.39px" width="8" height="8" viewBox="0 0 8 8"><rect x="2" y="0.4" width="3.6" height="2.6" fill="#eef2fa" rx="0" stroke="#6a7fa8" stroke-width="0.5"/><rect x="0.6" y="2.8" width="6.6" height="3.2" fill="#aebfdc" rx="0.6" stroke="#5f78a8" stroke-width="0.5"/><rect x="1.8" y="5" width="4" height="2" fill="#f7f9fd" rx="0" stroke="#6a7fa8" stroke-width="0.4"/></svg>
<svg style="left:1.7px;top:126.72px" width="10" height="7" viewBox="0 0 10 7"><path d="M0.4 3.2 L4.6 1.4 L9 3.2 L4.8 5Z" fill="#b4cae6" stroke="#7f9cc4" stroke-width="0.4" /><path d="M0.4 3.2 L0.4 4 L4.8 5.8 L9 4 L9 3.2 L4.8 5Z" fill="#86a4cc" stroke="none" stroke-width="0" /></svg>
<div class="t" style="left:14.1px;top:128px;font-size:6.2px;line-height:8.06px;color:#111;">图框</div>
<svg style="left:54.5px;top:125.92px" width="6" height="8" viewBox="0 0 6 8"><circle cx="3" cy="2.9" r="2.3" fill="#fbf7b0" stroke="#8c8636" stroke-width="0.5"/><rect x="2.1" y="5.2" width="1.8" height="2" fill="#bdbdbd" rx="0" stroke="#777" stroke-width="0.4"/></svg>
<svg style="left:71.1px;top:126.52px" width="8" height="8" viewBox="0 0 8 8"><circle cx="3.6" cy="3.6" r="3" fill="#f2e248" stroke="#8a7a20" stroke-width="0.6"/></svg>
<svg style="left:89.1px;top:125.92px" width="9" height="9" viewBox="0 0 9 9"><rect x="1" y="3.4" width="3.6" height="3.6" fill="#d9d03c" rx="0" stroke="#7a7420" stroke-width="0.5"/><path d="M1.6 3.4 L1.6 2.2 Q2.8 0.6 4 2.2 L4 3.4" fill="none" stroke="#7a7420" stroke-width="0.7" /><rect x="3.4" y="4" width="4" height="4" fill="#e6dc4a" rx="0" stroke="#7a7420" stroke-width="0.5"/></svg>
<div style="left:103.7px;top:127.22px;width:5.8px;height:5.8px;background:#ffffff;border:0.7px solid #3a3a3a;border-radius:0.6px"></div>
<div class="t" style="left:112.1px;top:128px;font-size:6.2px;line-height:8.06px;color:#111;">白</div>
<div class="m" style="left:128.7px;top:128px;font-size:5.3px;line-height:6.89px;color:#3a3a3a;letter-spacing:-0.05px">Contin...</div>
<div style="left:162.3px;top:129.52px;width:10.6px;height:1.6px;background:#111"></div>
<div class="m" style="left:175.1px;top:128px;font-size:5.3px;line-height:6.89px;color:#555;">0....</div>
<div class="m" style="left:198.3px;top:128px;font-size:5.3px;line-height:6.89px;color:#8a8a8a;letter-spacing:-0.1px">Color_7</div>
<svg style="left:227.7px;top:126.32px" width="8" height="8" viewBox="0 0 8 8"><rect x="2" y="0.4" width="3.6" height="2.6" fill="#eef2fa" rx="0" stroke="#6a7fa8" stroke-width="0.5"/><rect x="0.6" y="2.8" width="6.6" height="3.2" fill="#aebfdc" rx="0.6" stroke="#5f78a8" stroke-width="0.5"/><rect x="1.8" y="5" width="4" height="2" fill="#f7f9fd" rx="0" stroke="#6a7fa8" stroke-width="0.4"/></svg>
<svg style="left:1.7px;top:135.65px" width="10" height="7" viewBox="0 0 10 7"><path d="M0.4 3.2 L4.6 1.4 L9 3.2 L4.8 5Z" fill="#b4cae6" stroke="#7f9cc4" stroke-width="0.4" /><path d="M0.4 3.2 L0.4 4 L4.8 5.8 L9 4 L9 3.2 L4.8 5Z" fill="#86a4cc" stroke="none" stroke-width="0" /></svg>
<div class="t" style="left:14.1px;top:136px;font-size:6.2px;line-height:8.06px;color:#111;">文字</div>
<svg style="left:54.5px;top:134.85px" width="6" height="8" viewBox="0 0 6 8"><circle cx="3" cy="2.9" r="2.3" fill="#fbf7b0" stroke="#8c8636" stroke-width="0.5"/><rect x="2.1" y="5.2" width="1.8" height="2" fill="#bdbdbd" rx="0" stroke="#777" stroke-width="0.4"/></svg>
<svg style="left:71.1px;top:135.45px" width="8" height="8" viewBox="0 0 8 8"><circle cx="3.6" cy="3.6" r="3" fill="#f2e248" stroke="#8a7a20" stroke-width="0.6"/></svg>
<svg style="left:89.1px;top:134.85px" width="9" height="9" viewBox="0 0 9 9"><rect x="1" y="3.4" width="3.6" height="3.6" fill="#d9d03c" rx="0" stroke="#7a7420" stroke-width="0.5"/><path d="M1.6 3.4 L1.6 2.2 Q2.8 0.6 4 2.2 L4 3.4" fill="none" stroke="#7a7420" stroke-width="0.7" /><rect x="3.4" y="4" width="4" height="4" fill="#e6dc4a" rx="0" stroke="#7a7420" stroke-width="0.5"/></svg>
<div style="left:103.7px;top:136.15px;width:5.8px;height:5.8px;background:#22e022;border:0.7px solid #3a3a3a;border-radius:0.6px"></div>
<div class="t" style="left:112.1px;top:136px;font-size:6.2px;line-height:8.06px;color:#111;">绿</div>
<div class="m" style="left:128.7px;top:137px;font-size:5.3px;line-height:6.89px;color:#3a3a3a;letter-spacing:-0.05px">Contin...</div>
<div style="left:162.3px;top:138.85px;width:10.6px;height:0.7px;background:#555"></div>
<div class="t" style="left:175.5px;top:136px;font-size:6.2px;line-height:8.06px;color:#111;">默认</div>
<div class="m" style="left:198.3px;top:137px;font-size:5.3px;line-height:6.89px;color:#8a8a8a;letter-spacing:-0.1px">Color_3</div>
<svg style="left:227.7px;top:135.25px" width="8" height="8" viewBox="0 0 8 8"><rect x="2" y="0.4" width="3.6" height="2.6" fill="#eef2fa" rx="0" stroke="#6a7fa8" stroke-width="0.5"/><rect x="0.6" y="2.8" width="6.6" height="3.2" fill="#aebfdc" rx="0.6" stroke="#5f78a8" stroke-width="0.5"/><rect x="1.8" y="5" width="4" height="2" fill="#f7f9fd" rx="0" stroke="#6a7fa8" stroke-width="0.4"/></svg>
<svg style="left:1.7px;top:144.58px" width="10" height="7" viewBox="0 0 10 7"><path d="M0.4 3.2 L4.6 1.4 L9 3.2 L4.8 5Z" fill="#b4cae6" stroke="#7f9cc4" stroke-width="0.4" /><path d="M0.4 3.2 L0.4 4 L4.8 5.8 L9 4 L9 3.2 L4.8 5Z" fill="#86a4cc" stroke="none" stroke-width="0" /></svg>
<div class="t" style="left:14.1px;top:145px;font-size:6.2px;line-height:8.06px;color:#111;">物体</div>
<svg style="left:54.5px;top:143.78px" width="6" height="8" viewBox="0 0 6 8"><circle cx="3" cy="2.9" r="2.3" fill="#fbf7b0" stroke="#8c8636" stroke-width="0.5"/><rect x="2.1" y="5.2" width="1.8" height="2" fill="#bdbdbd" rx="0" stroke="#777" stroke-width="0.4"/></svg>
<svg style="left:71.1px;top:144.38px" width="8" height="8" viewBox="0 0 8 8"><circle cx="3.6" cy="3.6" r="3" fill="#f2e248" stroke="#8a7a20" stroke-width="0.6"/></svg>
<svg style="left:89.1px;top:143.78px" width="9" height="9" viewBox="0 0 9 9"><rect x="1" y="3.4" width="3.6" height="3.6" fill="#d9d03c" rx="0" stroke="#7a7420" stroke-width="0.5"/><path d="M1.6 3.4 L1.6 2.2 Q2.8 0.6 4 2.2 L4 3.4" fill="none" stroke="#7a7420" stroke-width="0.7" /><rect x="3.4" y="4" width="4" height="4" fill="#e6dc4a" rx="0" stroke="#7a7420" stroke-width="0.5"/></svg>
<div style="left:103.7px;top:145.08px;width:5.8px;height:5.8px;background:#ee22ee;border:0.7px solid #3a3a3a;border-radius:0.6px"></div>
<div class="t" style="left:112.1px;top:145px;font-size:6.2px;line-height:8.06px;color:#111;">洋红</div>
<div class="m" style="left:128.7px;top:146px;font-size:5.3px;line-height:6.89px;color:#3a3a3a;letter-spacing:-0.05px">Contin...</div>
<div style="left:162.3px;top:147.78px;width:10.6px;height:0.7px;background:#555"></div>
<div class="t" style="left:175.5px;top:145px;font-size:6.2px;line-height:8.06px;color:#111;">默认</div>
<div class="m" style="left:198.3px;top:146px;font-size:5.3px;line-height:6.89px;color:#8a8a8a;letter-spacing:-0.1px">Color_6</div>
<svg style="left:227.7px;top:144.18px" width="8" height="8" viewBox="0 0 8 8"><rect x="2" y="0.4" width="3.6" height="2.6" fill="#eef2fa" rx="0" stroke="#6a7fa8" stroke-width="0.5"/><rect x="0.6" y="2.8" width="6.6" height="3.2" fill="#aebfdc" rx="0.6" stroke="#5f78a8" stroke-width="0.5"/><rect x="1.8" y="5" width="4" height="2" fill="#f7f9fd" rx="0" stroke="#6a7fa8" stroke-width="0.4"/></svg>
</div>
<div style="left:736.4px;top:178.8px;width:11.8px;height:158.6px;background:#f0f0f0;border-left:0.5px solid #e2e2e2"></div>
<svg class="i" style="left:740.4px;top:182px" width="4" height="3" viewBox="0 0 4 3"><path d="M0 2.2 L2 0 L4 2.2Z" fill="#333" stroke="none" stroke-width="0" /></svg>
<svg class="i" style="left:740.4px;top:331.4px" width="4" height="3" viewBox="0 0 4 3"><path d="M0 0 L2 2.2 L4 0Z" fill="#333" stroke="none" stroke-width="0" /></svg>
<div style="left:737.4px;top:254.4px;width:10px;height:58px;background:linear-gradient(90deg,#f4f4f4,#dcdcdc);border:0.6px solid #9c9c9c;border-radius:1.4px"></div>
<div style="left:740.4px;top:281.6px;width:4px;height:0.5px;background:#888"></div>
<div style="left:740.4px;top:283.0px;width:4px;height:0.5px;background:#888"></div>
<div style="left:740.4px;top:284.40000000000003px;width:4px;height:0.5px;background:#888"></div>
<div style="left:368.3px;top:337.6px;width:368.2px;height:9.6px;background:#f0f0f0;border-top:0.5px solid #e2e2e2"></div>
<svg class="i" style="left:371px;top:340.6px" width="3" height="4" viewBox="0 0 3 4"><path d="M2.2 0 L0 2 L2.2 4Z" fill="#333" stroke="none" stroke-width="0" /></svg>
<svg class="i" style="left:730.6px;top:340.6px" width="3" height="4" viewBox="0 0 3 4"><path d="M0 0 L2.2 2 L0 4Z" fill="#333" stroke="none" stroke-width="0" /></svg>
<div style="left:377.6px;top:338.4px;width:258.4px;height:8.2px;background:linear-gradient(#f6f6f6,#d9d9d9);border:0.6px solid #9c9c9c;border-radius:1.4px"></div>
<div style="left:505.0px;top:340.6px;width:0.5px;height:4px;background:#888"></div>
<div style="left:506.4px;top:340.6px;width:0.5px;height:4px;background:#888"></div>
<div style="left:507.8px;top:340.6px;width:0.5px;height:4px;background:#888"></div>
<div style="left:736.4px;top:337.6px;width:11.8px;height:9.6px;background:#f0f0f0"></div>
<div style="left:258.4px;top:352.2px;width:489.8px;height:12.4px;background:#f3f1f0;border:0.6px solid #dddad8;border-top-color:#cfccca"></div>
<div class="t" style="left:260.8px;top:357px;font-size:6.2px;line-height:8.06px;color:#222;">全部:</div>
<div class="t" style="left:279.8px;top:357px;font-size:6.2px;line-height:8.06px;color:#222;">显示了</div>
<div class="t" style="left:301.8px;top:357px;font-size:6.2px;line-height:8.06px;color:#222;">38</div>
<div class="t" style="left:311.8px;top:357px;font-size:6.2px;line-height:8.06px;color:#222;">个图层,</div>
<div class="t" style="left:337.8px;top:357px;font-size:6.2px;line-height:8.06px;color:#222;">共</div>
<div class="t" style="left:346.4px;top:357px;font-size:6.2px;line-height:8.06px;color:#222;">38</div>
<div class="t" style="left:356.8px;top:357px;font-size:6.2px;line-height:8.06px;color:#222;">个图层</div>
<div style="left:260.4px;top:373px;width:6.4px;height:6.6px;background:#fdfdfd;border:0.6px solid #8a8f99"></div>
<div class="t" style="left:269px;top:374px;font-size:6.2px;line-height:8.06px;color:#222;">反转过滤器(<u>I</u>)</div>
<div style="left:343.8px;top:373px;width:6.4px;height:6.6px;background:#fdfdfd;border:0.6px solid #8a8f99"></div>
<svg class="i" style="left:344.40000000000003px;top:373.6px" width="6" height="6" viewBox="0 0 6 6"><path d="M0.8 2.8 L2.2 4.4 L4.6 0.8" fill="none" stroke="#2a3f7a" stroke-width="0.9" /></svg>
<div class="t" style="left:352.4px;top:374px;font-size:6.2px;line-height:8.06px;color:#222;">指示正在使用的图层(<u>U</u>)</div>
<div style="left:260.4px;top:386.8px;width:6.4px;height:6.6px;background:#fdfdfd;border:0.6px solid #8a8f99"></div>
<svg class="i" style="left:261.0px;top:387.40000000000003px" width="6" height="6" viewBox="0 0 6 6"><path d="M0.8 2.8 L2.2 4.4 L4.6 0.8" fill="none" stroke="#2a3f7a" stroke-width="0.9" /></svg>
<div class="t" style="left:269px;top:387px;font-size:6.2px;line-height:8.06px;color:#222;">应用到图层工具栏(<u>T</u>)</div>
<div style="left:534.6px;top:383px;width:49.0px;height:12.4px;border:0.6px solid #3c7fb1;border-radius:1.6px;background:linear-gradient(#f4f4f4,#ececec 48%,#dedede 52%,#d2d2d2);box-shadow:inset 0 0 0 0.7px #7fd0f4;"></div>
<div class="t" style="left:534.6px;top:386px;font-size:6.2px;line-height:8.06px;color:#111;width:49.0px;text-align:center">确定</div>
<div style="left:589.6px;top:383px;width:49.0px;height:12.4px;border:0.6px solid #8e8e8e;border-radius:1.6px;background:linear-gradient(#f4f4f4,#ececec 48%,#dedede 52%,#d2d2d2);box-shadow:inset 0 0 0 0.6px #fbfbfb;"></div>
<div class="t" style="left:589.6px;top:386px;font-size:6.2px;line-height:8.06px;color:#111;width:49.0px;text-align:center">取消</div>
<div style="left:645px;top:383px;width:48.700000000000045px;height:12.4px;border:0.6px solid #8e8e8e;border-radius:1.6px;background:linear-gradient(#f4f4f4,#ececec 48%,#dedede 52%,#d2d2d2);box-shadow:inset 0 0 0 0.6px #fbfbfb;"></div>
<div class="t" style="left:645px;top:386px;font-size:6.2px;line-height:8.06px;color:#111;width:48.700000000000045px;text-align:center">应用(<u>A</u>)</div>
<div style="left:700.2px;top:383px;width:48.799999999999955px;height:12.4px;border:0.6px solid #8e8e8e;border-radius:1.6px;background:linear-gradient(#f4f4f4,#ececec 48%,#dedede 52%,#d2d2d2);box-shadow:inset 0 0 0 0.6px #fbfbfb;"></div>
<div class="t" style="left:700.2px;top:386px;font-size:6.2px;line-height:8.06px;color:#111;width:48.799999999999955px;text-align:center">帮助(<u>H</u>)</div>
<svg style="left:0;top:0" width="1000" height="545" viewBox="0 0 1000 545"><path d="M871 487.2 L955 487.2 Q961.6 487.2 961.6 493.6 L961.6 519.6 Q961.6 526 955 526 L941.6 526 L939.6 534 L930 526 L871 526 Q864.6 526 864.6 519.6 L864.6 493.6 Q864.6 487.2 871 487.2Z" fill="#ffffe1" stroke="#4a4a4a" stroke-width="0.7"/></svg>
<div style="left:908px;top:487.6px;width:12px;height:3.4px;background:#f4f4ea;border-radius:1px"></div>
<div style="left:923px;top:487.6px;width:20px;height:3.4px;background:#f4f4ea;border-radius:1px"></div>
<svg class="i" style="left:870.2px;top:491.8px" width="8" height="8" viewBox="0 0 8 8"><circle cx="3.8" cy="3.8" r="3.5" fill="#2f62c8" stroke="#1d3f86" stroke-width="0.5"/><rect x="3.3" y="3.2" width="1" height="2.8" fill="#fff" rx="0"/><circle cx="3.8" cy="2" r="0.6" fill="#fff"/></svg>
<div class="t" style="left:883px;top:493px;font-size:6.3px;line-height:8.19px;color:#111;font-weight:bold">通讯中心</div>
<div style="left:949px;top:492px;width:8px;height:7.6px;background:#fff;border:0.6px solid #9a9a88"></div>
<div class="t" style="left:950.6px;top:494px;font-size:5.6px;line-height:7.28px;color:#111;font-weight:bold">✕</div>
<div class="t" style="left:873px;top:503px;font-size:6.1px;line-height:7.93px;color:#222;">使软件保持最新的简单方法。</div>
<div class="t" style="left:873px;top:513px;font-size:6.1px;line-height:7.93px;color:#2233cc;text-decoration:underline">单击此处。</div>
<div style="left:940.6px;top:526.4px;width:48.6px;height:8.2px;background:#fdfdfd;border:0.5px solid #a8a8a8"></div>
<div class="t" style="left:947.6px;top:529px;font-size:5.6px;line-height:7.28px;color:#777;">网速</div>
<div style="left:912px;top:532.4px;width:13.2px;height:12.6px;background:#f0622a;border-radius:2px"></div>
<div class="t" style="left:912px;top:533px;font-size:11.4px;line-height:14.82px;color:#fff;width:13.2px;text-align:center;font-weight:bold;font-style:italic">S</div>
<div class="t" style="left:929px;top:535px;font-size:8px;line-height:10.4px;color:#2a78d8;font-weight:bold">中</div>
<svg class="i" style="left:940.6px;top:533.6px" width="10" height="10" viewBox="0 0 10 10"><path d="M6.4 1 A4 4 0 1 0 8.6 7 A3.4 3.4 0 0 1 6.4 1Z" fill="#2a68c8" stroke="none" stroke-width="0" /></svg>
<svg class="i" style="left:951.6px;top:534.6px" width="8" height="8" viewBox="0 0 8 8"><circle cx="2" cy="2" r="1" fill="#2a68c8"/><circle cx="5" cy="4.4" r="1.1" fill="#2a68c8"/><circle cx="2.6" cy="6.4" r="0.8" fill="#2a68c8"/></svg>
<svg class="i" style="left:962.4px;top:534.2px" width="10" height="9" viewBox="0 0 10 9"><rect x="0.6" y="1" width="8.4" height="6.4" fill="#eaf2fc" rx="1" stroke="#2a68c8" stroke-width="0.9"/><path d="M2 3 L7.6 3 M2 5 L7.6 5" fill="none" stroke="#2a68c8" stroke-width="0.7" /></svg>
<svg class="i" style="left:975px;top:533.6px" width="8" height="10" viewBox="0 0 8 10"><circle cx="4" cy="2.2" r="1.6" fill="#b8c4d4"/><path d="M1.4 9 Q1.4 4.4 4 4.4 Q6.6 4.4 6.6 9Z" fill="#b8c4d4" stroke="none" stroke-width="0" /></svg>
<svg class="i" style="left:985.6px;top:534.2px" width="10" height="10" viewBox="0 0 10 10"><path d="M1 2 L3.4 0.8 Q5 2 6.6 0.8 L9 2 L8 4.2 L7 3.8 L7 8.6 L3 8.6 L3 3.8 L2 4.2Z" fill="#2a68c8" stroke="none" stroke-width="0" /></svg>
</div>
</body></html>
